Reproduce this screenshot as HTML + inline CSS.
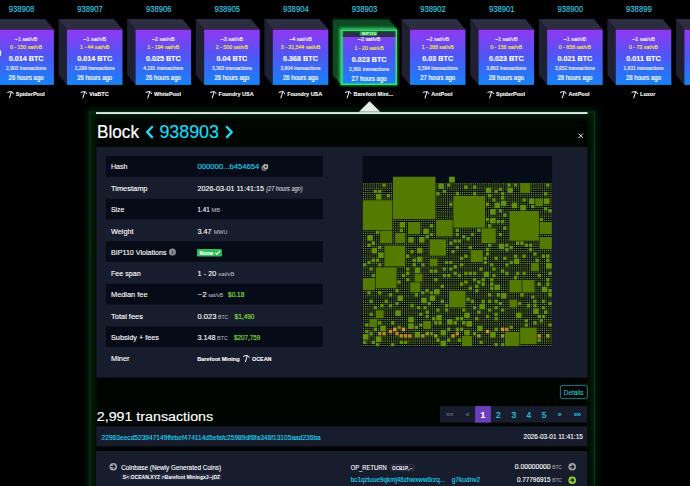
<!DOCTYPE html>
<html><head><meta charset="utf-8"><style>
html,body{margin:0;padding:0;background:#000;width:690px;height:486px;overflow:hidden}
svg{display:block}
text{font-family:"Liberation Sans",sans-serif}
</style></head><body>
<svg width="690" height="486" viewBox="0 0 690 486">
<defs>
<linearGradient id="face" x1="0" y1="0" x2="0" y2="1"><stop offset="0" stop-color="#9238f2"/><stop offset="0.45" stop-color="#5254f4"/><stop offset="1" stop-color="#1683f8"/></linearGradient>
<filter id="blur1" x="-50%" y="-50%" width="200%" height="200%"><feGaussianBlur stdDeviation="0.8"/></filter>
<filter id="blur2" x="-50%" y="-50%" width="200%" height="200%"><feGaussianBlur stdDeviation="1.5"/></filter>
<filter id="blur3" x="-50%" y="-50%" width="200%" height="200%"><feGaussianBlur stdDeviation="3"/></filter>
<filter id="blur4" x="-50%" y="-50%" width="200%" height="200%"><feGaussianBlur stdDeviation="4"/></filter>
</defs>
<rect width="690" height="486" fill="#000"/>
<rect x="89.5" y="112.0" width="505.50" height="394.0" fill="none" stroke="#0a3515" stroke-width="5" filter="url(#blur3)" opacity="0.7"/>
<rect x="89.5" y="112.0" width="505.50" height="394.0" fill="#010501"/>
<clipPath id="cclip"><rect x="89.5" y="112.0" width="505.50" height="394.0"/></clipPath>
<g clip-path="url(#cclip)"><rect x="89.5" y="112.0" width="505.50" height="394.0" fill="none" stroke="#042a0c" stroke-width="10" filter="url(#blur3)" opacity="0.75"/></g>
<rect x="89.9" y="112.0" width="504.70" height="394.0" fill="none" stroke="#12401f" stroke-width="0.8"/>
<polygon points="-10.00,19.4 45.60,19.4 53.90,29.6 -1.70,29.6" fill="#2b2e41"/>
<polygon points="-10.00,19.4 -1.70,29.6 -1.70,84.9 -10.00,74.90" fill="#1f2132"/>
<rect x="-1.70" y="29.6" width="55.6" height="55.30" fill="url(#face)"/>
<rect x="-10.00" y="19.4" width="55.6" height="0.9" fill="#31334a"/>
<text x="21.50" y="11.80" font-size="8.13" fill="#34cce4" stroke="#34cce4" stroke-width="0.130" text-anchor="middle" font-weight="normal" font-style="normal"  textLength="25.60" lengthAdjust="spacingAndGlyphs">938908</text>
<text x="26.10" y="40.60" font-size="6.21" fill="#f6f0ff" stroke="#f6f0ff" stroke-width="0.200" text-anchor="middle" font-weight="normal" font-style="normal"  textLength="22.66" lengthAdjust="spacingAndGlyphs">~1 sat/vB</text>
<text x="26.10" y="48.90" font-size="5.98" fill="#f2e23c" stroke="#f2e23c" stroke-width="0.200" text-anchor="middle" font-weight="normal" font-style="normal"  textLength="32.08" lengthAdjust="spacingAndGlyphs">0 - 150 sat/vB</text>
<text x="26.10" y="61.00" font-size="7.70" fill="#fff" stroke="#fff" stroke-width="0.123" text-anchor="middle" font-weight="bold" font-style="normal"  textLength="34.82" lengthAdjust="spacingAndGlyphs">0.014 BTC</text>
<text x="26.10" y="70.30" font-size="5.49" fill="#f0f0ff" stroke="#f0f0ff" stroke-width="0.150" text-anchor="middle" font-weight="normal" font-style="normal"  textLength="40.04" lengthAdjust="spacingAndGlyphs">2,903 transactions</text>
<text x="26.10" y="80.10" font-size="6.42" fill="#fff" stroke="#fff" stroke-width="0.180" text-anchor="middle" font-weight="normal" font-style="normal"  textLength="35.03" lengthAdjust="spacingAndGlyphs">26 hours ago</text>
<g transform="translate(7.38,91.30) scale(1.000)"><path d="M0.3,1.0 Q2.6,0.1 4.4,0.5 Q5.5,0.9 5.9,2.3 M3.9,0.5 Q3.3,3.6 2.1,6.5" stroke="#fff" stroke-width="1.0" fill="none" stroke-linecap="round" stroke-linejoin="round"/></g>
<text x="15.78" y="96.40" font-size="5.89" fill="#fff" stroke="#fff" stroke-width="0.094" text-anchor="start" font-weight="bold" font-style="normal"  textLength="29.03" lengthAdjust="spacingAndGlyphs">SpiderPool</text>
<polygon points="58.60,19.4 114.20,19.4 122.50,29.6 66.90,29.6" fill="#2b2e41"/>
<polygon points="58.60,19.4 66.90,29.6 66.90,84.9 58.60,74.90" fill="#1f2132"/>
<rect x="66.90" y="29.6" width="55.6" height="55.30" fill="url(#face)"/>
<rect x="58.60" y="19.4" width="55.6" height="0.9" fill="#31334a"/>
<text x="90.10" y="11.80" font-size="8.13" fill="#34cce4" stroke="#34cce4" stroke-width="0.130" text-anchor="middle" font-weight="normal" font-style="normal"  textLength="25.60" lengthAdjust="spacingAndGlyphs">938907</text>
<text x="94.70" y="40.60" font-size="6.21" fill="#f6f0ff" stroke="#f6f0ff" stroke-width="0.200" text-anchor="middle" font-weight="normal" font-style="normal"  textLength="22.66" lengthAdjust="spacingAndGlyphs">~1 sat/vB</text>
<text x="94.70" y="48.90" font-size="5.98" fill="#f2e23c" stroke="#f2e23c" stroke-width="0.200" text-anchor="middle" font-weight="normal" font-style="normal"  textLength="29.19" lengthAdjust="spacingAndGlyphs">1 - 44 sat/vB</text>
<text x="94.70" y="61.00" font-size="7.70" fill="#fff" stroke="#fff" stroke-width="0.123" text-anchor="middle" font-weight="bold" font-style="normal"  textLength="34.82" lengthAdjust="spacingAndGlyphs">0.014 BTC</text>
<text x="94.70" y="70.30" font-size="5.49" fill="#f0f0ff" stroke="#f0f0ff" stroke-width="0.150" text-anchor="middle" font-weight="normal" font-style="normal"  textLength="40.04" lengthAdjust="spacingAndGlyphs">2,299 transactions</text>
<text x="94.70" y="80.10" font-size="6.42" fill="#fff" stroke="#fff" stroke-width="0.180" text-anchor="middle" font-weight="normal" font-style="normal"  textLength="35.03" lengthAdjust="spacingAndGlyphs">26 hours ago</text>
<g transform="translate(80.77,91.30) scale(1.000)"><path d="M0.3,1.0 Q2.6,0.1 4.4,0.5 Q5.5,0.9 5.9,2.3 M3.9,0.5 Q3.3,3.6 2.1,6.5" stroke="#fff" stroke-width="1.0" fill="none" stroke-linecap="round" stroke-linejoin="round"/></g>
<text x="89.17" y="96.40" font-size="5.89" fill="#fff" stroke="#fff" stroke-width="0.094" text-anchor="start" font-weight="bold" font-style="normal"  textLength="19.46" lengthAdjust="spacingAndGlyphs">ViaBTC</text>
<polygon points="127.20,19.4 182.80,19.4 191.10,29.6 135.50,29.6" fill="#2b2e41"/>
<polygon points="127.20,19.4 135.50,29.6 135.50,84.9 127.20,74.90" fill="#1f2132"/>
<rect x="135.50" y="29.6" width="55.6" height="55.30" fill="url(#face)"/>
<rect x="127.20" y="19.4" width="55.6" height="0.9" fill="#31334a"/>
<text x="158.70" y="11.80" font-size="8.13" fill="#34cce4" stroke="#34cce4" stroke-width="0.130" text-anchor="middle" font-weight="normal" font-style="normal"  textLength="25.60" lengthAdjust="spacingAndGlyphs">938906</text>
<text x="163.30" y="40.60" font-size="6.21" fill="#f6f0ff" stroke="#f6f0ff" stroke-width="0.200" text-anchor="middle" font-weight="normal" font-style="normal"  textLength="22.66" lengthAdjust="spacingAndGlyphs">~2 sat/vB</text>
<text x="163.30" y="48.90" font-size="5.98" fill="#f2e23c" stroke="#f2e23c" stroke-width="0.200" text-anchor="middle" font-weight="normal" font-style="normal"  textLength="32.08" lengthAdjust="spacingAndGlyphs">1 - 194 sat/vB</text>
<text x="163.30" y="61.00" font-size="7.70" fill="#fff" stroke="#fff" stroke-width="0.123" text-anchor="middle" font-weight="bold" font-style="normal"  textLength="34.82" lengthAdjust="spacingAndGlyphs">0.025 BTC</text>
<text x="163.30" y="70.30" font-size="5.49" fill="#f0f0ff" stroke="#f0f0ff" stroke-width="0.150" text-anchor="middle" font-weight="normal" font-style="normal"  textLength="40.04" lengthAdjust="spacingAndGlyphs">4,191 transactions</text>
<text x="163.30" y="80.10" font-size="6.42" fill="#fff" stroke="#fff" stroke-width="0.180" text-anchor="middle" font-weight="normal" font-style="normal"  textLength="35.03" lengthAdjust="spacingAndGlyphs">26 hours ago</text>
<g transform="translate(145.66,91.30) scale(1.000)"><path d="M0.3,1.0 Q2.6,0.1 4.4,0.5 Q5.5,0.9 5.9,2.3 M3.9,0.5 Q3.3,3.6 2.1,6.5" stroke="#fff" stroke-width="1.0" fill="none" stroke-linecap="round" stroke-linejoin="round"/></g>
<text x="154.06" y="96.40" font-size="5.89" fill="#fff" stroke="#fff" stroke-width="0.094" text-anchor="start" font-weight="bold" font-style="normal"  textLength="26.89" lengthAdjust="spacingAndGlyphs">WhitePool</text>
<polygon points="195.80,19.4 251.40,19.4 259.70,29.6 204.10,29.6" fill="#2b2e41"/>
<polygon points="195.80,19.4 204.10,29.6 204.10,84.9 195.80,74.90" fill="#1f2132"/>
<rect x="204.10" y="29.6" width="55.6" height="55.30" fill="url(#face)"/>
<rect x="195.80" y="19.4" width="55.6" height="0.9" fill="#31334a"/>
<text x="227.30" y="11.80" font-size="8.13" fill="#34cce4" stroke="#34cce4" stroke-width="0.130" text-anchor="middle" font-weight="normal" font-style="normal"  textLength="25.60" lengthAdjust="spacingAndGlyphs">938905</text>
<text x="231.90" y="40.60" font-size="6.21" fill="#f6f0ff" stroke="#f6f0ff" stroke-width="0.200" text-anchor="middle" font-weight="normal" font-style="normal"  textLength="22.66" lengthAdjust="spacingAndGlyphs">~3 sat/vB</text>
<text x="231.90" y="48.90" font-size="5.98" fill="#f2e23c" stroke="#f2e23c" stroke-width="0.200" text-anchor="middle" font-weight="normal" font-style="normal"  textLength="32.08" lengthAdjust="spacingAndGlyphs">2 - 500 sat/vB</text>
<text x="231.90" y="61.00" font-size="7.70" fill="#fff" stroke="#fff" stroke-width="0.123" text-anchor="middle" font-weight="bold" font-style="normal"  textLength="30.81" lengthAdjust="spacingAndGlyphs">0.04 BTC</text>
<text x="231.90" y="70.30" font-size="5.49" fill="#f0f0ff" stroke="#f0f0ff" stroke-width="0.150" text-anchor="middle" font-weight="normal" font-style="normal"  textLength="40.04" lengthAdjust="spacingAndGlyphs">3,383 transactions</text>
<text x="231.90" y="80.10" font-size="6.42" fill="#fff" stroke="#fff" stroke-width="0.180" text-anchor="middle" font-weight="normal" font-style="normal"  textLength="35.03" lengthAdjust="spacingAndGlyphs">26 hours ago</text>
<g transform="translate(210.13,91.30) scale(1.000)"><path d="M0.3,1.0 Q2.6,0.1 4.4,0.5 Q5.5,0.9 5.9,2.3 M3.9,0.5 Q3.3,3.6 2.1,6.5" stroke="#fff" stroke-width="1.0" fill="none" stroke-linecap="round" stroke-linejoin="round"/></g>
<text x="218.53" y="96.40" font-size="5.89" fill="#fff" stroke="#fff" stroke-width="0.094" text-anchor="start" font-weight="bold" font-style="normal"  textLength="35.14" lengthAdjust="spacingAndGlyphs">Foundry USA</text>
<polygon points="264.40,19.4 320.00,19.4 328.30,29.6 272.70,29.6" fill="#2b2e41"/>
<polygon points="264.40,19.4 272.70,29.6 272.70,84.9 264.40,74.90" fill="#1f2132"/>
<rect x="272.70" y="29.6" width="55.6" height="55.30" fill="url(#face)"/>
<rect x="264.40" y="19.4" width="55.6" height="0.9" fill="#31334a"/>
<text x="295.90" y="11.80" font-size="8.13" fill="#34cce4" stroke="#34cce4" stroke-width="0.130" text-anchor="middle" font-weight="normal" font-style="normal"  textLength="25.60" lengthAdjust="spacingAndGlyphs">938904</text>
<text x="300.50" y="40.60" font-size="6.21" fill="#f6f0ff" stroke="#f6f0ff" stroke-width="0.200" text-anchor="middle" font-weight="normal" font-style="normal"  textLength="22.66" lengthAdjust="spacingAndGlyphs">~4 sat/vB</text>
<text x="300.50" y="48.90" font-size="5.98" fill="#f2e23c" stroke="#f2e23c" stroke-width="0.200" text-anchor="middle" font-weight="normal" font-style="normal"  textLength="39.31" lengthAdjust="spacingAndGlyphs">3 - 31,544 sat/vB</text>
<text x="300.50" y="61.00" font-size="7.70" fill="#fff" stroke="#fff" stroke-width="0.123" text-anchor="middle" font-weight="bold" font-style="normal"  textLength="34.82" lengthAdjust="spacingAndGlyphs">0.368 BTC</text>
<text x="300.50" y="70.30" font-size="5.49" fill="#f0f0ff" stroke="#f0f0ff" stroke-width="0.150" text-anchor="middle" font-weight="normal" font-style="normal"  textLength="40.04" lengthAdjust="spacingAndGlyphs">3,604 transactions</text>
<text x="300.50" y="80.10" font-size="6.42" fill="#fff" stroke="#fff" stroke-width="0.180" text-anchor="middle" font-weight="normal" font-style="normal"  textLength="35.03" lengthAdjust="spacingAndGlyphs">26 hours ago</text>
<g transform="translate(278.73,91.30) scale(1.000)"><path d="M0.3,1.0 Q2.6,0.1 4.4,0.5 Q5.5,0.9 5.9,2.3 M3.9,0.5 Q3.3,3.6 2.1,6.5" stroke="#fff" stroke-width="1.0" fill="none" stroke-linecap="round" stroke-linejoin="round"/></g>
<text x="287.13" y="96.40" font-size="5.89" fill="#fff" stroke="#fff" stroke-width="0.094" text-anchor="start" font-weight="bold" font-style="normal"  textLength="35.14" lengthAdjust="spacingAndGlyphs">Foundry USA</text>
<polygon points="333.00,19.4 388.60,19.4 396.90,29.6 396.90,84.9 341.30,84.9 333.00,74.90" fill="none" stroke="#1aff60" stroke-width="1.5" opacity="0.2" filter="url(#blur2)"/>
<polygon points="333.00,19.4 388.60,19.4 396.90,29.6 341.30,29.6" fill="#0e4a22"/>
<polygon points="333.00,19.4 341.30,29.6 341.30,84.9 333.00,74.90" fill="#0e4a22"/>
<clipPath id="selclip"><polygon points="333.00,19.4 388.60,19.4 396.90,29.6 341.30,29.6 341.30,84.9 333.00,74.90"/></clipPath>
<g clip-path="url(#selclip)"><rect x="341.30" y="29.6" width="55.6" height="55.30" fill="none" stroke="#2cff70" stroke-width="4" opacity="0.55" filter="url(#blur2)"/></g>
<rect x="341.30" y="29.6" width="55.6" height="55.30" fill="url(#face)"/>
<rect x="341.30" y="29.6" width="55.6" height="7.4" fill="#2a3146"/>
<rect x="359.90" y="31.4" width="17.4" height="4.4" rx="0.8" fill="#2fa84a"/>
<text x="369.10" y="35.00" font-size="3.64" fill="#d8ffe0"  text-anchor="middle" font-weight="bold" font-style="normal"  textLength="14.00" lengthAdjust="spacingAndGlyphs">BIP110</text>
<rect x="341.30" y="29.60" width="55.6" height="55.30" fill="none" stroke="#2cff70" stroke-width="2" opacity="0.5" filter="url(#blur1)"/>
<rect x="341.90" y="30.20" width="54.40" height="54.10" fill="none" stroke="#34f068" stroke-width="1.3"/>
<text x="364.50" y="11.80" font-size="8.13" fill="#34cce4" stroke="#34cce4" stroke-width="0.130" text-anchor="middle" font-weight="normal" font-style="normal"  textLength="25.60" lengthAdjust="spacingAndGlyphs">938903</text>
<text x="369.10" y="41.40" font-size="6.21" fill="#f6f0ff" stroke="#f6f0ff" stroke-width="0.200" text-anchor="middle" font-weight="normal" font-style="normal"  textLength="22.66" lengthAdjust="spacingAndGlyphs">~2 sat/vB</text>
<text x="369.10" y="49.50" font-size="5.98" fill="#f2e23c" stroke="#f2e23c" stroke-width="0.200" text-anchor="middle" font-weight="normal" font-style="normal"  textLength="29.19" lengthAdjust="spacingAndGlyphs">1 - 20 sat/vB</text>
<text x="369.10" y="61.50" font-size="7.70" fill="#fff" stroke="#fff" stroke-width="0.123" text-anchor="middle" font-weight="bold" font-style="normal"  textLength="34.82" lengthAdjust="spacingAndGlyphs">0.023 BTC</text>
<text x="369.10" y="70.80" font-size="5.49" fill="#f0f0ff" stroke="#f0f0ff" stroke-width="0.150" text-anchor="middle" font-weight="normal" font-style="normal"  textLength="40.04" lengthAdjust="spacingAndGlyphs">2,991 transactions</text>
<text x="369.10" y="80.60" font-size="6.42" fill="#fff" stroke="#fff" stroke-width="0.180" text-anchor="middle" font-weight="normal" font-style="normal"  textLength="35.03" lengthAdjust="spacingAndGlyphs">27 hours ago</text>
<g transform="translate(345.04,91.30) scale(1.000)"><path d="M0.3,1.0 Q2.6,0.1 4.4,0.5 Q5.5,0.9 5.9,2.3 M3.9,0.5 Q3.3,3.6 2.1,6.5" stroke="#fff" stroke-width="1.0" fill="none" stroke-linecap="round" stroke-linejoin="round"/></g>
<text x="353.44" y="96.40" font-size="5.89" fill="#fff" stroke="#fff" stroke-width="0.094" text-anchor="start" font-weight="bold" font-style="normal"  textLength="39.72" lengthAdjust="spacingAndGlyphs">Barefoot Mini...</text>
<polygon points="401.60,19.4 457.20,19.4 465.50,29.6 409.90,29.6" fill="#2b2e41"/>
<polygon points="401.60,19.4 409.90,29.6 409.90,84.9 401.60,74.90" fill="#1f2132"/>
<rect x="409.90" y="29.6" width="55.6" height="55.30" fill="url(#face)"/>
<rect x="401.60" y="19.4" width="55.6" height="0.9" fill="#31334a"/>
<text x="433.10" y="11.80" font-size="8.13" fill="#34cce4" stroke="#34cce4" stroke-width="0.130" text-anchor="middle" font-weight="normal" font-style="normal"  textLength="25.60" lengthAdjust="spacingAndGlyphs">938902</text>
<text x="437.70" y="40.60" font-size="6.21" fill="#f6f0ff" stroke="#f6f0ff" stroke-width="0.200" text-anchor="middle" font-weight="normal" font-style="normal"  textLength="22.66" lengthAdjust="spacingAndGlyphs">~2 sat/vB</text>
<text x="437.70" y="48.90" font-size="5.98" fill="#f2e23c" stroke="#f2e23c" stroke-width="0.200" text-anchor="middle" font-weight="normal" font-style="normal"  textLength="32.08" lengthAdjust="spacingAndGlyphs">1 - 268 sat/vB</text>
<text x="437.70" y="61.00" font-size="7.70" fill="#fff" stroke="#fff" stroke-width="0.123" text-anchor="middle" font-weight="bold" font-style="normal"  textLength="30.81" lengthAdjust="spacingAndGlyphs">0.03 BTC</text>
<text x="437.70" y="70.30" font-size="5.49" fill="#f0f0ff" stroke="#f0f0ff" stroke-width="0.150" text-anchor="middle" font-weight="normal" font-style="normal"  textLength="40.04" lengthAdjust="spacingAndGlyphs">3,594 transactions</text>
<text x="437.70" y="80.10" font-size="6.42" fill="#fff" stroke="#fff" stroke-width="0.180" text-anchor="middle" font-weight="normal" font-style="normal"  textLength="35.03" lengthAdjust="spacingAndGlyphs">27 hours ago</text>
<g transform="translate(422.96,91.30) scale(1.000)"><path d="M0.3,1.0 Q2.6,0.1 4.4,0.5 Q5.5,0.9 5.9,2.3 M3.9,0.5 Q3.3,3.6 2.1,6.5" stroke="#fff" stroke-width="1.0" fill="none" stroke-linecap="round" stroke-linejoin="round"/></g>
<text x="431.36" y="96.40" font-size="5.89" fill="#fff" stroke="#fff" stroke-width="0.094" text-anchor="start" font-weight="bold" font-style="normal"  textLength="21.08" lengthAdjust="spacingAndGlyphs">AntPool</text>
<polygon points="470.20,19.4 525.80,19.4 534.10,29.6 478.50,29.6" fill="#2b2e41"/>
<polygon points="470.20,19.4 478.50,29.6 478.50,84.9 470.20,74.90" fill="#1f2132"/>
<rect x="478.50" y="29.6" width="55.6" height="55.30" fill="url(#face)"/>
<rect x="470.20" y="19.4" width="55.6" height="0.9" fill="#31334a"/>
<text x="501.70" y="11.80" font-size="8.13" fill="#34cce4" stroke="#34cce4" stroke-width="0.130" text-anchor="middle" font-weight="normal" font-style="normal"  textLength="25.60" lengthAdjust="spacingAndGlyphs">938901</text>
<text x="506.30" y="40.60" font-size="6.21" fill="#f6f0ff" stroke="#f6f0ff" stroke-width="0.200" text-anchor="middle" font-weight="normal" font-style="normal"  textLength="22.66" lengthAdjust="spacingAndGlyphs">~1 sat/vB</text>
<text x="506.30" y="48.90" font-size="5.98" fill="#f2e23c" stroke="#f2e23c" stroke-width="0.200" text-anchor="middle" font-weight="normal" font-style="normal"  textLength="32.08" lengthAdjust="spacingAndGlyphs">0 - 156 sat/vB</text>
<text x="506.30" y="61.00" font-size="7.70" fill="#fff" stroke="#fff" stroke-width="0.123" text-anchor="middle" font-weight="bold" font-style="normal"  textLength="34.82" lengthAdjust="spacingAndGlyphs">0.023 BTC</text>
<text x="506.30" y="70.30" font-size="5.49" fill="#f0f0ff" stroke="#f0f0ff" stroke-width="0.150" text-anchor="middle" font-weight="normal" font-style="normal"  textLength="40.04" lengthAdjust="spacingAndGlyphs">3,863 transactions</text>
<text x="506.30" y="80.10" font-size="6.42" fill="#fff" stroke="#fff" stroke-width="0.180" text-anchor="middle" font-weight="normal" font-style="normal"  textLength="35.03" lengthAdjust="spacingAndGlyphs">28 hours ago</text>
<g transform="translate(487.58,91.30) scale(1.000)"><path d="M0.3,1.0 Q2.6,0.1 4.4,0.5 Q5.5,0.9 5.9,2.3 M3.9,0.5 Q3.3,3.6 2.1,6.5" stroke="#fff" stroke-width="1.0" fill="none" stroke-linecap="round" stroke-linejoin="round"/></g>
<text x="495.98" y="96.40" font-size="5.89" fill="#fff" stroke="#fff" stroke-width="0.094" text-anchor="start" font-weight="bold" font-style="normal"  textLength="29.03" lengthAdjust="spacingAndGlyphs">SpiderPool</text>
<polygon points="538.80,19.4 594.40,19.4 602.70,29.6 547.10,29.6" fill="#2b2e41"/>
<polygon points="538.80,19.4 547.10,29.6 547.10,84.9 538.80,74.90" fill="#1f2132"/>
<rect x="547.10" y="29.6" width="55.6" height="55.30" fill="url(#face)"/>
<rect x="538.80" y="19.4" width="55.6" height="0.9" fill="#31334a"/>
<text x="570.30" y="11.80" font-size="8.13" fill="#34cce4" stroke="#34cce4" stroke-width="0.130" text-anchor="middle" font-weight="normal" font-style="normal"  textLength="25.60" lengthAdjust="spacingAndGlyphs">938900</text>
<text x="574.90" y="40.60" font-size="6.21" fill="#f6f0ff" stroke="#f6f0ff" stroke-width="0.200" text-anchor="middle" font-weight="normal" font-style="normal"  textLength="22.66" lengthAdjust="spacingAndGlyphs">~1 sat/vB</text>
<text x="574.90" y="48.90" font-size="5.98" fill="#f2e23c" stroke="#f2e23c" stroke-width="0.200" text-anchor="middle" font-weight="normal" font-style="normal"  textLength="32.08" lengthAdjust="spacingAndGlyphs">0 - 656 sat/vB</text>
<text x="574.90" y="61.00" font-size="7.70" fill="#fff" stroke="#fff" stroke-width="0.123" text-anchor="middle" font-weight="bold" font-style="normal"  textLength="34.82" lengthAdjust="spacingAndGlyphs">0.021 BTC</text>
<text x="574.90" y="70.30" font-size="5.49" fill="#f0f0ff" stroke="#f0f0ff" stroke-width="0.150" text-anchor="middle" font-weight="normal" font-style="normal"  textLength="40.04" lengthAdjust="spacingAndGlyphs">3,652 transactions</text>
<text x="574.90" y="80.10" font-size="6.42" fill="#fff" stroke="#fff" stroke-width="0.180" text-anchor="middle" font-weight="normal" font-style="normal"  textLength="35.03" lengthAdjust="spacingAndGlyphs">28 hours ago</text>
<g transform="translate(560.16,91.30) scale(1.000)"><path d="M0.3,1.0 Q2.6,0.1 4.4,0.5 Q5.5,0.9 5.9,2.3 M3.9,0.5 Q3.3,3.6 2.1,6.5" stroke="#fff" stroke-width="1.0" fill="none" stroke-linecap="round" stroke-linejoin="round"/></g>
<text x="568.56" y="96.40" font-size="5.89" fill="#fff" stroke="#fff" stroke-width="0.094" text-anchor="start" font-weight="bold" font-style="normal"  textLength="21.08" lengthAdjust="spacingAndGlyphs">AntPool</text>
<polygon points="607.40,19.4 663.00,19.4 671.30,29.6 615.70,29.6" fill="#2b2e41"/>
<polygon points="607.40,19.4 615.70,29.6 615.70,84.9 607.40,74.90" fill="#1f2132"/>
<rect x="615.70" y="29.6" width="55.6" height="55.30" fill="url(#face)"/>
<rect x="607.40" y="19.4" width="55.6" height="0.9" fill="#31334a"/>
<text x="638.90" y="11.80" font-size="8.13" fill="#34cce4" stroke="#34cce4" stroke-width="0.130" text-anchor="middle" font-weight="normal" font-style="normal"  textLength="25.60" lengthAdjust="spacingAndGlyphs">938899</text>
<text x="643.50" y="40.60" font-size="6.21" fill="#f6f0ff" stroke="#f6f0ff" stroke-width="0.200" text-anchor="middle" font-weight="normal" font-style="normal"  textLength="22.66" lengthAdjust="spacingAndGlyphs">~1 sat/vB</text>
<text x="643.50" y="48.90" font-size="5.98" fill="#f2e23c" stroke="#f2e23c" stroke-width="0.200" text-anchor="middle" font-weight="normal" font-style="normal"  textLength="29.19" lengthAdjust="spacingAndGlyphs">0 - 73 sat/vB</text>
<text x="643.50" y="61.00" font-size="7.70" fill="#fff" stroke="#fff" stroke-width="0.123" text-anchor="middle" font-weight="bold" font-style="normal"  textLength="34.42" lengthAdjust="spacingAndGlyphs">0.011 BTC</text>
<text x="643.50" y="70.30" font-size="5.49" fill="#f0f0ff" stroke="#f0f0ff" stroke-width="0.150" text-anchor="middle" font-weight="normal" font-style="normal"  textLength="40.04" lengthAdjust="spacingAndGlyphs">1,631 transactions</text>
<text x="643.50" y="80.10" font-size="6.42" fill="#fff" stroke="#fff" stroke-width="0.180" text-anchor="middle" font-weight="normal" font-style="normal"  textLength="35.03" lengthAdjust="spacingAndGlyphs">28 hours ago</text>
<g transform="translate(631.66,91.30) scale(1.000)"><path d="M0.3,1.0 Q2.6,0.1 4.4,0.5 Q5.5,0.9 5.9,2.3 M3.9,0.5 Q3.3,3.6 2.1,6.5" stroke="#fff" stroke-width="1.0" fill="none" stroke-linecap="round" stroke-linejoin="round"/></g>
<text x="640.06" y="96.40" font-size="5.89" fill="#fff" stroke="#fff" stroke-width="0.094" text-anchor="start" font-weight="bold" font-style="normal"  textLength="15.28" lengthAdjust="spacingAndGlyphs">Luxor</text>
<polygon points="676.00,19.4 731.60,19.4 739.90,29.6 684.30,29.6" fill="#2b2e41"/>
<polygon points="676.00,19.4 684.30,29.6 684.30,84.9 676.00,74.90" fill="#1f2132"/>
<rect x="684.30" y="29.6" width="55.6" height="55.30" fill="url(#face)"/>
<rect x="676.00" y="19.4" width="55.6" height="0.9" fill="#31334a"/>
<text x="707.50" y="11.80" font-size="8.13" fill="#34cce4" stroke="#34cce4" stroke-width="0.130" text-anchor="middle" font-weight="normal" font-style="normal"  textLength="25.60" lengthAdjust="spacingAndGlyphs">938898</text>
<text x="712.10" y="40.60" font-size="6.21" fill="#f6f0ff" stroke="#f6f0ff" stroke-width="0.200" text-anchor="middle" font-weight="normal" font-style="normal"  textLength="22.66" lengthAdjust="spacingAndGlyphs">~1 sat/vB</text>
<text x="712.10" y="48.90" font-size="5.98" fill="#f2e23c" stroke="#f2e23c" stroke-width="0.200" text-anchor="middle" font-weight="normal" font-style="normal"  textLength="29.19" lengthAdjust="spacingAndGlyphs">0 - 73 sat/vB</text>
<text x="712.10" y="61.00" font-size="7.70" fill="#fff" stroke="#fff" stroke-width="0.123" text-anchor="middle" font-weight="bold" font-style="normal"  textLength="34.42" lengthAdjust="spacingAndGlyphs">0.011 BTC</text>
<text x="712.10" y="70.30" font-size="5.49" fill="#f0f0ff" stroke="#f0f0ff" stroke-width="0.150" text-anchor="middle" font-weight="normal" font-style="normal"  textLength="40.04" lengthAdjust="spacingAndGlyphs">1,631 transactions</text>
<text x="712.10" y="80.10" font-size="6.42" fill="#fff" stroke="#fff" stroke-width="0.180" text-anchor="middle" font-weight="normal" font-style="normal"  textLength="35.03" lengthAdjust="spacingAndGlyphs">28 hours ago</text>
<g transform="translate(700.26,91.30) scale(1.000)"><path d="M0.3,1.0 Q2.6,0.1 4.4,0.5 Q5.5,0.9 5.9,2.3 M3.9,0.5 Q3.3,3.6 2.1,6.5" stroke="#fff" stroke-width="1.0" fill="none" stroke-linecap="round" stroke-linejoin="round"/></g>
<text x="708.66" y="96.40" font-size="5.89" fill="#fff" stroke="#fff" stroke-width="0.094" text-anchor="start" font-weight="bold" font-style="normal"  textLength="15.28" lengthAdjust="spacingAndGlyphs">Luxor</text>
<rect x="-2" y="50.2" width="3.2" height="5.8" rx="1.2" fill="#e8e8f0"/>
<polygon points="369.6,101.2 380.2,111.8 359.0,111.8" fill="#e2efe6"/>
<rect x="96" y="112.1" width="491.5" height="1.9" fill="#e3ece5"/>
<text x="97.00" y="138.30" font-size="17.80" fill="#fff" stroke="#fff" stroke-width="0.200" text-anchor="start" font-weight="normal" font-style="normal"  textLength="42.00" lengthAdjust="spacingAndGlyphs">Block</text>
<path d="M152.0,127.0 L147.2,132.1 L152.0,137.2" stroke="#1bd8f4" stroke-width="2.5" fill="none" stroke-linecap="round" stroke-linejoin="round"/>
<text x="159.40" y="138.30" font-size="17.80" fill="#1bd8f4" stroke="#1bd8f4" stroke-width="0.200" text-anchor="start" font-weight="normal" font-style="normal"  textLength="59.60" lengthAdjust="spacingAndGlyphs">938903</text>
<path d="M226.9,127.0 L231.7,132.1 L226.9,137.2" stroke="#1bd8f4" stroke-width="2.5" fill="none" stroke-linecap="round" stroke-linejoin="round"/>
<path d="M578.9,133.9 L582.7,137.7 M582.7,133.9 L578.9,137.7" stroke="#fff" stroke-width="0.9" stroke-linecap="round"/>
<rect x="96.3" y="146.8" width="491.20" height="230.80" fill="#181d2d"/>
<rect x="105.8" y="156.20" width="217.00" height="20.5" fill="#050b17"/>
<text x="111.00" y="169.45" font-size="8.03" fill="#fff" stroke="#fff" stroke-width="0.125" text-anchor="start" font-weight="normal" font-style="normal"  textLength="16.50" lengthAdjust="spacingAndGlyphs">Hash</text>
<text x="111.00" y="191.15" font-size="8.03" fill="#fff" stroke="#fff" stroke-width="0.125" text-anchor="start" font-weight="normal" font-style="normal"  textLength="36.50" lengthAdjust="spacingAndGlyphs">Timestamp</text>
<rect x="105.8" y="198.75" width="217.00" height="20.5" fill="#050b17"/>
<text x="111.00" y="212.00" font-size="8.03" fill="#fff" stroke="#fff" stroke-width="0.125" text-anchor="start" font-weight="normal" font-style="normal"  textLength="13.40" lengthAdjust="spacingAndGlyphs">Size</text>
<text x="111.00" y="233.70" font-size="8.03" fill="#fff" stroke="#fff" stroke-width="0.125" text-anchor="start" font-weight="normal" font-style="normal"  textLength="22.60" lengthAdjust="spacingAndGlyphs">Weight</text>
<rect x="105.8" y="241.30" width="217.00" height="20.5" fill="#050b17"/>
<text x="111.00" y="254.55" font-size="8.03" fill="#fff" stroke="#fff" stroke-width="0.125" text-anchor="start" font-weight="normal" font-style="normal"  textLength="55.50" lengthAdjust="spacingAndGlyphs">BIP110 Violations</text>
<text x="111.00" y="276.25" font-size="8.03" fill="#fff" stroke="#fff" stroke-width="0.125" text-anchor="start" font-weight="normal" font-style="normal"  textLength="29.80" lengthAdjust="spacingAndGlyphs">Fee span</text>
<rect x="105.8" y="283.85" width="217.00" height="20.5" fill="#050b17"/>
<text x="111.00" y="297.10" font-size="8.03" fill="#fff" stroke="#fff" stroke-width="0.125" text-anchor="start" font-weight="normal" font-style="normal"  textLength="36.50" lengthAdjust="spacingAndGlyphs">Median fee</text>
<text x="111.00" y="318.80" font-size="8.03" fill="#fff" stroke="#fff" stroke-width="0.125" text-anchor="start" font-weight="normal" font-style="normal"  textLength="32.00" lengthAdjust="spacingAndGlyphs">Total fees</text>
<rect x="105.8" y="326.40" width="217.00" height="20.5" fill="#050b17"/>
<text x="111.00" y="339.65" font-size="8.03" fill="#fff" stroke="#fff" stroke-width="0.125" text-anchor="start" font-weight="normal" font-style="normal"  textLength="48.00" lengthAdjust="spacingAndGlyphs">Subsidy + fees</text>
<text x="111.00" y="361.35" font-size="8.03" fill="#fff" stroke="#fff" stroke-width="0.125" text-anchor="start" font-weight="normal" font-style="normal"  textLength="18.60" lengthAdjust="spacingAndGlyphs">Miner</text>
<text x="197.60" y="169.45" font-size="8.03" fill="#1bd8f4" stroke="#1bd8f4" stroke-width="0.125" text-anchor="start" font-weight="normal" font-style="normal"  textLength="61.60" lengthAdjust="spacingAndGlyphs">000000...b454654</text>
<g transform="translate(261.8,164.2)"><rect x="0.4" y="1.9" width="4.0" height="4.0" rx="0.6" fill="none" stroke="#d8d8d8" stroke-width="0.8"/><rect x="1.9" y="0.4" width="4.0" height="4.0" rx="0.6" fill="#d8d8d8" stroke="#d8d8d8" stroke-width="0.5"/><rect x="2.9" y="1.4" width="2.0" height="2.0" fill="#050b17"/></g>
<text x="197.60" y="191.15" font-size="8.03" fill="#fff" stroke="#fff" stroke-width="0.125" text-anchor="start" font-weight="normal" font-style="normal"  textLength="66.30" lengthAdjust="spacingAndGlyphs">2026-03-01 11:41:15</text>
<text x="266.20" y="191.15" font-size="6.42" fill="#d6d8de" stroke="#d6d8de" stroke-width="0.103" text-anchor="start" font-weight="normal" font-style="italic"  textLength="36.40" lengthAdjust="spacingAndGlyphs">(27 hours ago)</text>
<text x="197.60" y="212.00" font-size="8.03" fill="#fff" stroke="#fff" stroke-width="0.125" text-anchor="start" font-weight="normal" font-style="normal"  textLength="12.20" lengthAdjust="spacingAndGlyphs">1.41</text>
<text x="211.60" y="212.00" font-size="5.83" fill="#b0b4c0" stroke="#b0b4c0" stroke-width="0.091" text-anchor="start" font-weight="normal" font-style="normal"  textLength="8.50" lengthAdjust="spacingAndGlyphs">MB</text>
<text x="197.60" y="233.70" font-size="8.03" fill="#fff" stroke="#fff" stroke-width="0.125" text-anchor="start" font-weight="normal" font-style="normal"  textLength="13.90" lengthAdjust="spacingAndGlyphs">3.47</text>
<text x="213.80" y="233.70" font-size="5.83" fill="#b0b4c0" stroke="#b0b4c0" stroke-width="0.091" text-anchor="start" font-weight="normal" font-style="normal"  textLength="13.70" lengthAdjust="spacingAndGlyphs">MWU</text>
<circle cx="172.4" cy="252.1" r="3.5" fill="#8a8d96"/>
<text x="172.40" y="254.00" font-size="5.35" fill="#181d2d"  text-anchor="middle" font-weight="bold" font-style="normal" >i</text>
<rect x="197.0" y="249.1" width="24.9" height="7.5" rx="1.3" fill="#2dbf5a"/>
<text x="199.60" y="255.00" font-size="5.56" fill="#fff" stroke="#fff" stroke-width="0.120" text-anchor="start" font-weight="bold" font-style="normal"  textLength="13.80" lengthAdjust="spacingAndGlyphs">None</text>
<path d="M215.6,253.0 l1.3,1.4 l2.6,-3.0" stroke="#fff" stroke-width="1.1" fill="none" stroke-linecap="round" stroke-linejoin="round"/>
<text x="197.60" y="276.25" font-size="8.03" fill="#fff" stroke="#fff" stroke-width="0.125" text-anchor="start" font-weight="normal" font-style="normal"  textLength="18.70" lengthAdjust="spacingAndGlyphs">1 - 20</text>
<text x="218.30" y="276.25" font-size="5.83" fill="#b0b4c0" stroke="#b0b4c0" stroke-width="0.091" text-anchor="start" font-weight="normal" font-style="normal"  textLength="16.00" lengthAdjust="spacingAndGlyphs">sat/vB</text>
<text x="197.60" y="297.10" font-size="8.03" fill="#fff" stroke="#fff" stroke-width="0.125" text-anchor="start" font-weight="normal" font-style="normal"  textLength="9.00" lengthAdjust="spacingAndGlyphs">~2</text>
<text x="208.20" y="297.10" font-size="5.83" fill="#b0b4c0" stroke="#b0b4c0" stroke-width="0.091" text-anchor="start" font-weight="normal" font-style="normal"  textLength="14.90" lengthAdjust="spacingAndGlyphs">sat/vB</text>
<text x="228.00" y="297.10" font-size="7.39" fill="#7ad93a" stroke="#7ad93a" stroke-width="0.220" text-anchor="start" font-weight="normal" font-style="normal"  textLength="16.40" lengthAdjust="spacingAndGlyphs">$0.18</text>
<text x="197.60" y="318.80" font-size="8.03" fill="#fff" stroke="#fff" stroke-width="0.125" text-anchor="start" font-weight="normal" font-style="normal"  textLength="18.80" lengthAdjust="spacingAndGlyphs">0.023</text>
<text x="218.10" y="318.80" font-size="5.83" fill="#b0b4c0" stroke="#b0b4c0" stroke-width="0.091" text-anchor="start" font-weight="normal" font-style="normal"  textLength="10.10" lengthAdjust="spacingAndGlyphs">BTC</text>
<text x="234.60" y="318.80" font-size="7.39" fill="#7ad93a" stroke="#7ad93a" stroke-width="0.220" text-anchor="start" font-weight="normal" font-style="normal"  textLength="19.90" lengthAdjust="spacingAndGlyphs">$1,490</text>
<text x="197.60" y="339.65" font-size="8.03" fill="#fff" stroke="#fff" stroke-width="0.125" text-anchor="start" font-weight="normal" font-style="normal"  textLength="18.00" lengthAdjust="spacingAndGlyphs">3.148</text>
<text x="217.10" y="339.65" font-size="5.83" fill="#b0b4c0" stroke="#b0b4c0" stroke-width="0.091" text-anchor="start" font-weight="normal" font-style="normal"  textLength="10.80" lengthAdjust="spacingAndGlyphs">BTC</text>
<text x="234.10" y="339.65" font-size="7.39" fill="#7ad93a" stroke="#7ad93a" stroke-width="0.220" text-anchor="start" font-weight="normal" font-style="normal"  textLength="26.10" lengthAdjust="spacingAndGlyphs">$207,759</text>
<text x="197.20" y="361.35" font-size="5.99" fill="#fff" stroke="#fff" stroke-width="0.096" text-anchor="start" font-weight="bold" font-style="normal"  textLength="42.50" lengthAdjust="spacingAndGlyphs">Barefoot Mining</text>
<g transform="translate(243.30,355.20) scale(1.000)"><path d="M0.3,1.0 Q2.6,0.1 4.4,0.5 Q5.5,0.9 5.9,2.3 M3.9,0.5 Q3.3,3.6 2.1,6.5" stroke="#fff" stroke-width="1.0" fill="none" stroke-linecap="round" stroke-linejoin="round"/></g>
<text x="252.00" y="361.35" font-size="5.99" fill="#fff" stroke="#fff" stroke-width="0.096" text-anchor="start" font-weight="bold" font-style="normal"  textLength="19.40" lengthAdjust="spacingAndGlyphs">OCEAN</text>
<rect x="362.5" y="156.0" width="189.6" height="191.0" fill="#060b18"/>
<path d="M362.95,344.90h1.12v1.12h-1.12zM365.10,344.90h1.12v1.12h-1.12zM367.26,344.90h1.12v1.12h-1.12zM369.41,344.90h1.12v1.12h-1.12zM371.57,344.90h1.12v1.12h-1.12zM373.72,344.90h1.12v1.12h-1.12zM380.19,344.90h1.12v1.12h-1.12zM382.34,344.90h1.12v1.12h-1.12zM384.50,344.90h1.12v1.12h-1.12zM386.65,344.90h1.12v1.12h-1.12zM388.81,344.90h1.12v1.12h-1.12zM395.27,344.90h1.12v1.12h-1.12zM397.43,344.90h1.12v1.12h-1.12zM399.58,344.90h1.12v1.12h-1.12zM401.74,344.90h1.12v1.12h-1.12zM403.89,344.90h1.12v1.12h-1.12zM406.05,344.90h1.12v1.12h-1.12zM408.20,344.90h1.12v1.12h-1.12zM410.36,344.90h1.12v1.12h-1.12zM412.51,344.90h1.12v1.12h-1.12zM414.67,344.90h1.12v1.12h-1.12zM416.82,344.90h1.12v1.12h-1.12zM418.98,344.90h1.12v1.12h-1.12zM421.13,344.90h1.12v1.12h-1.12zM423.29,344.90h1.12v1.12h-1.12zM425.44,344.90h1.12v1.12h-1.12zM427.60,344.90h1.12v1.12h-1.12zM429.75,344.90h1.12v1.12h-1.12zM431.91,344.90h1.12v1.12h-1.12zM434.06,344.90h1.12v1.12h-1.12zM436.22,344.90h1.12v1.12h-1.12zM438.38,344.90h1.12v1.12h-1.12zM446.99,344.90h1.12v1.12h-1.12zM449.15,344.90h1.12v1.12h-1.12zM451.31,344.90h1.12v1.12h-1.12zM453.46,344.90h1.12v1.12h-1.12zM455.61,344.90h1.12v1.12h-1.12zM457.77,344.90h1.12v1.12h-1.12zM459.93,344.90h1.12v1.12h-1.12zM472.85,344.90h1.12v1.12h-1.12zM475.01,344.90h1.12v1.12h-1.12zM477.16,344.90h1.12v1.12h-1.12zM479.32,344.90h1.12v1.12h-1.12zM481.47,344.90h1.12v1.12h-1.12zM483.63,344.90h1.12v1.12h-1.12zM485.78,344.90h1.12v1.12h-1.12zM487.94,344.90h1.12v1.12h-1.12zM490.09,344.90h1.12v1.12h-1.12zM492.25,344.90h1.12v1.12h-1.12zM498.71,344.90h1.12v1.12h-1.12zM520.27,344.90h1.12v1.12h-1.12zM522.42,344.90h1.12v1.12h-1.12zM524.58,344.90h1.12v1.12h-1.12zM526.73,344.90h1.12v1.12h-1.12zM528.88,344.90h1.12v1.12h-1.12zM531.04,344.90h1.12v1.12h-1.12zM533.20,344.90h1.12v1.12h-1.12zM535.35,344.90h1.12v1.12h-1.12zM537.50,344.90h1.12v1.12h-1.12zM539.66,344.90h1.12v1.12h-1.12zM541.82,344.90h1.12v1.12h-1.12zM543.97,344.90h1.12v1.12h-1.12zM546.12,344.90h1.12v1.12h-1.12zM548.28,344.90h1.12v1.12h-1.12zM550.44,344.90h1.12v1.12h-1.12zM367.26,342.74h1.12v1.12h-1.12zM369.41,342.74h1.12v1.12h-1.12zM380.19,342.74h1.12v1.12h-1.12zM382.34,342.74h1.12v1.12h-1.12zM384.50,342.74h1.12v1.12h-1.12zM386.65,342.74h1.12v1.12h-1.12zM388.81,342.74h1.12v1.12h-1.12zM395.27,342.74h1.12v1.12h-1.12zM397.43,342.74h1.12v1.12h-1.12zM408.20,342.74h1.12v1.12h-1.12zM410.36,342.74h1.12v1.12h-1.12zM412.51,342.74h1.12v1.12h-1.12zM414.67,342.74h1.12v1.12h-1.12zM416.82,342.74h1.12v1.12h-1.12zM418.98,342.74h1.12v1.12h-1.12zM421.13,342.74h1.12v1.12h-1.12zM423.29,342.74h1.12v1.12h-1.12zM425.44,342.74h1.12v1.12h-1.12zM427.60,342.74h1.12v1.12h-1.12zM429.75,342.74h1.12v1.12h-1.12zM431.91,342.74h1.12v1.12h-1.12zM434.06,342.74h1.12v1.12h-1.12zM436.22,342.74h1.12v1.12h-1.12zM438.38,342.74h1.12v1.12h-1.12zM446.99,342.74h1.12v1.12h-1.12zM449.15,342.74h1.12v1.12h-1.12zM451.31,342.74h1.12v1.12h-1.12zM453.46,342.74h1.12v1.12h-1.12zM455.61,342.74h1.12v1.12h-1.12zM457.77,342.74h1.12v1.12h-1.12zM459.93,342.74h1.12v1.12h-1.12zM472.85,342.74h1.12v1.12h-1.12zM475.01,342.74h1.12v1.12h-1.12zM477.16,342.74h1.12v1.12h-1.12zM483.63,342.74h1.12v1.12h-1.12zM485.78,342.74h1.12v1.12h-1.12zM487.94,342.74h1.12v1.12h-1.12zM490.09,342.74h1.12v1.12h-1.12zM492.25,342.74h1.12v1.12h-1.12zM498.71,342.74h1.12v1.12h-1.12zM537.50,342.74h1.12v1.12h-1.12zM539.66,342.74h1.12v1.12h-1.12zM541.82,342.74h1.12v1.12h-1.12zM543.97,342.74h1.12v1.12h-1.12zM546.12,342.74h1.12v1.12h-1.12zM548.28,342.74h1.12v1.12h-1.12zM550.44,342.74h1.12v1.12h-1.12zM367.26,340.59h1.12v1.12h-1.12zM369.41,340.59h1.12v1.12h-1.12zM382.34,340.59h1.12v1.12h-1.12zM384.50,340.59h1.12v1.12h-1.12zM386.65,340.59h1.12v1.12h-1.12zM388.81,340.59h1.12v1.12h-1.12zM390.96,340.59h1.12v1.12h-1.12zM393.12,340.59h1.12v1.12h-1.12zM395.27,340.59h1.12v1.12h-1.12zM397.43,340.59h1.12v1.12h-1.12zM408.20,340.59h1.12v1.12h-1.12zM410.36,340.59h1.12v1.12h-1.12zM412.51,340.59h1.12v1.12h-1.12zM414.67,340.59h1.12v1.12h-1.12zM416.82,340.59h1.12v1.12h-1.12zM418.98,340.59h1.12v1.12h-1.12zM421.13,340.59h1.12v1.12h-1.12zM423.29,340.59h1.12v1.12h-1.12zM425.44,340.59h1.12v1.12h-1.12zM427.60,340.59h1.12v1.12h-1.12zM429.75,340.59h1.12v1.12h-1.12zM431.91,340.59h1.12v1.12h-1.12zM434.06,340.59h1.12v1.12h-1.12zM451.31,340.59h1.12v1.12h-1.12zM453.46,340.59h1.12v1.12h-1.12zM455.61,340.59h1.12v1.12h-1.12zM472.85,340.59h1.12v1.12h-1.12zM475.01,340.59h1.12v1.12h-1.12zM477.16,340.59h1.12v1.12h-1.12zM483.63,340.59h1.12v1.12h-1.12zM485.78,340.59h1.12v1.12h-1.12zM487.94,340.59h1.12v1.12h-1.12zM490.09,340.59h1.12v1.12h-1.12zM492.25,340.59h1.12v1.12h-1.12zM494.40,340.59h1.12v1.12h-1.12zM496.56,340.59h1.12v1.12h-1.12zM498.71,340.59h1.12v1.12h-1.12zM500.87,340.59h1.12v1.12h-1.12zM503.02,340.59h1.12v1.12h-1.12zM541.82,340.59h1.12v1.12h-1.12zM543.97,340.59h1.12v1.12h-1.12zM546.12,340.59h1.12v1.12h-1.12zM548.28,340.59h1.12v1.12h-1.12zM550.44,340.59h1.12v1.12h-1.12zM369.41,338.43h1.12v1.12h-1.12zM371.57,338.43h1.12v1.12h-1.12zM373.72,338.43h1.12v1.12h-1.12zM382.34,338.43h1.12v1.12h-1.12zM384.50,338.43h1.12v1.12h-1.12zM386.65,338.43h1.12v1.12h-1.12zM388.81,338.43h1.12v1.12h-1.12zM390.96,338.43h1.12v1.12h-1.12zM393.12,338.43h1.12v1.12h-1.12zM395.27,338.43h1.12v1.12h-1.12zM397.43,338.43h1.12v1.12h-1.12zM399.58,338.43h1.12v1.12h-1.12zM401.74,338.43h1.12v1.12h-1.12zM403.89,338.43h1.12v1.12h-1.12zM406.05,338.43h1.12v1.12h-1.12zM408.20,338.43h1.12v1.12h-1.12zM410.36,338.43h1.12v1.12h-1.12zM412.51,338.43h1.12v1.12h-1.12zM414.67,338.43h1.12v1.12h-1.12zM416.82,338.43h1.12v1.12h-1.12zM418.98,338.43h1.12v1.12h-1.12zM421.13,338.43h1.12v1.12h-1.12zM423.29,338.43h1.12v1.12h-1.12zM425.44,338.43h1.12v1.12h-1.12zM427.60,338.43h1.12v1.12h-1.12zM429.75,338.43h1.12v1.12h-1.12zM431.91,338.43h1.12v1.12h-1.12zM434.06,338.43h1.12v1.12h-1.12zM440.53,338.43h1.12v1.12h-1.12zM442.69,338.43h1.12v1.12h-1.12zM444.84,338.43h1.12v1.12h-1.12zM451.31,338.43h1.12v1.12h-1.12zM453.46,338.43h1.12v1.12h-1.12zM455.61,338.43h1.12v1.12h-1.12zM472.85,338.43h1.12v1.12h-1.12zM475.01,338.43h1.12v1.12h-1.12zM477.16,338.43h1.12v1.12h-1.12zM479.32,338.43h1.12v1.12h-1.12zM481.47,338.43h1.12v1.12h-1.12zM483.63,338.43h1.12v1.12h-1.12zM485.78,338.43h1.12v1.12h-1.12zM487.94,338.43h1.12v1.12h-1.12zM490.09,338.43h1.12v1.12h-1.12zM492.25,338.43h1.12v1.12h-1.12zM494.40,338.43h1.12v1.12h-1.12zM496.56,338.43h1.12v1.12h-1.12zM498.71,338.43h1.12v1.12h-1.12zM500.87,338.43h1.12v1.12h-1.12zM503.02,338.43h1.12v1.12h-1.12zM541.82,338.43h1.12v1.12h-1.12zM543.97,338.43h1.12v1.12h-1.12zM546.12,338.43h1.12v1.12h-1.12zM548.28,338.43h1.12v1.12h-1.12zM550.44,338.43h1.12v1.12h-1.12zM369.41,336.28h1.12v1.12h-1.12zM371.57,336.28h1.12v1.12h-1.12zM373.72,336.28h1.12v1.12h-1.12zM382.34,336.28h1.12v1.12h-1.12zM384.50,336.28h1.12v1.12h-1.12zM386.65,336.28h1.12v1.12h-1.12zM388.81,336.28h1.12v1.12h-1.12zM390.96,336.28h1.12v1.12h-1.12zM393.12,336.28h1.12v1.12h-1.12zM395.27,336.28h1.12v1.12h-1.12zM397.43,336.28h1.12v1.12h-1.12zM412.51,336.28h1.12v1.12h-1.12zM425.44,336.28h1.12v1.12h-1.12zM427.60,336.28h1.12v1.12h-1.12zM429.75,336.28h1.12v1.12h-1.12zM431.91,336.28h1.12v1.12h-1.12zM438.38,336.28h1.12v1.12h-1.12zM440.53,336.28h1.12v1.12h-1.12zM442.69,336.28h1.12v1.12h-1.12zM444.84,336.28h1.12v1.12h-1.12zM446.99,336.28h1.12v1.12h-1.12zM449.15,336.28h1.12v1.12h-1.12zM455.61,336.28h1.12v1.12h-1.12zM457.77,336.28h1.12v1.12h-1.12zM459.93,336.28h1.12v1.12h-1.12zM472.85,336.28h1.12v1.12h-1.12zM475.01,336.28h1.12v1.12h-1.12zM481.47,336.28h1.12v1.12h-1.12zM483.63,336.28h1.12v1.12h-1.12zM485.78,336.28h1.12v1.12h-1.12zM487.94,336.28h1.12v1.12h-1.12zM496.56,336.28h1.12v1.12h-1.12zM498.71,336.28h1.12v1.12h-1.12zM541.82,336.28h1.12v1.12h-1.12zM543.97,336.28h1.12v1.12h-1.12zM550.44,336.28h1.12v1.12h-1.12zM373.72,334.12h1.12v1.12h-1.12zM375.88,334.12h1.12v1.12h-1.12zM386.65,334.12h1.12v1.12h-1.12zM388.81,334.12h1.12v1.12h-1.12zM390.96,334.12h1.12v1.12h-1.12zM393.12,334.12h1.12v1.12h-1.12zM412.51,334.12h1.12v1.12h-1.12zM438.38,334.12h1.12v1.12h-1.12zM446.99,334.12h1.12v1.12h-1.12zM449.15,334.12h1.12v1.12h-1.12zM459.93,334.12h1.12v1.12h-1.12zM462.08,334.12h1.12v1.12h-1.12zM470.70,334.12h1.12v1.12h-1.12zM481.47,334.12h1.12v1.12h-1.12zM483.63,334.12h1.12v1.12h-1.12zM485.78,334.12h1.12v1.12h-1.12zM487.94,334.12h1.12v1.12h-1.12zM496.56,334.12h1.12v1.12h-1.12zM498.71,334.12h1.12v1.12h-1.12zM541.82,334.12h1.12v1.12h-1.12zM543.97,334.12h1.12v1.12h-1.12zM550.44,334.12h1.12v1.12h-1.12zM362.95,331.97h1.12v1.12h-1.12zM373.72,331.97h1.12v1.12h-1.12zM375.88,331.97h1.12v1.12h-1.12zM386.65,331.97h1.12v1.12h-1.12zM393.12,331.97h1.12v1.12h-1.12zM399.58,331.97h1.12v1.12h-1.12zM401.74,331.97h1.12v1.12h-1.12zM403.89,331.97h1.12v1.12h-1.12zM406.05,331.97h1.12v1.12h-1.12zM408.20,331.97h1.12v1.12h-1.12zM410.36,331.97h1.12v1.12h-1.12zM412.51,331.97h1.12v1.12h-1.12zM421.13,331.97h1.12v1.12h-1.12zM423.29,331.97h1.12v1.12h-1.12zM434.06,331.97h1.12v1.12h-1.12zM436.22,331.97h1.12v1.12h-1.12zM438.38,331.97h1.12v1.12h-1.12zM446.99,331.97h1.12v1.12h-1.12zM449.15,331.97h1.12v1.12h-1.12zM451.31,331.97h1.12v1.12h-1.12zM453.46,331.97h1.12v1.12h-1.12zM459.93,331.97h1.12v1.12h-1.12zM462.08,331.97h1.12v1.12h-1.12zM470.70,331.97h1.12v1.12h-1.12zM477.16,331.97h1.12v1.12h-1.12zM479.32,331.97h1.12v1.12h-1.12zM481.47,331.97h1.12v1.12h-1.12zM483.63,331.97h1.12v1.12h-1.12zM496.56,331.97h1.12v1.12h-1.12zM498.71,331.97h1.12v1.12h-1.12zM500.87,331.97h1.12v1.12h-1.12zM503.02,331.97h1.12v1.12h-1.12zM537.50,331.97h1.12v1.12h-1.12zM539.66,331.97h1.12v1.12h-1.12zM541.82,331.97h1.12v1.12h-1.12zM543.97,331.97h1.12v1.12h-1.12zM546.12,331.97h1.12v1.12h-1.12zM548.28,331.97h1.12v1.12h-1.12zM550.44,331.97h1.12v1.12h-1.12zM362.95,329.81h1.12v1.12h-1.12zM369.41,329.81h1.12v1.12h-1.12zM371.57,329.81h1.12v1.12h-1.12zM378.03,329.81h1.12v1.12h-1.12zM386.65,329.81h1.12v1.12h-1.12zM397.43,329.81h1.12v1.12h-1.12zM399.58,329.81h1.12v1.12h-1.12zM406.05,329.81h1.12v1.12h-1.12zM408.20,329.81h1.12v1.12h-1.12zM410.36,329.81h1.12v1.12h-1.12zM412.51,329.81h1.12v1.12h-1.12zM414.67,329.81h1.12v1.12h-1.12zM416.82,329.81h1.12v1.12h-1.12zM418.98,329.81h1.12v1.12h-1.12zM421.13,329.81h1.12v1.12h-1.12zM423.29,329.81h1.12v1.12h-1.12zM425.44,329.81h1.12v1.12h-1.12zM427.60,329.81h1.12v1.12h-1.12zM429.75,329.81h1.12v1.12h-1.12zM431.91,329.81h1.12v1.12h-1.12zM434.06,329.81h1.12v1.12h-1.12zM436.22,329.81h1.12v1.12h-1.12zM438.38,329.81h1.12v1.12h-1.12zM451.31,329.81h1.12v1.12h-1.12zM453.46,329.81h1.12v1.12h-1.12zM470.70,329.81h1.12v1.12h-1.12zM472.85,329.81h1.12v1.12h-1.12zM475.01,329.81h1.12v1.12h-1.12zM483.63,329.81h1.12v1.12h-1.12zM490.09,329.81h1.12v1.12h-1.12zM492.25,329.81h1.12v1.12h-1.12zM498.71,329.81h1.12v1.12h-1.12zM509.49,329.81h1.12v1.12h-1.12zM511.64,329.81h1.12v1.12h-1.12zM513.80,329.81h1.12v1.12h-1.12zM515.96,329.81h1.12v1.12h-1.12zM518.11,329.81h1.12v1.12h-1.12zM537.50,329.81h1.12v1.12h-1.12zM539.66,329.81h1.12v1.12h-1.12zM541.82,329.81h1.12v1.12h-1.12zM543.97,329.81h1.12v1.12h-1.12zM546.12,329.81h1.12v1.12h-1.12zM548.28,329.81h1.12v1.12h-1.12zM550.44,329.81h1.12v1.12h-1.12zM362.95,327.66h1.12v1.12h-1.12zM365.10,327.66h1.12v1.12h-1.12zM367.26,327.66h1.12v1.12h-1.12zM369.41,327.66h1.12v1.12h-1.12zM371.57,327.66h1.12v1.12h-1.12zM378.03,327.66h1.12v1.12h-1.12zM386.65,327.66h1.12v1.12h-1.12zM388.81,327.66h1.12v1.12h-1.12zM390.96,327.66h1.12v1.12h-1.12zM406.05,327.66h1.12v1.12h-1.12zM418.98,327.66h1.12v1.12h-1.12zM421.13,327.66h1.12v1.12h-1.12zM431.91,327.66h1.12v1.12h-1.12zM434.06,327.66h1.12v1.12h-1.12zM436.22,327.66h1.12v1.12h-1.12zM438.38,327.66h1.12v1.12h-1.12zM440.53,327.66h1.12v1.12h-1.12zM442.69,327.66h1.12v1.12h-1.12zM444.84,327.66h1.12v1.12h-1.12zM451.31,327.66h1.12v1.12h-1.12zM453.46,327.66h1.12v1.12h-1.12zM464.23,327.66h1.12v1.12h-1.12zM466.39,327.66h1.12v1.12h-1.12zM468.54,327.66h1.12v1.12h-1.12zM470.70,327.66h1.12v1.12h-1.12zM472.85,327.66h1.12v1.12h-1.12zM475.01,327.66h1.12v1.12h-1.12zM483.63,327.66h1.12v1.12h-1.12zM485.78,327.66h1.12v1.12h-1.12zM487.94,327.66h1.12v1.12h-1.12zM490.09,327.66h1.12v1.12h-1.12zM492.25,327.66h1.12v1.12h-1.12zM498.71,327.66h1.12v1.12h-1.12zM513.80,327.66h1.12v1.12h-1.12zM515.96,327.66h1.12v1.12h-1.12zM518.11,327.66h1.12v1.12h-1.12zM537.50,327.66h1.12v1.12h-1.12zM539.66,327.66h1.12v1.12h-1.12zM541.82,327.66h1.12v1.12h-1.12zM543.97,327.66h1.12v1.12h-1.12zM546.12,327.66h1.12v1.12h-1.12zM548.28,327.66h1.12v1.12h-1.12zM550.44,327.66h1.12v1.12h-1.12zM362.95,325.50h1.12v1.12h-1.12zM378.03,325.50h1.12v1.12h-1.12zM386.65,325.50h1.12v1.12h-1.12zM388.81,325.50h1.12v1.12h-1.12zM390.96,325.50h1.12v1.12h-1.12zM393.12,325.50h1.12v1.12h-1.12zM395.27,325.50h1.12v1.12h-1.12zM401.74,325.50h1.12v1.12h-1.12zM403.89,325.50h1.12v1.12h-1.12zM406.05,325.50h1.12v1.12h-1.12zM431.91,325.50h1.12v1.12h-1.12zM434.06,325.50h1.12v1.12h-1.12zM436.22,325.50h1.12v1.12h-1.12zM438.38,325.50h1.12v1.12h-1.12zM440.53,325.50h1.12v1.12h-1.12zM442.69,325.50h1.12v1.12h-1.12zM444.84,325.50h1.12v1.12h-1.12zM446.99,325.50h1.12v1.12h-1.12zM449.15,325.50h1.12v1.12h-1.12zM451.31,325.50h1.12v1.12h-1.12zM453.46,325.50h1.12v1.12h-1.12zM455.61,325.50h1.12v1.12h-1.12zM457.77,325.50h1.12v1.12h-1.12zM459.93,325.50h1.12v1.12h-1.12zM462.08,325.50h1.12v1.12h-1.12zM464.23,325.50h1.12v1.12h-1.12zM472.85,325.50h1.12v1.12h-1.12zM475.01,325.50h1.12v1.12h-1.12zM483.63,325.50h1.12v1.12h-1.12zM485.78,325.50h1.12v1.12h-1.12zM487.94,325.50h1.12v1.12h-1.12zM490.09,325.50h1.12v1.12h-1.12zM492.25,325.50h1.12v1.12h-1.12zM494.40,325.50h1.12v1.12h-1.12zM496.56,325.50h1.12v1.12h-1.12zM498.71,325.50h1.12v1.12h-1.12zM500.87,325.50h1.12v1.12h-1.12zM503.02,325.50h1.12v1.12h-1.12zM505.18,325.50h1.12v1.12h-1.12zM507.33,325.50h1.12v1.12h-1.12zM513.80,325.50h1.12v1.12h-1.12zM515.96,325.50h1.12v1.12h-1.12zM518.11,325.50h1.12v1.12h-1.12zM520.27,325.50h1.12v1.12h-1.12zM522.42,325.50h1.12v1.12h-1.12zM528.88,325.50h1.12v1.12h-1.12zM531.04,325.50h1.12v1.12h-1.12zM533.20,325.50h1.12v1.12h-1.12zM535.35,325.50h1.12v1.12h-1.12zM537.50,325.50h1.12v1.12h-1.12zM539.66,325.50h1.12v1.12h-1.12zM541.82,325.50h1.12v1.12h-1.12zM543.97,325.50h1.12v1.12h-1.12zM546.12,325.50h1.12v1.12h-1.12zM362.95,323.35h1.12v1.12h-1.12zM382.34,323.35h1.12v1.12h-1.12zM384.50,323.35h1.12v1.12h-1.12zM386.65,323.35h1.12v1.12h-1.12zM388.81,323.35h1.12v1.12h-1.12zM395.27,323.35h1.12v1.12h-1.12zM397.43,323.35h1.12v1.12h-1.12zM399.58,323.35h1.12v1.12h-1.12zM401.74,323.35h1.12v1.12h-1.12zM403.89,323.35h1.12v1.12h-1.12zM406.05,323.35h1.12v1.12h-1.12zM414.67,323.35h1.12v1.12h-1.12zM416.82,323.35h1.12v1.12h-1.12zM431.91,323.35h1.12v1.12h-1.12zM442.69,323.35h1.12v1.12h-1.12zM444.84,323.35h1.12v1.12h-1.12zM457.77,323.35h1.12v1.12h-1.12zM459.93,323.35h1.12v1.12h-1.12zM472.85,323.35h1.12v1.12h-1.12zM475.01,323.35h1.12v1.12h-1.12zM477.16,323.35h1.12v1.12h-1.12zM479.32,323.35h1.12v1.12h-1.12zM481.47,323.35h1.12v1.12h-1.12zM483.63,323.35h1.12v1.12h-1.12zM485.78,323.35h1.12v1.12h-1.12zM487.94,323.35h1.12v1.12h-1.12zM490.09,323.35h1.12v1.12h-1.12zM492.25,323.35h1.12v1.12h-1.12zM494.40,323.35h1.12v1.12h-1.12zM496.56,323.35h1.12v1.12h-1.12zM498.71,323.35h1.12v1.12h-1.12zM500.87,323.35h1.12v1.12h-1.12zM503.02,323.35h1.12v1.12h-1.12zM505.18,323.35h1.12v1.12h-1.12zM507.33,323.35h1.12v1.12h-1.12zM509.49,323.35h1.12v1.12h-1.12zM511.64,323.35h1.12v1.12h-1.12zM513.80,323.35h1.12v1.12h-1.12zM515.96,323.35h1.12v1.12h-1.12zM518.11,323.35h1.12v1.12h-1.12zM520.27,323.35h1.12v1.12h-1.12zM522.42,323.35h1.12v1.12h-1.12zM528.88,323.35h1.12v1.12h-1.12zM531.04,323.35h1.12v1.12h-1.12zM537.50,323.35h1.12v1.12h-1.12zM539.66,323.35h1.12v1.12h-1.12zM541.82,323.35h1.12v1.12h-1.12zM543.97,323.35h1.12v1.12h-1.12zM546.12,323.35h1.12v1.12h-1.12zM362.95,321.19h1.12v1.12h-1.12zM365.10,321.19h1.12v1.12h-1.12zM367.26,321.19h1.12v1.12h-1.12zM382.34,321.19h1.12v1.12h-1.12zM384.50,321.19h1.12v1.12h-1.12zM386.65,321.19h1.12v1.12h-1.12zM388.81,321.19h1.12v1.12h-1.12zM395.27,321.19h1.12v1.12h-1.12zM397.43,321.19h1.12v1.12h-1.12zM399.58,321.19h1.12v1.12h-1.12zM401.74,321.19h1.12v1.12h-1.12zM403.89,321.19h1.12v1.12h-1.12zM406.05,321.19h1.12v1.12h-1.12zM414.67,321.19h1.12v1.12h-1.12zM416.82,321.19h1.12v1.12h-1.12zM418.98,321.19h1.12v1.12h-1.12zM421.13,321.19h1.12v1.12h-1.12zM431.91,321.19h1.12v1.12h-1.12zM442.69,321.19h1.12v1.12h-1.12zM444.84,321.19h1.12v1.12h-1.12zM457.77,321.19h1.12v1.12h-1.12zM459.93,321.19h1.12v1.12h-1.12zM472.85,321.19h1.12v1.12h-1.12zM475.01,321.19h1.12v1.12h-1.12zM477.16,321.19h1.12v1.12h-1.12zM479.32,321.19h1.12v1.12h-1.12zM481.47,321.19h1.12v1.12h-1.12zM483.63,321.19h1.12v1.12h-1.12zM485.78,321.19h1.12v1.12h-1.12zM487.94,321.19h1.12v1.12h-1.12zM490.09,321.19h1.12v1.12h-1.12zM492.25,321.19h1.12v1.12h-1.12zM494.40,321.19h1.12v1.12h-1.12zM496.56,321.19h1.12v1.12h-1.12zM498.71,321.19h1.12v1.12h-1.12zM500.87,321.19h1.12v1.12h-1.12zM503.02,321.19h1.12v1.12h-1.12zM505.18,321.19h1.12v1.12h-1.12zM507.33,321.19h1.12v1.12h-1.12zM509.49,321.19h1.12v1.12h-1.12zM511.64,321.19h1.12v1.12h-1.12zM513.80,321.19h1.12v1.12h-1.12zM515.96,321.19h1.12v1.12h-1.12zM518.11,321.19h1.12v1.12h-1.12zM520.27,321.19h1.12v1.12h-1.12zM522.42,321.19h1.12v1.12h-1.12zM528.88,321.19h1.12v1.12h-1.12zM531.04,321.19h1.12v1.12h-1.12zM537.50,321.19h1.12v1.12h-1.12zM543.97,321.19h1.12v1.12h-1.12zM546.12,321.19h1.12v1.12h-1.12zM548.28,321.19h1.12v1.12h-1.12zM550.44,321.19h1.12v1.12h-1.12zM362.95,319.04h1.12v1.12h-1.12zM365.10,319.04h1.12v1.12h-1.12zM367.26,319.04h1.12v1.12h-1.12zM378.03,319.04h1.12v1.12h-1.12zM380.19,319.04h1.12v1.12h-1.12zM382.34,319.04h1.12v1.12h-1.12zM384.50,319.04h1.12v1.12h-1.12zM386.65,319.04h1.12v1.12h-1.12zM388.81,319.04h1.12v1.12h-1.12zM390.96,319.04h1.12v1.12h-1.12zM393.12,319.04h1.12v1.12h-1.12zM395.27,319.04h1.12v1.12h-1.12zM397.43,319.04h1.12v1.12h-1.12zM399.58,319.04h1.12v1.12h-1.12zM401.74,319.04h1.12v1.12h-1.12zM403.89,319.04h1.12v1.12h-1.12zM406.05,319.04h1.12v1.12h-1.12zM414.67,319.04h1.12v1.12h-1.12zM416.82,319.04h1.12v1.12h-1.12zM418.98,319.04h1.12v1.12h-1.12zM421.13,319.04h1.12v1.12h-1.12zM423.29,319.04h1.12v1.12h-1.12zM425.44,319.04h1.12v1.12h-1.12zM427.60,319.04h1.12v1.12h-1.12zM429.75,319.04h1.12v1.12h-1.12zM442.69,319.04h1.12v1.12h-1.12zM444.84,319.04h1.12v1.12h-1.12zM453.46,319.04h1.12v1.12h-1.12zM464.23,319.04h1.12v1.12h-1.12zM466.39,319.04h1.12v1.12h-1.12zM468.54,319.04h1.12v1.12h-1.12zM470.70,319.04h1.12v1.12h-1.12zM472.85,319.04h1.12v1.12h-1.12zM479.32,319.04h1.12v1.12h-1.12zM481.47,319.04h1.12v1.12h-1.12zM483.63,319.04h1.12v1.12h-1.12zM485.78,319.04h1.12v1.12h-1.12zM487.94,319.04h1.12v1.12h-1.12zM490.09,319.04h1.12v1.12h-1.12zM492.25,319.04h1.12v1.12h-1.12zM498.71,319.04h1.12v1.12h-1.12zM500.87,319.04h1.12v1.12h-1.12zM503.02,319.04h1.12v1.12h-1.12zM505.18,319.04h1.12v1.12h-1.12zM507.33,319.04h1.12v1.12h-1.12zM509.49,319.04h1.12v1.12h-1.12zM511.64,319.04h1.12v1.12h-1.12zM513.80,319.04h1.12v1.12h-1.12zM515.96,319.04h1.12v1.12h-1.12zM518.11,319.04h1.12v1.12h-1.12zM520.27,319.04h1.12v1.12h-1.12zM522.42,319.04h1.12v1.12h-1.12zM528.88,319.04h1.12v1.12h-1.12zM531.04,319.04h1.12v1.12h-1.12zM533.20,319.04h1.12v1.12h-1.12zM535.35,319.04h1.12v1.12h-1.12zM537.50,319.04h1.12v1.12h-1.12zM543.97,319.04h1.12v1.12h-1.12zM546.12,319.04h1.12v1.12h-1.12zM548.28,319.04h1.12v1.12h-1.12zM550.44,319.04h1.12v1.12h-1.12zM362.95,316.88h1.12v1.12h-1.12zM365.10,316.88h1.12v1.12h-1.12zM367.26,316.88h1.12v1.12h-1.12zM369.41,316.88h1.12v1.12h-1.12zM371.57,316.88h1.12v1.12h-1.12zM373.72,316.88h1.12v1.12h-1.12zM384.50,316.88h1.12v1.12h-1.12zM386.65,316.88h1.12v1.12h-1.12zM388.81,316.88h1.12v1.12h-1.12zM390.96,316.88h1.12v1.12h-1.12zM393.12,316.88h1.12v1.12h-1.12zM395.27,316.88h1.12v1.12h-1.12zM397.43,316.88h1.12v1.12h-1.12zM399.58,316.88h1.12v1.12h-1.12zM401.74,316.88h1.12v1.12h-1.12zM403.89,316.88h1.12v1.12h-1.12zM406.05,316.88h1.12v1.12h-1.12zM414.67,316.88h1.12v1.12h-1.12zM416.82,316.88h1.12v1.12h-1.12zM418.98,316.88h1.12v1.12h-1.12zM421.13,316.88h1.12v1.12h-1.12zM423.29,316.88h1.12v1.12h-1.12zM429.75,316.88h1.12v1.12h-1.12zM442.69,316.88h1.12v1.12h-1.12zM444.84,316.88h1.12v1.12h-1.12zM446.99,316.88h1.12v1.12h-1.12zM449.15,316.88h1.12v1.12h-1.12zM451.31,316.88h1.12v1.12h-1.12zM453.46,316.88h1.12v1.12h-1.12zM470.70,316.88h1.12v1.12h-1.12zM472.85,316.88h1.12v1.12h-1.12zM479.32,316.88h1.12v1.12h-1.12zM481.47,316.88h1.12v1.12h-1.12zM483.63,316.88h1.12v1.12h-1.12zM490.09,316.88h1.12v1.12h-1.12zM492.25,316.88h1.12v1.12h-1.12zM498.71,316.88h1.12v1.12h-1.12zM500.87,316.88h1.12v1.12h-1.12zM503.02,316.88h1.12v1.12h-1.12zM505.18,316.88h1.12v1.12h-1.12zM507.33,316.88h1.12v1.12h-1.12zM509.49,316.88h1.12v1.12h-1.12zM511.64,316.88h1.12v1.12h-1.12zM513.80,316.88h1.12v1.12h-1.12zM522.42,316.88h1.12v1.12h-1.12zM524.58,316.88h1.12v1.12h-1.12zM526.73,316.88h1.12v1.12h-1.12zM528.88,316.88h1.12v1.12h-1.12zM531.04,316.88h1.12v1.12h-1.12zM533.20,316.88h1.12v1.12h-1.12zM535.35,316.88h1.12v1.12h-1.12zM546.12,316.88h1.12v1.12h-1.12zM548.28,316.88h1.12v1.12h-1.12zM550.44,316.88h1.12v1.12h-1.12zM362.95,314.73h1.12v1.12h-1.12zM365.10,314.73h1.12v1.12h-1.12zM367.26,314.73h1.12v1.12h-1.12zM373.72,314.73h1.12v1.12h-1.12zM384.50,314.73h1.12v1.12h-1.12zM386.65,314.73h1.12v1.12h-1.12zM388.81,314.73h1.12v1.12h-1.12zM390.96,314.73h1.12v1.12h-1.12zM393.12,314.73h1.12v1.12h-1.12zM401.74,314.73h1.12v1.12h-1.12zM403.89,314.73h1.12v1.12h-1.12zM406.05,314.73h1.12v1.12h-1.12zM408.20,314.73h1.12v1.12h-1.12zM410.36,314.73h1.12v1.12h-1.12zM412.51,314.73h1.12v1.12h-1.12zM414.67,314.73h1.12v1.12h-1.12zM416.82,314.73h1.12v1.12h-1.12zM423.29,314.73h1.12v1.12h-1.12zM429.75,314.73h1.12v1.12h-1.12zM431.91,314.73h1.12v1.12h-1.12zM434.06,314.73h1.12v1.12h-1.12zM442.69,314.73h1.12v1.12h-1.12zM444.84,314.73h1.12v1.12h-1.12zM446.99,314.73h1.12v1.12h-1.12zM449.15,314.73h1.12v1.12h-1.12zM451.31,314.73h1.12v1.12h-1.12zM453.46,314.73h1.12v1.12h-1.12zM455.61,314.73h1.12v1.12h-1.12zM457.77,314.73h1.12v1.12h-1.12zM459.93,314.73h1.12v1.12h-1.12zM462.08,314.73h1.12v1.12h-1.12zM470.70,314.73h1.12v1.12h-1.12zM472.85,314.73h1.12v1.12h-1.12zM475.01,314.73h1.12v1.12h-1.12zM477.16,314.73h1.12v1.12h-1.12zM479.32,314.73h1.12v1.12h-1.12zM481.47,314.73h1.12v1.12h-1.12zM483.63,314.73h1.12v1.12h-1.12zM490.09,314.73h1.12v1.12h-1.12zM492.25,314.73h1.12v1.12h-1.12zM498.71,314.73h1.12v1.12h-1.12zM500.87,314.73h1.12v1.12h-1.12zM503.02,314.73h1.12v1.12h-1.12zM505.18,314.73h1.12v1.12h-1.12zM507.33,314.73h1.12v1.12h-1.12zM509.49,314.73h1.12v1.12h-1.12zM511.64,314.73h1.12v1.12h-1.12zM513.80,314.73h1.12v1.12h-1.12zM522.42,314.73h1.12v1.12h-1.12zM524.58,314.73h1.12v1.12h-1.12zM526.73,314.73h1.12v1.12h-1.12zM528.88,314.73h1.12v1.12h-1.12zM531.04,314.73h1.12v1.12h-1.12zM533.20,314.73h1.12v1.12h-1.12zM535.35,314.73h1.12v1.12h-1.12zM546.12,314.73h1.12v1.12h-1.12zM548.28,314.73h1.12v1.12h-1.12zM550.44,314.73h1.12v1.12h-1.12zM362.95,312.57h1.12v1.12h-1.12zM365.10,312.57h1.12v1.12h-1.12zM367.26,312.57h1.12v1.12h-1.12zM373.72,312.57h1.12v1.12h-1.12zM384.50,312.57h1.12v1.12h-1.12zM386.65,312.57h1.12v1.12h-1.12zM388.81,312.57h1.12v1.12h-1.12zM390.96,312.57h1.12v1.12h-1.12zM393.12,312.57h1.12v1.12h-1.12zM401.74,312.57h1.12v1.12h-1.12zM403.89,312.57h1.12v1.12h-1.12zM406.05,312.57h1.12v1.12h-1.12zM408.20,312.57h1.12v1.12h-1.12zM410.36,312.57h1.12v1.12h-1.12zM412.51,312.57h1.12v1.12h-1.12zM414.67,312.57h1.12v1.12h-1.12zM416.82,312.57h1.12v1.12h-1.12zM423.29,312.57h1.12v1.12h-1.12zM429.75,312.57h1.12v1.12h-1.12zM431.91,312.57h1.12v1.12h-1.12zM434.06,312.57h1.12v1.12h-1.12zM436.22,312.57h1.12v1.12h-1.12zM438.38,312.57h1.12v1.12h-1.12zM440.53,312.57h1.12v1.12h-1.12zM442.69,312.57h1.12v1.12h-1.12zM444.84,312.57h1.12v1.12h-1.12zM446.99,312.57h1.12v1.12h-1.12zM449.15,312.57h1.12v1.12h-1.12zM451.31,312.57h1.12v1.12h-1.12zM453.46,312.57h1.12v1.12h-1.12zM455.61,312.57h1.12v1.12h-1.12zM457.77,312.57h1.12v1.12h-1.12zM459.93,312.57h1.12v1.12h-1.12zM462.08,312.57h1.12v1.12h-1.12zM470.70,312.57h1.12v1.12h-1.12zM472.85,312.57h1.12v1.12h-1.12zM475.01,312.57h1.12v1.12h-1.12zM481.47,312.57h1.12v1.12h-1.12zM483.63,312.57h1.12v1.12h-1.12zM485.78,312.57h1.12v1.12h-1.12zM487.94,312.57h1.12v1.12h-1.12zM490.09,312.57h1.12v1.12h-1.12zM492.25,312.57h1.12v1.12h-1.12zM498.71,312.57h1.12v1.12h-1.12zM500.87,312.57h1.12v1.12h-1.12zM503.02,312.57h1.12v1.12h-1.12zM505.18,312.57h1.12v1.12h-1.12zM507.33,312.57h1.12v1.12h-1.12zM509.49,312.57h1.12v1.12h-1.12zM511.64,312.57h1.12v1.12h-1.12zM513.80,312.57h1.12v1.12h-1.12zM522.42,312.57h1.12v1.12h-1.12zM524.58,312.57h1.12v1.12h-1.12zM526.73,312.57h1.12v1.12h-1.12zM528.88,312.57h1.12v1.12h-1.12zM531.04,312.57h1.12v1.12h-1.12zM539.66,312.57h1.12v1.12h-1.12zM541.82,312.57h1.12v1.12h-1.12zM548.28,312.57h1.12v1.12h-1.12zM550.44,312.57h1.12v1.12h-1.12zM362.95,310.42h1.12v1.12h-1.12zM365.10,310.42h1.12v1.12h-1.12zM367.26,310.42h1.12v1.12h-1.12zM369.41,310.42h1.12v1.12h-1.12zM371.57,310.42h1.12v1.12h-1.12zM373.72,310.42h1.12v1.12h-1.12zM384.50,310.42h1.12v1.12h-1.12zM386.65,310.42h1.12v1.12h-1.12zM388.81,310.42h1.12v1.12h-1.12zM390.96,310.42h1.12v1.12h-1.12zM393.12,310.42h1.12v1.12h-1.12zM401.74,310.42h1.12v1.12h-1.12zM403.89,310.42h1.12v1.12h-1.12zM406.05,310.42h1.12v1.12h-1.12zM408.20,310.42h1.12v1.12h-1.12zM410.36,310.42h1.12v1.12h-1.12zM412.51,310.42h1.12v1.12h-1.12zM414.67,310.42h1.12v1.12h-1.12zM416.82,310.42h1.12v1.12h-1.12zM418.98,310.42h1.12v1.12h-1.12zM421.13,310.42h1.12v1.12h-1.12zM423.29,310.42h1.12v1.12h-1.12zM429.75,310.42h1.12v1.12h-1.12zM431.91,310.42h1.12v1.12h-1.12zM434.06,310.42h1.12v1.12h-1.12zM440.53,310.42h1.12v1.12h-1.12zM442.69,310.42h1.12v1.12h-1.12zM449.15,310.42h1.12v1.12h-1.12zM451.31,310.42h1.12v1.12h-1.12zM453.46,310.42h1.12v1.12h-1.12zM455.61,310.42h1.12v1.12h-1.12zM457.77,310.42h1.12v1.12h-1.12zM459.93,310.42h1.12v1.12h-1.12zM466.39,310.42h1.12v1.12h-1.12zM468.54,310.42h1.12v1.12h-1.12zM470.70,310.42h1.12v1.12h-1.12zM472.85,310.42h1.12v1.12h-1.12zM475.01,310.42h1.12v1.12h-1.12zM481.47,310.42h1.12v1.12h-1.12zM483.63,310.42h1.12v1.12h-1.12zM485.78,310.42h1.12v1.12h-1.12zM492.25,310.42h1.12v1.12h-1.12zM494.40,310.42h1.12v1.12h-1.12zM496.56,310.42h1.12v1.12h-1.12zM498.71,310.42h1.12v1.12h-1.12zM505.18,310.42h1.12v1.12h-1.12zM507.33,310.42h1.12v1.12h-1.12zM509.49,310.42h1.12v1.12h-1.12zM511.64,310.42h1.12v1.12h-1.12zM513.80,310.42h1.12v1.12h-1.12zM515.96,310.42h1.12v1.12h-1.12zM518.11,310.42h1.12v1.12h-1.12zM520.27,310.42h1.12v1.12h-1.12zM522.42,310.42h1.12v1.12h-1.12zM524.58,310.42h1.12v1.12h-1.12zM526.73,310.42h1.12v1.12h-1.12zM528.88,310.42h1.12v1.12h-1.12zM531.04,310.42h1.12v1.12h-1.12zM539.66,310.42h1.12v1.12h-1.12zM541.82,310.42h1.12v1.12h-1.12zM548.28,310.42h1.12v1.12h-1.12zM550.44,310.42h1.12v1.12h-1.12zM362.95,308.26h1.12v1.12h-1.12zM365.10,308.26h1.12v1.12h-1.12zM367.26,308.26h1.12v1.12h-1.12zM369.41,308.26h1.12v1.12h-1.12zM371.57,308.26h1.12v1.12h-1.12zM378.03,308.26h1.12v1.12h-1.12zM380.19,308.26h1.12v1.12h-1.12zM382.34,308.26h1.12v1.12h-1.12zM384.50,308.26h1.12v1.12h-1.12zM386.65,308.26h1.12v1.12h-1.12zM388.81,308.26h1.12v1.12h-1.12zM390.96,308.26h1.12v1.12h-1.12zM393.12,308.26h1.12v1.12h-1.12zM395.27,308.26h1.12v1.12h-1.12zM397.43,308.26h1.12v1.12h-1.12zM399.58,308.26h1.12v1.12h-1.12zM401.74,308.26h1.12v1.12h-1.12zM403.89,308.26h1.12v1.12h-1.12zM406.05,308.26h1.12v1.12h-1.12zM408.20,308.26h1.12v1.12h-1.12zM410.36,308.26h1.12v1.12h-1.12zM412.51,308.26h1.12v1.12h-1.12zM414.67,308.26h1.12v1.12h-1.12zM421.13,308.26h1.12v1.12h-1.12zM427.60,308.26h1.12v1.12h-1.12zM429.75,308.26h1.12v1.12h-1.12zM431.91,308.26h1.12v1.12h-1.12zM434.06,308.26h1.12v1.12h-1.12zM440.53,308.26h1.12v1.12h-1.12zM442.69,308.26h1.12v1.12h-1.12zM449.15,308.26h1.12v1.12h-1.12zM451.31,308.26h1.12v1.12h-1.12zM453.46,308.26h1.12v1.12h-1.12zM455.61,308.26h1.12v1.12h-1.12zM457.77,308.26h1.12v1.12h-1.12zM459.93,308.26h1.12v1.12h-1.12zM466.39,308.26h1.12v1.12h-1.12zM468.54,308.26h1.12v1.12h-1.12zM470.70,308.26h1.12v1.12h-1.12zM477.16,308.26h1.12v1.12h-1.12zM485.78,308.26h1.12v1.12h-1.12zM492.25,308.26h1.12v1.12h-1.12zM498.71,308.26h1.12v1.12h-1.12zM505.18,308.26h1.12v1.12h-1.12zM507.33,308.26h1.12v1.12h-1.12zM509.49,308.26h1.12v1.12h-1.12zM511.64,308.26h1.12v1.12h-1.12zM513.80,308.26h1.12v1.12h-1.12zM515.96,308.26h1.12v1.12h-1.12zM518.11,308.26h1.12v1.12h-1.12zM520.27,308.26h1.12v1.12h-1.12zM522.42,308.26h1.12v1.12h-1.12zM524.58,308.26h1.12v1.12h-1.12zM526.73,308.26h1.12v1.12h-1.12zM528.88,308.26h1.12v1.12h-1.12zM531.04,308.26h1.12v1.12h-1.12zM539.66,308.26h1.12v1.12h-1.12zM546.12,308.26h1.12v1.12h-1.12zM548.28,308.26h1.12v1.12h-1.12zM550.44,308.26h1.12v1.12h-1.12zM362.95,306.11h1.12v1.12h-1.12zM365.10,306.11h1.12v1.12h-1.12zM367.26,306.11h1.12v1.12h-1.12zM369.41,306.11h1.12v1.12h-1.12zM371.57,306.11h1.12v1.12h-1.12zM378.03,306.11h1.12v1.12h-1.12zM384.50,306.11h1.12v1.12h-1.12zM386.65,306.11h1.12v1.12h-1.12zM393.12,306.11h1.12v1.12h-1.12zM395.27,306.11h1.12v1.12h-1.12zM397.43,306.11h1.12v1.12h-1.12zM399.58,306.11h1.12v1.12h-1.12zM401.74,306.11h1.12v1.12h-1.12zM403.89,306.11h1.12v1.12h-1.12zM406.05,306.11h1.12v1.12h-1.12zM408.20,306.11h1.12v1.12h-1.12zM414.67,306.11h1.12v1.12h-1.12zM421.13,306.11h1.12v1.12h-1.12zM427.60,306.11h1.12v1.12h-1.12zM429.75,306.11h1.12v1.12h-1.12zM431.91,306.11h1.12v1.12h-1.12zM434.06,306.11h1.12v1.12h-1.12zM436.22,306.11h1.12v1.12h-1.12zM438.38,306.11h1.12v1.12h-1.12zM440.53,306.11h1.12v1.12h-1.12zM442.69,306.11h1.12v1.12h-1.12zM466.39,306.11h1.12v1.12h-1.12zM468.54,306.11h1.12v1.12h-1.12zM470.70,306.11h1.12v1.12h-1.12zM477.16,306.11h1.12v1.12h-1.12zM485.78,306.11h1.12v1.12h-1.12zM487.94,306.11h1.12v1.12h-1.12zM490.09,306.11h1.12v1.12h-1.12zM492.25,306.11h1.12v1.12h-1.12zM498.71,306.11h1.12v1.12h-1.12zM500.87,306.11h1.12v1.12h-1.12zM503.02,306.11h1.12v1.12h-1.12zM505.18,306.11h1.12v1.12h-1.12zM507.33,306.11h1.12v1.12h-1.12zM518.11,306.11h1.12v1.12h-1.12zM520.27,306.11h1.12v1.12h-1.12zM522.42,306.11h1.12v1.12h-1.12zM524.58,306.11h1.12v1.12h-1.12zM531.04,306.11h1.12v1.12h-1.12zM537.50,306.11h1.12v1.12h-1.12zM539.66,306.11h1.12v1.12h-1.12zM546.12,306.11h1.12v1.12h-1.12zM548.28,306.11h1.12v1.12h-1.12zM550.44,306.11h1.12v1.12h-1.12zM362.95,303.95h1.12v1.12h-1.12zM365.10,303.95h1.12v1.12h-1.12zM367.26,303.95h1.12v1.12h-1.12zM369.41,303.95h1.12v1.12h-1.12zM371.57,303.95h1.12v1.12h-1.12zM373.72,303.95h1.12v1.12h-1.12zM375.88,303.95h1.12v1.12h-1.12zM378.03,303.95h1.12v1.12h-1.12zM384.50,303.95h1.12v1.12h-1.12zM386.65,303.95h1.12v1.12h-1.12zM393.12,303.95h1.12v1.12h-1.12zM399.58,303.95h1.12v1.12h-1.12zM401.74,303.95h1.12v1.12h-1.12zM403.89,303.95h1.12v1.12h-1.12zM406.05,303.95h1.12v1.12h-1.12zM408.20,303.95h1.12v1.12h-1.12zM414.67,303.95h1.12v1.12h-1.12zM416.82,303.95h1.12v1.12h-1.12zM418.98,303.95h1.12v1.12h-1.12zM421.13,303.95h1.12v1.12h-1.12zM423.29,303.95h1.12v1.12h-1.12zM425.44,303.95h1.12v1.12h-1.12zM431.91,303.95h1.12v1.12h-1.12zM434.06,303.95h1.12v1.12h-1.12zM436.22,303.95h1.12v1.12h-1.12zM438.38,303.95h1.12v1.12h-1.12zM440.53,303.95h1.12v1.12h-1.12zM442.69,303.95h1.12v1.12h-1.12zM466.39,303.95h1.12v1.12h-1.12zM468.54,303.95h1.12v1.12h-1.12zM470.70,303.95h1.12v1.12h-1.12zM472.85,303.95h1.12v1.12h-1.12zM475.01,303.95h1.12v1.12h-1.12zM477.16,303.95h1.12v1.12h-1.12zM485.78,303.95h1.12v1.12h-1.12zM487.94,303.95h1.12v1.12h-1.12zM490.09,303.95h1.12v1.12h-1.12zM492.25,303.95h1.12v1.12h-1.12zM494.40,303.95h1.12v1.12h-1.12zM496.56,303.95h1.12v1.12h-1.12zM503.02,303.95h1.12v1.12h-1.12zM505.18,303.95h1.12v1.12h-1.12zM507.33,303.95h1.12v1.12h-1.12zM522.42,303.95h1.12v1.12h-1.12zM524.58,303.95h1.12v1.12h-1.12zM531.04,303.95h1.12v1.12h-1.12zM537.50,303.95h1.12v1.12h-1.12zM539.66,303.95h1.12v1.12h-1.12zM541.82,303.95h1.12v1.12h-1.12zM543.97,303.95h1.12v1.12h-1.12zM546.12,303.95h1.12v1.12h-1.12zM362.95,301.80h1.12v1.12h-1.12zM365.10,301.80h1.12v1.12h-1.12zM367.26,301.80h1.12v1.12h-1.12zM373.72,301.80h1.12v1.12h-1.12zM375.88,301.80h1.12v1.12h-1.12zM378.03,301.80h1.12v1.12h-1.12zM380.19,301.80h1.12v1.12h-1.12zM382.34,301.80h1.12v1.12h-1.12zM388.81,301.80h1.12v1.12h-1.12zM390.96,301.80h1.12v1.12h-1.12zM393.12,301.80h1.12v1.12h-1.12zM399.58,301.80h1.12v1.12h-1.12zM401.74,301.80h1.12v1.12h-1.12zM403.89,301.80h1.12v1.12h-1.12zM406.05,301.80h1.12v1.12h-1.12zM408.20,301.80h1.12v1.12h-1.12zM410.36,301.80h1.12v1.12h-1.12zM412.51,301.80h1.12v1.12h-1.12zM414.67,301.80h1.12v1.12h-1.12zM416.82,301.80h1.12v1.12h-1.12zM418.98,301.80h1.12v1.12h-1.12zM431.91,301.80h1.12v1.12h-1.12zM434.06,301.80h1.12v1.12h-1.12zM436.22,301.80h1.12v1.12h-1.12zM438.38,301.80h1.12v1.12h-1.12zM444.84,301.80h1.12v1.12h-1.12zM446.99,301.80h1.12v1.12h-1.12zM466.39,301.80h1.12v1.12h-1.12zM468.54,301.80h1.12v1.12h-1.12zM475.01,301.80h1.12v1.12h-1.12zM477.16,301.80h1.12v1.12h-1.12zM479.32,301.80h1.12v1.12h-1.12zM485.78,301.80h1.12v1.12h-1.12zM492.25,301.80h1.12v1.12h-1.12zM503.02,301.80h1.12v1.12h-1.12zM505.18,301.80h1.12v1.12h-1.12zM507.33,301.80h1.12v1.12h-1.12zM522.42,301.80h1.12v1.12h-1.12zM524.58,301.80h1.12v1.12h-1.12zM526.73,301.80h1.12v1.12h-1.12zM528.88,301.80h1.12v1.12h-1.12zM531.04,301.80h1.12v1.12h-1.12zM537.50,301.80h1.12v1.12h-1.12zM539.66,301.80h1.12v1.12h-1.12zM546.12,301.80h1.12v1.12h-1.12zM362.95,299.64h1.12v1.12h-1.12zM365.10,299.64h1.12v1.12h-1.12zM367.26,299.64h1.12v1.12h-1.12zM373.72,299.64h1.12v1.12h-1.12zM375.88,299.64h1.12v1.12h-1.12zM378.03,299.64h1.12v1.12h-1.12zM380.19,299.64h1.12v1.12h-1.12zM382.34,299.64h1.12v1.12h-1.12zM388.81,299.64h1.12v1.12h-1.12zM390.96,299.64h1.12v1.12h-1.12zM393.12,299.64h1.12v1.12h-1.12zM395.27,299.64h1.12v1.12h-1.12zM403.89,299.64h1.12v1.12h-1.12zM406.05,299.64h1.12v1.12h-1.12zM408.20,299.64h1.12v1.12h-1.12zM410.36,299.64h1.12v1.12h-1.12zM412.51,299.64h1.12v1.12h-1.12zM414.67,299.64h1.12v1.12h-1.12zM416.82,299.64h1.12v1.12h-1.12zM418.98,299.64h1.12v1.12h-1.12zM427.60,299.64h1.12v1.12h-1.12zM436.22,299.64h1.12v1.12h-1.12zM438.38,299.64h1.12v1.12h-1.12zM444.84,299.64h1.12v1.12h-1.12zM446.99,299.64h1.12v1.12h-1.12zM475.01,299.64h1.12v1.12h-1.12zM477.16,299.64h1.12v1.12h-1.12zM479.32,299.64h1.12v1.12h-1.12zM485.78,299.64h1.12v1.12h-1.12zM492.25,299.64h1.12v1.12h-1.12zM498.71,299.64h1.12v1.12h-1.12zM500.87,299.64h1.12v1.12h-1.12zM503.02,299.64h1.12v1.12h-1.12zM505.18,299.64h1.12v1.12h-1.12zM507.33,299.64h1.12v1.12h-1.12zM518.11,299.64h1.12v1.12h-1.12zM520.27,299.64h1.12v1.12h-1.12zM522.42,299.64h1.12v1.12h-1.12zM524.58,299.64h1.12v1.12h-1.12zM526.73,299.64h1.12v1.12h-1.12zM528.88,299.64h1.12v1.12h-1.12zM531.04,299.64h1.12v1.12h-1.12zM537.50,299.64h1.12v1.12h-1.12zM539.66,299.64h1.12v1.12h-1.12zM546.12,299.64h1.12v1.12h-1.12zM548.28,299.64h1.12v1.12h-1.12zM550.44,299.64h1.12v1.12h-1.12zM362.95,297.49h1.12v1.12h-1.12zM365.10,297.49h1.12v1.12h-1.12zM367.26,297.49h1.12v1.12h-1.12zM369.41,297.49h1.12v1.12h-1.12zM371.57,297.49h1.12v1.12h-1.12zM373.72,297.49h1.12v1.12h-1.12zM375.88,297.49h1.12v1.12h-1.12zM378.03,297.49h1.12v1.12h-1.12zM380.19,297.49h1.12v1.12h-1.12zM382.34,297.49h1.12v1.12h-1.12zM384.50,297.49h1.12v1.12h-1.12zM386.65,297.49h1.12v1.12h-1.12zM388.81,297.49h1.12v1.12h-1.12zM390.96,297.49h1.12v1.12h-1.12zM393.12,297.49h1.12v1.12h-1.12zM395.27,297.49h1.12v1.12h-1.12zM403.89,297.49h1.12v1.12h-1.12zM406.05,297.49h1.12v1.12h-1.12zM408.20,297.49h1.12v1.12h-1.12zM410.36,297.49h1.12v1.12h-1.12zM412.51,297.49h1.12v1.12h-1.12zM414.67,297.49h1.12v1.12h-1.12zM416.82,297.49h1.12v1.12h-1.12zM418.98,297.49h1.12v1.12h-1.12zM427.60,297.49h1.12v1.12h-1.12zM436.22,297.49h1.12v1.12h-1.12zM438.38,297.49h1.12v1.12h-1.12zM440.53,297.49h1.12v1.12h-1.12zM442.69,297.49h1.12v1.12h-1.12zM444.84,297.49h1.12v1.12h-1.12zM446.99,297.49h1.12v1.12h-1.12zM470.70,297.49h1.12v1.12h-1.12zM472.85,297.49h1.12v1.12h-1.12zM475.01,297.49h1.12v1.12h-1.12zM477.16,297.49h1.12v1.12h-1.12zM479.32,297.49h1.12v1.12h-1.12zM481.47,297.49h1.12v1.12h-1.12zM483.63,297.49h1.12v1.12h-1.12zM485.78,297.49h1.12v1.12h-1.12zM487.94,297.49h1.12v1.12h-1.12zM490.09,297.49h1.12v1.12h-1.12zM492.25,297.49h1.12v1.12h-1.12zM494.40,297.49h1.12v1.12h-1.12zM496.56,297.49h1.12v1.12h-1.12zM498.71,297.49h1.12v1.12h-1.12zM507.33,297.49h1.12v1.12h-1.12zM509.49,297.49h1.12v1.12h-1.12zM511.64,297.49h1.12v1.12h-1.12zM513.80,297.49h1.12v1.12h-1.12zM515.96,297.49h1.12v1.12h-1.12zM518.11,297.49h1.12v1.12h-1.12zM520.27,297.49h1.12v1.12h-1.12zM522.42,297.49h1.12v1.12h-1.12zM524.58,297.49h1.12v1.12h-1.12zM526.73,297.49h1.12v1.12h-1.12zM528.88,297.49h1.12v1.12h-1.12zM535.35,297.49h1.12v1.12h-1.12zM537.50,297.49h1.12v1.12h-1.12zM539.66,297.49h1.12v1.12h-1.12zM541.82,297.49h1.12v1.12h-1.12zM543.97,297.49h1.12v1.12h-1.12zM546.12,297.49h1.12v1.12h-1.12zM548.28,297.49h1.12v1.12h-1.12zM550.44,297.49h1.12v1.12h-1.12zM362.95,295.33h1.12v1.12h-1.12zM365.10,295.33h1.12v1.12h-1.12zM367.26,295.33h1.12v1.12h-1.12zM369.41,295.33h1.12v1.12h-1.12zM371.57,295.33h1.12v1.12h-1.12zM373.72,295.33h1.12v1.12h-1.12zM375.88,295.33h1.12v1.12h-1.12zM378.03,295.33h1.12v1.12h-1.12zM380.19,295.33h1.12v1.12h-1.12zM382.34,295.33h1.12v1.12h-1.12zM384.50,295.33h1.12v1.12h-1.12zM386.65,295.33h1.12v1.12h-1.12zM393.12,295.33h1.12v1.12h-1.12zM395.27,295.33h1.12v1.12h-1.12zM403.89,295.33h1.12v1.12h-1.12zM406.05,295.33h1.12v1.12h-1.12zM408.20,295.33h1.12v1.12h-1.12zM410.36,295.33h1.12v1.12h-1.12zM412.51,295.33h1.12v1.12h-1.12zM418.98,295.33h1.12v1.12h-1.12zM421.13,295.33h1.12v1.12h-1.12zM423.29,295.33h1.12v1.12h-1.12zM425.44,295.33h1.12v1.12h-1.12zM427.60,295.33h1.12v1.12h-1.12zM436.22,295.33h1.12v1.12h-1.12zM438.38,295.33h1.12v1.12h-1.12zM440.53,295.33h1.12v1.12h-1.12zM442.69,295.33h1.12v1.12h-1.12zM444.84,295.33h1.12v1.12h-1.12zM446.99,295.33h1.12v1.12h-1.12zM466.39,295.33h1.12v1.12h-1.12zM468.54,295.33h1.12v1.12h-1.12zM470.70,295.33h1.12v1.12h-1.12zM472.85,295.33h1.12v1.12h-1.12zM475.01,295.33h1.12v1.12h-1.12zM477.16,295.33h1.12v1.12h-1.12zM479.32,295.33h1.12v1.12h-1.12zM481.47,295.33h1.12v1.12h-1.12zM483.63,295.33h1.12v1.12h-1.12zM485.78,295.33h1.12v1.12h-1.12zM492.25,295.33h1.12v1.12h-1.12zM494.40,295.33h1.12v1.12h-1.12zM507.33,295.33h1.12v1.12h-1.12zM509.49,295.33h1.12v1.12h-1.12zM511.64,295.33h1.12v1.12h-1.12zM513.80,295.33h1.12v1.12h-1.12zM515.96,295.33h1.12v1.12h-1.12zM518.11,295.33h1.12v1.12h-1.12zM524.58,295.33h1.12v1.12h-1.12zM526.73,295.33h1.12v1.12h-1.12zM528.88,295.33h1.12v1.12h-1.12zM535.35,295.33h1.12v1.12h-1.12zM537.50,295.33h1.12v1.12h-1.12zM539.66,295.33h1.12v1.12h-1.12zM541.82,295.33h1.12v1.12h-1.12zM543.97,295.33h1.12v1.12h-1.12zM546.12,295.33h1.12v1.12h-1.12zM362.95,293.18h1.12v1.12h-1.12zM365.10,293.18h1.12v1.12h-1.12zM371.57,293.18h1.12v1.12h-1.12zM373.72,293.18h1.12v1.12h-1.12zM375.88,293.18h1.12v1.12h-1.12zM382.34,293.18h1.12v1.12h-1.12zM384.50,293.18h1.12v1.12h-1.12zM386.65,293.18h1.12v1.12h-1.12zM393.12,293.18h1.12v1.12h-1.12zM395.27,293.18h1.12v1.12h-1.12zM397.43,293.18h1.12v1.12h-1.12zM399.58,293.18h1.12v1.12h-1.12zM401.74,293.18h1.12v1.12h-1.12zM403.89,293.18h1.12v1.12h-1.12zM406.05,293.18h1.12v1.12h-1.12zM408.20,293.18h1.12v1.12h-1.12zM410.36,293.18h1.12v1.12h-1.12zM412.51,293.18h1.12v1.12h-1.12zM418.98,293.18h1.12v1.12h-1.12zM425.44,293.18h1.12v1.12h-1.12zM427.60,293.18h1.12v1.12h-1.12zM440.53,293.18h1.12v1.12h-1.12zM442.69,293.18h1.12v1.12h-1.12zM444.84,293.18h1.12v1.12h-1.12zM446.99,293.18h1.12v1.12h-1.12zM466.39,293.18h1.12v1.12h-1.12zM468.54,293.18h1.12v1.12h-1.12zM470.70,293.18h1.12v1.12h-1.12zM472.85,293.18h1.12v1.12h-1.12zM475.01,293.18h1.12v1.12h-1.12zM477.16,293.18h1.12v1.12h-1.12zM479.32,293.18h1.12v1.12h-1.12zM481.47,293.18h1.12v1.12h-1.12zM483.63,293.18h1.12v1.12h-1.12zM485.78,293.18h1.12v1.12h-1.12zM492.25,293.18h1.12v1.12h-1.12zM494.40,293.18h1.12v1.12h-1.12zM507.33,293.18h1.12v1.12h-1.12zM509.49,293.18h1.12v1.12h-1.12zM511.64,293.18h1.12v1.12h-1.12zM513.80,293.18h1.12v1.12h-1.12zM515.96,293.18h1.12v1.12h-1.12zM518.11,293.18h1.12v1.12h-1.12zM524.58,293.18h1.12v1.12h-1.12zM526.73,293.18h1.12v1.12h-1.12zM528.88,293.18h1.12v1.12h-1.12zM531.04,293.18h1.12v1.12h-1.12zM533.20,293.18h1.12v1.12h-1.12zM535.35,293.18h1.12v1.12h-1.12zM537.50,293.18h1.12v1.12h-1.12zM539.66,293.18h1.12v1.12h-1.12zM541.82,293.18h1.12v1.12h-1.12zM543.97,293.18h1.12v1.12h-1.12zM546.12,293.18h1.12v1.12h-1.12zM362.95,291.02h1.12v1.12h-1.12zM365.10,291.02h1.12v1.12h-1.12zM371.57,291.02h1.12v1.12h-1.12zM373.72,291.02h1.12v1.12h-1.12zM375.88,291.02h1.12v1.12h-1.12zM382.34,291.02h1.12v1.12h-1.12zM384.50,291.02h1.12v1.12h-1.12zM386.65,291.02h1.12v1.12h-1.12zM388.81,291.02h1.12v1.12h-1.12zM390.96,291.02h1.12v1.12h-1.12zM393.12,291.02h1.12v1.12h-1.12zM399.58,291.02h1.12v1.12h-1.12zM401.74,291.02h1.12v1.12h-1.12zM403.89,291.02h1.12v1.12h-1.12zM406.05,291.02h1.12v1.12h-1.12zM408.20,291.02h1.12v1.12h-1.12zM440.53,291.02h1.12v1.12h-1.12zM442.69,291.02h1.12v1.12h-1.12zM444.84,291.02h1.12v1.12h-1.12zM446.99,291.02h1.12v1.12h-1.12zM466.39,291.02h1.12v1.12h-1.12zM468.54,291.02h1.12v1.12h-1.12zM470.70,291.02h1.12v1.12h-1.12zM472.85,291.02h1.12v1.12h-1.12zM479.32,291.02h1.12v1.12h-1.12zM481.47,291.02h1.12v1.12h-1.12zM483.63,291.02h1.12v1.12h-1.12zM485.78,291.02h1.12v1.12h-1.12zM487.94,291.02h1.12v1.12h-1.12zM490.09,291.02h1.12v1.12h-1.12zM492.25,291.02h1.12v1.12h-1.12zM494.40,291.02h1.12v1.12h-1.12zM496.56,291.02h1.12v1.12h-1.12zM498.71,291.02h1.12v1.12h-1.12zM500.87,291.02h1.12v1.12h-1.12zM503.02,291.02h1.12v1.12h-1.12zM505.18,291.02h1.12v1.12h-1.12zM507.33,291.02h1.12v1.12h-1.12zM535.35,291.02h1.12v1.12h-1.12zM537.50,291.02h1.12v1.12h-1.12zM539.66,291.02h1.12v1.12h-1.12zM375.88,288.87h1.12v1.12h-1.12zM378.03,288.87h1.12v1.12h-1.12zM380.19,288.87h1.12v1.12h-1.12zM382.34,288.87h1.12v1.12h-1.12zM384.50,288.87h1.12v1.12h-1.12zM386.65,288.87h1.12v1.12h-1.12zM388.81,288.87h1.12v1.12h-1.12zM390.96,288.87h1.12v1.12h-1.12zM393.12,288.87h1.12v1.12h-1.12zM399.58,288.87h1.12v1.12h-1.12zM401.74,288.87h1.12v1.12h-1.12zM403.89,288.87h1.12v1.12h-1.12zM406.05,288.87h1.12v1.12h-1.12zM408.20,288.87h1.12v1.12h-1.12zM421.13,288.87h1.12v1.12h-1.12zM423.29,288.87h1.12v1.12h-1.12zM429.75,288.87h1.12v1.12h-1.12zM431.91,288.87h1.12v1.12h-1.12zM440.53,288.87h1.12v1.12h-1.12zM442.69,288.87h1.12v1.12h-1.12zM444.84,288.87h1.12v1.12h-1.12zM446.99,288.87h1.12v1.12h-1.12zM449.15,288.87h1.12v1.12h-1.12zM451.31,288.87h1.12v1.12h-1.12zM453.46,288.87h1.12v1.12h-1.12zM455.61,288.87h1.12v1.12h-1.12zM457.77,288.87h1.12v1.12h-1.12zM459.93,288.87h1.12v1.12h-1.12zM462.08,288.87h1.12v1.12h-1.12zM464.23,288.87h1.12v1.12h-1.12zM466.39,288.87h1.12v1.12h-1.12zM472.85,288.87h1.12v1.12h-1.12zM479.32,288.87h1.12v1.12h-1.12zM481.47,288.87h1.12v1.12h-1.12zM483.63,288.87h1.12v1.12h-1.12zM485.78,288.87h1.12v1.12h-1.12zM487.94,288.87h1.12v1.12h-1.12zM500.87,288.87h1.12v1.12h-1.12zM503.02,288.87h1.12v1.12h-1.12zM505.18,288.87h1.12v1.12h-1.12zM507.33,288.87h1.12v1.12h-1.12zM535.35,288.87h1.12v1.12h-1.12zM537.50,288.87h1.12v1.12h-1.12zM539.66,288.87h1.12v1.12h-1.12zM397.43,286.71h1.12v1.12h-1.12zM399.58,286.71h1.12v1.12h-1.12zM401.74,286.71h1.12v1.12h-1.12zM403.89,286.71h1.12v1.12h-1.12zM406.05,286.71h1.12v1.12h-1.12zM408.20,286.71h1.12v1.12h-1.12zM421.13,286.71h1.12v1.12h-1.12zM423.29,286.71h1.12v1.12h-1.12zM425.44,286.71h1.12v1.12h-1.12zM427.60,286.71h1.12v1.12h-1.12zM429.75,286.71h1.12v1.12h-1.12zM431.91,286.71h1.12v1.12h-1.12zM434.06,286.71h1.12v1.12h-1.12zM436.22,286.71h1.12v1.12h-1.12zM438.38,286.71h1.12v1.12h-1.12zM444.84,286.71h1.12v1.12h-1.12zM446.99,286.71h1.12v1.12h-1.12zM449.15,286.71h1.12v1.12h-1.12zM451.31,286.71h1.12v1.12h-1.12zM453.46,286.71h1.12v1.12h-1.12zM455.61,286.71h1.12v1.12h-1.12zM457.77,286.71h1.12v1.12h-1.12zM459.93,286.71h1.12v1.12h-1.12zM462.08,286.71h1.12v1.12h-1.12zM464.23,286.71h1.12v1.12h-1.12zM466.39,286.71h1.12v1.12h-1.12zM472.85,286.71h1.12v1.12h-1.12zM479.32,286.71h1.12v1.12h-1.12zM481.47,286.71h1.12v1.12h-1.12zM483.63,286.71h1.12v1.12h-1.12zM485.78,286.71h1.12v1.12h-1.12zM487.94,286.71h1.12v1.12h-1.12zM500.87,286.71h1.12v1.12h-1.12zM503.02,286.71h1.12v1.12h-1.12zM505.18,286.71h1.12v1.12h-1.12zM507.33,286.71h1.12v1.12h-1.12zM535.35,286.71h1.12v1.12h-1.12zM537.50,286.71h1.12v1.12h-1.12zM539.66,286.71h1.12v1.12h-1.12zM548.28,286.71h1.12v1.12h-1.12zM550.44,286.71h1.12v1.12h-1.12zM397.43,284.56h1.12v1.12h-1.12zM399.58,284.56h1.12v1.12h-1.12zM401.74,284.56h1.12v1.12h-1.12zM403.89,284.56h1.12v1.12h-1.12zM406.05,284.56h1.12v1.12h-1.12zM408.20,284.56h1.12v1.12h-1.12zM421.13,284.56h1.12v1.12h-1.12zM423.29,284.56h1.12v1.12h-1.12zM425.44,284.56h1.12v1.12h-1.12zM427.60,284.56h1.12v1.12h-1.12zM429.75,284.56h1.12v1.12h-1.12zM431.91,284.56h1.12v1.12h-1.12zM434.06,284.56h1.12v1.12h-1.12zM436.22,284.56h1.12v1.12h-1.12zM438.38,284.56h1.12v1.12h-1.12zM444.84,284.56h1.12v1.12h-1.12zM446.99,284.56h1.12v1.12h-1.12zM449.15,284.56h1.12v1.12h-1.12zM451.31,284.56h1.12v1.12h-1.12zM453.46,284.56h1.12v1.12h-1.12zM455.61,284.56h1.12v1.12h-1.12zM457.77,284.56h1.12v1.12h-1.12zM464.23,284.56h1.12v1.12h-1.12zM466.39,284.56h1.12v1.12h-1.12zM468.54,284.56h1.12v1.12h-1.12zM470.70,284.56h1.12v1.12h-1.12zM472.85,284.56h1.12v1.12h-1.12zM479.32,284.56h1.12v1.12h-1.12zM485.78,284.56h1.12v1.12h-1.12zM487.94,284.56h1.12v1.12h-1.12zM500.87,284.56h1.12v1.12h-1.12zM503.02,284.56h1.12v1.12h-1.12zM505.18,284.56h1.12v1.12h-1.12zM507.33,284.56h1.12v1.12h-1.12zM535.35,284.56h1.12v1.12h-1.12zM541.82,284.56h1.12v1.12h-1.12zM543.97,284.56h1.12v1.12h-1.12zM550.44,284.56h1.12v1.12h-1.12zM401.74,282.40h1.12v1.12h-1.12zM403.89,282.40h1.12v1.12h-1.12zM406.05,282.40h1.12v1.12h-1.12zM408.20,282.40h1.12v1.12h-1.12zM421.13,282.40h1.12v1.12h-1.12zM423.29,282.40h1.12v1.12h-1.12zM425.44,282.40h1.12v1.12h-1.12zM427.60,282.40h1.12v1.12h-1.12zM429.75,282.40h1.12v1.12h-1.12zM431.91,282.40h1.12v1.12h-1.12zM434.06,282.40h1.12v1.12h-1.12zM436.22,282.40h1.12v1.12h-1.12zM438.38,282.40h1.12v1.12h-1.12zM440.53,282.40h1.12v1.12h-1.12zM442.69,282.40h1.12v1.12h-1.12zM444.84,282.40h1.12v1.12h-1.12zM446.99,282.40h1.12v1.12h-1.12zM449.15,282.40h1.12v1.12h-1.12zM451.31,282.40h1.12v1.12h-1.12zM453.46,282.40h1.12v1.12h-1.12zM455.61,282.40h1.12v1.12h-1.12zM457.77,282.40h1.12v1.12h-1.12zM468.54,282.40h1.12v1.12h-1.12zM470.70,282.40h1.12v1.12h-1.12zM472.85,282.40h1.12v1.12h-1.12zM475.01,282.40h1.12v1.12h-1.12zM485.78,282.40h1.12v1.12h-1.12zM487.94,282.40h1.12v1.12h-1.12zM494.40,282.40h1.12v1.12h-1.12zM496.56,282.40h1.12v1.12h-1.12zM498.71,282.40h1.12v1.12h-1.12zM500.87,282.40h1.12v1.12h-1.12zM503.02,282.40h1.12v1.12h-1.12zM505.18,282.40h1.12v1.12h-1.12zM507.33,282.40h1.12v1.12h-1.12zM535.35,282.40h1.12v1.12h-1.12zM541.82,282.40h1.12v1.12h-1.12zM543.97,282.40h1.12v1.12h-1.12zM550.44,282.40h1.12v1.12h-1.12zM401.74,280.25h1.12v1.12h-1.12zM403.89,280.25h1.12v1.12h-1.12zM410.36,280.25h1.12v1.12h-1.12zM412.51,280.25h1.12v1.12h-1.12zM423.29,280.25h1.12v1.12h-1.12zM425.44,280.25h1.12v1.12h-1.12zM427.60,280.25h1.12v1.12h-1.12zM429.75,280.25h1.12v1.12h-1.12zM431.91,280.25h1.12v1.12h-1.12zM438.38,280.25h1.12v1.12h-1.12zM440.53,280.25h1.12v1.12h-1.12zM442.69,280.25h1.12v1.12h-1.12zM444.84,280.25h1.12v1.12h-1.12zM446.99,280.25h1.12v1.12h-1.12zM449.15,280.25h1.12v1.12h-1.12zM451.31,280.25h1.12v1.12h-1.12zM453.46,280.25h1.12v1.12h-1.12zM455.61,280.25h1.12v1.12h-1.12zM457.77,280.25h1.12v1.12h-1.12zM459.93,280.25h1.12v1.12h-1.12zM462.08,280.25h1.12v1.12h-1.12zM468.54,280.25h1.12v1.12h-1.12zM470.70,280.25h1.12v1.12h-1.12zM485.78,280.25h1.12v1.12h-1.12zM487.94,280.25h1.12v1.12h-1.12zM494.40,280.25h1.12v1.12h-1.12zM496.56,280.25h1.12v1.12h-1.12zM498.71,280.25h1.12v1.12h-1.12zM500.87,280.25h1.12v1.12h-1.12zM503.02,280.25h1.12v1.12h-1.12zM505.18,280.25h1.12v1.12h-1.12zM507.33,280.25h1.12v1.12h-1.12zM535.35,280.25h1.12v1.12h-1.12zM537.50,280.25h1.12v1.12h-1.12zM539.66,280.25h1.12v1.12h-1.12zM541.82,280.25h1.12v1.12h-1.12zM543.97,280.25h1.12v1.12h-1.12zM550.44,280.25h1.12v1.12h-1.12zM397.43,278.09h1.12v1.12h-1.12zM399.58,278.09h1.12v1.12h-1.12zM401.74,278.09h1.12v1.12h-1.12zM403.89,278.09h1.12v1.12h-1.12zM410.36,278.09h1.12v1.12h-1.12zM412.51,278.09h1.12v1.12h-1.12zM423.29,278.09h1.12v1.12h-1.12zM425.44,278.09h1.12v1.12h-1.12zM427.60,278.09h1.12v1.12h-1.12zM429.75,278.09h1.12v1.12h-1.12zM431.91,278.09h1.12v1.12h-1.12zM438.38,278.09h1.12v1.12h-1.12zM440.53,278.09h1.12v1.12h-1.12zM442.69,278.09h1.12v1.12h-1.12zM444.84,278.09h1.12v1.12h-1.12zM446.99,278.09h1.12v1.12h-1.12zM449.15,278.09h1.12v1.12h-1.12zM451.31,278.09h1.12v1.12h-1.12zM453.46,278.09h1.12v1.12h-1.12zM455.61,278.09h1.12v1.12h-1.12zM457.77,278.09h1.12v1.12h-1.12zM459.93,278.09h1.12v1.12h-1.12zM462.08,278.09h1.12v1.12h-1.12zM464.23,278.09h1.12v1.12h-1.12zM466.39,278.09h1.12v1.12h-1.12zM468.54,278.09h1.12v1.12h-1.12zM470.70,278.09h1.12v1.12h-1.12zM477.16,278.09h1.12v1.12h-1.12zM479.32,278.09h1.12v1.12h-1.12zM485.78,278.09h1.12v1.12h-1.12zM487.94,278.09h1.12v1.12h-1.12zM494.40,278.09h1.12v1.12h-1.12zM496.56,278.09h1.12v1.12h-1.12zM498.71,278.09h1.12v1.12h-1.12zM500.87,278.09h1.12v1.12h-1.12zM503.02,278.09h1.12v1.12h-1.12zM505.18,278.09h1.12v1.12h-1.12zM507.33,278.09h1.12v1.12h-1.12zM509.49,278.09h1.12v1.12h-1.12zM511.64,278.09h1.12v1.12h-1.12zM518.11,278.09h1.12v1.12h-1.12zM520.27,278.09h1.12v1.12h-1.12zM522.42,278.09h1.12v1.12h-1.12zM524.58,278.09h1.12v1.12h-1.12zM526.73,278.09h1.12v1.12h-1.12zM528.88,278.09h1.12v1.12h-1.12zM531.04,278.09h1.12v1.12h-1.12zM533.20,278.09h1.12v1.12h-1.12zM535.35,278.09h1.12v1.12h-1.12zM537.50,278.09h1.12v1.12h-1.12zM539.66,278.09h1.12v1.12h-1.12zM541.82,278.09h1.12v1.12h-1.12zM543.97,278.09h1.12v1.12h-1.12zM550.44,278.09h1.12v1.12h-1.12zM362.95,275.94h1.12v1.12h-1.12zM365.10,275.94h1.12v1.12h-1.12zM367.26,275.94h1.12v1.12h-1.12zM369.41,275.94h1.12v1.12h-1.12zM397.43,275.94h1.12v1.12h-1.12zM399.58,275.94h1.12v1.12h-1.12zM406.05,275.94h1.12v1.12h-1.12zM408.20,275.94h1.12v1.12h-1.12zM410.36,275.94h1.12v1.12h-1.12zM412.51,275.94h1.12v1.12h-1.12zM423.29,275.94h1.12v1.12h-1.12zM425.44,275.94h1.12v1.12h-1.12zM427.60,275.94h1.12v1.12h-1.12zM429.75,275.94h1.12v1.12h-1.12zM431.91,275.94h1.12v1.12h-1.12zM434.06,275.94h1.12v1.12h-1.12zM436.22,275.94h1.12v1.12h-1.12zM438.38,275.94h1.12v1.12h-1.12zM440.53,275.94h1.12v1.12h-1.12zM451.31,275.94h1.12v1.12h-1.12zM453.46,275.94h1.12v1.12h-1.12zM455.61,275.94h1.12v1.12h-1.12zM462.08,275.94h1.12v1.12h-1.12zM464.23,275.94h1.12v1.12h-1.12zM466.39,275.94h1.12v1.12h-1.12zM468.54,275.94h1.12v1.12h-1.12zM470.70,275.94h1.12v1.12h-1.12zM472.85,275.94h1.12v1.12h-1.12zM475.01,275.94h1.12v1.12h-1.12zM477.16,275.94h1.12v1.12h-1.12zM479.32,275.94h1.12v1.12h-1.12zM481.47,275.94h1.12v1.12h-1.12zM490.09,275.94h1.12v1.12h-1.12zM496.56,275.94h1.12v1.12h-1.12zM498.71,275.94h1.12v1.12h-1.12zM500.87,275.94h1.12v1.12h-1.12zM503.02,275.94h1.12v1.12h-1.12zM505.18,275.94h1.12v1.12h-1.12zM507.33,275.94h1.12v1.12h-1.12zM509.49,275.94h1.12v1.12h-1.12zM511.64,275.94h1.12v1.12h-1.12zM518.11,275.94h1.12v1.12h-1.12zM520.27,275.94h1.12v1.12h-1.12zM522.42,275.94h1.12v1.12h-1.12zM524.58,275.94h1.12v1.12h-1.12zM526.73,275.94h1.12v1.12h-1.12zM528.88,275.94h1.12v1.12h-1.12zM531.04,275.94h1.12v1.12h-1.12zM533.20,275.94h1.12v1.12h-1.12zM535.35,275.94h1.12v1.12h-1.12zM541.82,275.94h1.12v1.12h-1.12zM543.97,275.94h1.12v1.12h-1.12zM546.12,275.94h1.12v1.12h-1.12zM548.28,275.94h1.12v1.12h-1.12zM550.44,275.94h1.12v1.12h-1.12zM362.95,273.78h1.12v1.12h-1.12zM365.10,273.78h1.12v1.12h-1.12zM367.26,273.78h1.12v1.12h-1.12zM369.41,273.78h1.12v1.12h-1.12zM397.43,273.78h1.12v1.12h-1.12zM399.58,273.78h1.12v1.12h-1.12zM410.36,273.78h1.12v1.12h-1.12zM412.51,273.78h1.12v1.12h-1.12zM423.29,273.78h1.12v1.12h-1.12zM425.44,273.78h1.12v1.12h-1.12zM427.60,273.78h1.12v1.12h-1.12zM429.75,273.78h1.12v1.12h-1.12zM431.91,273.78h1.12v1.12h-1.12zM434.06,273.78h1.12v1.12h-1.12zM436.22,273.78h1.12v1.12h-1.12zM438.38,273.78h1.12v1.12h-1.12zM440.53,273.78h1.12v1.12h-1.12zM451.31,273.78h1.12v1.12h-1.12zM462.08,273.78h1.12v1.12h-1.12zM477.16,273.78h1.12v1.12h-1.12zM479.32,273.78h1.12v1.12h-1.12zM481.47,273.78h1.12v1.12h-1.12zM490.09,273.78h1.12v1.12h-1.12zM496.56,273.78h1.12v1.12h-1.12zM498.71,273.78h1.12v1.12h-1.12zM500.87,273.78h1.12v1.12h-1.12zM503.02,273.78h1.12v1.12h-1.12zM509.49,273.78h1.12v1.12h-1.12zM511.64,273.78h1.12v1.12h-1.12zM513.80,273.78h1.12v1.12h-1.12zM520.27,273.78h1.12v1.12h-1.12zM526.73,273.78h1.12v1.12h-1.12zM528.88,273.78h1.12v1.12h-1.12zM531.04,273.78h1.12v1.12h-1.12zM533.20,273.78h1.12v1.12h-1.12zM535.35,273.78h1.12v1.12h-1.12zM541.82,273.78h1.12v1.12h-1.12zM543.97,273.78h1.12v1.12h-1.12zM546.12,273.78h1.12v1.12h-1.12zM362.95,271.62h1.12v1.12h-1.12zM365.10,271.62h1.12v1.12h-1.12zM367.26,271.62h1.12v1.12h-1.12zM369.41,271.62h1.12v1.12h-1.12zM371.57,271.62h1.12v1.12h-1.12zM373.72,271.62h1.12v1.12h-1.12zM397.43,271.62h1.12v1.12h-1.12zM399.58,271.62h1.12v1.12h-1.12zM401.74,271.62h1.12v1.12h-1.12zM403.89,271.62h1.12v1.12h-1.12zM410.36,271.62h1.12v1.12h-1.12zM412.51,271.62h1.12v1.12h-1.12zM421.13,271.62h1.12v1.12h-1.12zM423.29,271.62h1.12v1.12h-1.12zM425.44,271.62h1.12v1.12h-1.12zM427.60,271.62h1.12v1.12h-1.12zM438.38,271.62h1.12v1.12h-1.12zM440.53,271.62h1.12v1.12h-1.12zM442.69,271.62h1.12v1.12h-1.12zM444.84,271.62h1.12v1.12h-1.12zM446.99,271.62h1.12v1.12h-1.12zM449.15,271.62h1.12v1.12h-1.12zM451.31,271.62h1.12v1.12h-1.12zM457.77,271.62h1.12v1.12h-1.12zM459.93,271.62h1.12v1.12h-1.12zM462.08,271.62h1.12v1.12h-1.12zM477.16,271.62h1.12v1.12h-1.12zM479.32,271.62h1.12v1.12h-1.12zM481.47,271.62h1.12v1.12h-1.12zM490.09,271.62h1.12v1.12h-1.12zM492.25,271.62h1.12v1.12h-1.12zM494.40,271.62h1.12v1.12h-1.12zM496.56,271.62h1.12v1.12h-1.12zM498.71,271.62h1.12v1.12h-1.12zM509.49,271.62h1.12v1.12h-1.12zM511.64,271.62h1.12v1.12h-1.12zM513.80,271.62h1.12v1.12h-1.12zM520.27,271.62h1.12v1.12h-1.12zM526.73,271.62h1.12v1.12h-1.12zM528.88,271.62h1.12v1.12h-1.12zM531.04,271.62h1.12v1.12h-1.12zM533.20,271.62h1.12v1.12h-1.12zM535.35,271.62h1.12v1.12h-1.12zM537.50,271.62h1.12v1.12h-1.12zM539.66,271.62h1.12v1.12h-1.12zM541.82,271.62h1.12v1.12h-1.12zM543.97,271.62h1.12v1.12h-1.12zM546.12,271.62h1.12v1.12h-1.12zM362.95,269.47h1.12v1.12h-1.12zM365.10,269.47h1.12v1.12h-1.12zM367.26,269.47h1.12v1.12h-1.12zM373.72,269.47h1.12v1.12h-1.12zM397.43,269.47h1.12v1.12h-1.12zM399.58,269.47h1.12v1.12h-1.12zM401.74,269.47h1.12v1.12h-1.12zM403.89,269.47h1.12v1.12h-1.12zM410.36,269.47h1.12v1.12h-1.12zM412.51,269.47h1.12v1.12h-1.12zM421.13,269.47h1.12v1.12h-1.12zM423.29,269.47h1.12v1.12h-1.12zM425.44,269.47h1.12v1.12h-1.12zM427.60,269.47h1.12v1.12h-1.12zM438.38,269.47h1.12v1.12h-1.12zM440.53,269.47h1.12v1.12h-1.12zM446.99,269.47h1.12v1.12h-1.12zM453.46,269.47h1.12v1.12h-1.12zM455.61,269.47h1.12v1.12h-1.12zM457.77,269.47h1.12v1.12h-1.12zM459.93,269.47h1.12v1.12h-1.12zM462.08,269.47h1.12v1.12h-1.12zM464.23,269.47h1.12v1.12h-1.12zM466.39,269.47h1.12v1.12h-1.12zM468.54,269.47h1.12v1.12h-1.12zM470.70,269.47h1.12v1.12h-1.12zM472.85,269.47h1.12v1.12h-1.12zM475.01,269.47h1.12v1.12h-1.12zM477.16,269.47h1.12v1.12h-1.12zM483.63,269.47h1.12v1.12h-1.12zM485.78,269.47h1.12v1.12h-1.12zM487.94,269.47h1.12v1.12h-1.12zM490.09,269.47h1.12v1.12h-1.12zM496.56,269.47h1.12v1.12h-1.12zM498.71,269.47h1.12v1.12h-1.12zM505.18,269.47h1.12v1.12h-1.12zM507.33,269.47h1.12v1.12h-1.12zM509.49,269.47h1.12v1.12h-1.12zM511.64,269.47h1.12v1.12h-1.12zM513.80,269.47h1.12v1.12h-1.12zM515.96,269.47h1.12v1.12h-1.12zM518.11,269.47h1.12v1.12h-1.12zM520.27,269.47h1.12v1.12h-1.12zM522.42,269.47h1.12v1.12h-1.12zM524.58,269.47h1.12v1.12h-1.12zM526.73,269.47h1.12v1.12h-1.12zM528.88,269.47h1.12v1.12h-1.12zM539.66,269.47h1.12v1.12h-1.12zM541.82,269.47h1.12v1.12h-1.12zM543.97,269.47h1.12v1.12h-1.12zM546.12,269.47h1.12v1.12h-1.12zM548.28,269.47h1.12v1.12h-1.12zM550.44,269.47h1.12v1.12h-1.12zM362.95,267.31h1.12v1.12h-1.12zM365.10,267.31h1.12v1.12h-1.12zM367.26,267.31h1.12v1.12h-1.12zM373.72,267.31h1.12v1.12h-1.12zM397.43,267.31h1.12v1.12h-1.12zM399.58,267.31h1.12v1.12h-1.12zM401.74,267.31h1.12v1.12h-1.12zM403.89,267.31h1.12v1.12h-1.12zM410.36,267.31h1.12v1.12h-1.12zM412.51,267.31h1.12v1.12h-1.12zM421.13,267.31h1.12v1.12h-1.12zM423.29,267.31h1.12v1.12h-1.12zM425.44,267.31h1.12v1.12h-1.12zM427.60,267.31h1.12v1.12h-1.12zM429.75,267.31h1.12v1.12h-1.12zM431.91,267.31h1.12v1.12h-1.12zM434.06,267.31h1.12v1.12h-1.12zM436.22,267.31h1.12v1.12h-1.12zM438.38,267.31h1.12v1.12h-1.12zM440.53,267.31h1.12v1.12h-1.12zM446.99,267.31h1.12v1.12h-1.12zM457.77,267.31h1.12v1.12h-1.12zM459.93,267.31h1.12v1.12h-1.12zM462.08,267.31h1.12v1.12h-1.12zM464.23,267.31h1.12v1.12h-1.12zM466.39,267.31h1.12v1.12h-1.12zM468.54,267.31h1.12v1.12h-1.12zM470.70,267.31h1.12v1.12h-1.12zM472.85,267.31h1.12v1.12h-1.12zM475.01,267.31h1.12v1.12h-1.12zM477.16,267.31h1.12v1.12h-1.12zM483.63,267.31h1.12v1.12h-1.12zM485.78,267.31h1.12v1.12h-1.12zM487.94,267.31h1.12v1.12h-1.12zM490.09,267.31h1.12v1.12h-1.12zM496.56,267.31h1.12v1.12h-1.12zM498.71,267.31h1.12v1.12h-1.12zM500.87,267.31h1.12v1.12h-1.12zM503.02,267.31h1.12v1.12h-1.12zM505.18,267.31h1.12v1.12h-1.12zM507.33,267.31h1.12v1.12h-1.12zM509.49,267.31h1.12v1.12h-1.12zM511.64,267.31h1.12v1.12h-1.12zM513.80,267.31h1.12v1.12h-1.12zM515.96,267.31h1.12v1.12h-1.12zM518.11,267.31h1.12v1.12h-1.12zM520.27,267.31h1.12v1.12h-1.12zM522.42,267.31h1.12v1.12h-1.12zM524.58,267.31h1.12v1.12h-1.12zM526.73,267.31h1.12v1.12h-1.12zM528.88,267.31h1.12v1.12h-1.12zM539.66,267.31h1.12v1.12h-1.12zM541.82,267.31h1.12v1.12h-1.12zM543.97,267.31h1.12v1.12h-1.12zM367.26,265.16h1.12v1.12h-1.12zM369.41,265.16h1.12v1.12h-1.12zM371.57,265.16h1.12v1.12h-1.12zM373.72,265.16h1.12v1.12h-1.12zM375.88,265.16h1.12v1.12h-1.12zM382.34,265.16h1.12v1.12h-1.12zM406.05,265.16h1.12v1.12h-1.12zM408.20,265.16h1.12v1.12h-1.12zM410.36,265.16h1.12v1.12h-1.12zM416.82,265.16h1.12v1.12h-1.12zM418.98,265.16h1.12v1.12h-1.12zM425.44,265.16h1.12v1.12h-1.12zM427.60,265.16h1.12v1.12h-1.12zM438.38,265.16h1.12v1.12h-1.12zM440.53,265.16h1.12v1.12h-1.12zM442.69,265.16h1.12v1.12h-1.12zM444.84,265.16h1.12v1.12h-1.12zM446.99,265.16h1.12v1.12h-1.12zM449.15,265.16h1.12v1.12h-1.12zM451.31,265.16h1.12v1.12h-1.12zM457.77,265.16h1.12v1.12h-1.12zM464.23,265.16h1.12v1.12h-1.12zM466.39,265.16h1.12v1.12h-1.12zM468.54,265.16h1.12v1.12h-1.12zM470.70,265.16h1.12v1.12h-1.12zM472.85,265.16h1.12v1.12h-1.12zM475.01,265.16h1.12v1.12h-1.12zM477.16,265.16h1.12v1.12h-1.12zM479.32,265.16h1.12v1.12h-1.12zM481.47,265.16h1.12v1.12h-1.12zM483.63,265.16h1.12v1.12h-1.12zM485.78,265.16h1.12v1.12h-1.12zM487.94,265.16h1.12v1.12h-1.12zM494.40,265.16h1.12v1.12h-1.12zM496.56,265.16h1.12v1.12h-1.12zM498.71,265.16h1.12v1.12h-1.12zM500.87,265.16h1.12v1.12h-1.12zM503.02,265.16h1.12v1.12h-1.12zM509.49,265.16h1.12v1.12h-1.12zM511.64,265.16h1.12v1.12h-1.12zM513.80,265.16h1.12v1.12h-1.12zM515.96,265.16h1.12v1.12h-1.12zM518.11,265.16h1.12v1.12h-1.12zM520.27,265.16h1.12v1.12h-1.12zM522.42,265.16h1.12v1.12h-1.12zM524.58,265.16h1.12v1.12h-1.12zM526.73,265.16h1.12v1.12h-1.12zM528.88,265.16h1.12v1.12h-1.12zM539.66,265.16h1.12v1.12h-1.12zM541.82,265.16h1.12v1.12h-1.12zM543.97,265.16h1.12v1.12h-1.12zM371.57,263.01h1.12v1.12h-1.12zM373.72,263.01h1.12v1.12h-1.12zM375.88,263.01h1.12v1.12h-1.12zM382.34,263.01h1.12v1.12h-1.12zM406.05,263.01h1.12v1.12h-1.12zM408.20,263.01h1.12v1.12h-1.12zM410.36,263.01h1.12v1.12h-1.12zM416.82,263.01h1.12v1.12h-1.12zM418.98,263.01h1.12v1.12h-1.12zM425.44,263.01h1.12v1.12h-1.12zM427.60,263.01h1.12v1.12h-1.12zM438.38,263.01h1.12v1.12h-1.12zM440.53,263.01h1.12v1.12h-1.12zM442.69,263.01h1.12v1.12h-1.12zM453.46,263.01h1.12v1.12h-1.12zM455.61,263.01h1.12v1.12h-1.12zM457.77,263.01h1.12v1.12h-1.12zM464.23,263.01h1.12v1.12h-1.12zM466.39,263.01h1.12v1.12h-1.12zM468.54,263.01h1.12v1.12h-1.12zM470.70,263.01h1.12v1.12h-1.12zM472.85,263.01h1.12v1.12h-1.12zM475.01,263.01h1.12v1.12h-1.12zM477.16,263.01h1.12v1.12h-1.12zM479.32,263.01h1.12v1.12h-1.12zM481.47,263.01h1.12v1.12h-1.12zM487.94,263.01h1.12v1.12h-1.12zM494.40,263.01h1.12v1.12h-1.12zM496.56,263.01h1.12v1.12h-1.12zM498.71,263.01h1.12v1.12h-1.12zM500.87,263.01h1.12v1.12h-1.12zM503.02,263.01h1.12v1.12h-1.12zM520.27,263.01h1.12v1.12h-1.12zM522.42,263.01h1.12v1.12h-1.12zM524.58,263.01h1.12v1.12h-1.12zM526.73,263.01h1.12v1.12h-1.12zM528.88,263.01h1.12v1.12h-1.12zM539.66,263.01h1.12v1.12h-1.12zM541.82,263.01h1.12v1.12h-1.12zM543.97,263.01h1.12v1.12h-1.12zM362.95,260.85h1.12v1.12h-1.12zM365.10,260.85h1.12v1.12h-1.12zM380.19,260.85h1.12v1.12h-1.12zM382.34,260.85h1.12v1.12h-1.12zM406.05,260.85h1.12v1.12h-1.12zM408.20,260.85h1.12v1.12h-1.12zM410.36,260.85h1.12v1.12h-1.12zM423.29,260.85h1.12v1.12h-1.12zM425.44,260.85h1.12v1.12h-1.12zM427.60,260.85h1.12v1.12h-1.12zM438.38,260.85h1.12v1.12h-1.12zM440.53,260.85h1.12v1.12h-1.12zM442.69,260.85h1.12v1.12h-1.12zM453.46,260.85h1.12v1.12h-1.12zM455.61,260.85h1.12v1.12h-1.12zM457.77,260.85h1.12v1.12h-1.12zM459.93,260.85h1.12v1.12h-1.12zM462.08,260.85h1.12v1.12h-1.12zM464.23,260.85h1.12v1.12h-1.12zM466.39,260.85h1.12v1.12h-1.12zM468.54,260.85h1.12v1.12h-1.12zM487.94,260.85h1.12v1.12h-1.12zM490.09,260.85h1.12v1.12h-1.12zM492.25,260.85h1.12v1.12h-1.12zM494.40,260.85h1.12v1.12h-1.12zM496.56,260.85h1.12v1.12h-1.12zM498.71,260.85h1.12v1.12h-1.12zM500.87,260.85h1.12v1.12h-1.12zM503.02,260.85h1.12v1.12h-1.12zM505.18,260.85h1.12v1.12h-1.12zM507.33,260.85h1.12v1.12h-1.12zM520.27,260.85h1.12v1.12h-1.12zM522.42,260.85h1.12v1.12h-1.12zM524.58,260.85h1.12v1.12h-1.12zM526.73,260.85h1.12v1.12h-1.12zM528.88,260.85h1.12v1.12h-1.12zM531.04,260.85h1.12v1.12h-1.12zM533.20,260.85h1.12v1.12h-1.12zM539.66,260.85h1.12v1.12h-1.12zM541.82,260.85h1.12v1.12h-1.12zM543.97,260.85h1.12v1.12h-1.12zM550.44,260.85h1.12v1.12h-1.12zM362.95,258.69h1.12v1.12h-1.12zM365.10,258.69h1.12v1.12h-1.12zM367.26,258.69h1.12v1.12h-1.12zM369.41,258.69h1.12v1.12h-1.12zM380.19,258.69h1.12v1.12h-1.12zM382.34,258.69h1.12v1.12h-1.12zM406.05,258.69h1.12v1.12h-1.12zM408.20,258.69h1.12v1.12h-1.12zM410.36,258.69h1.12v1.12h-1.12zM423.29,258.69h1.12v1.12h-1.12zM425.44,258.69h1.12v1.12h-1.12zM427.60,258.69h1.12v1.12h-1.12zM438.38,258.69h1.12v1.12h-1.12zM440.53,258.69h1.12v1.12h-1.12zM442.69,258.69h1.12v1.12h-1.12zM444.84,258.69h1.12v1.12h-1.12zM446.99,258.69h1.12v1.12h-1.12zM449.15,258.69h1.12v1.12h-1.12zM451.31,258.69h1.12v1.12h-1.12zM453.46,258.69h1.12v1.12h-1.12zM455.61,258.69h1.12v1.12h-1.12zM457.77,258.69h1.12v1.12h-1.12zM464.23,258.69h1.12v1.12h-1.12zM466.39,258.69h1.12v1.12h-1.12zM468.54,258.69h1.12v1.12h-1.12zM487.94,258.69h1.12v1.12h-1.12zM490.09,258.69h1.12v1.12h-1.12zM492.25,258.69h1.12v1.12h-1.12zM498.71,258.69h1.12v1.12h-1.12zM500.87,258.69h1.12v1.12h-1.12zM507.33,258.69h1.12v1.12h-1.12zM509.49,258.69h1.12v1.12h-1.12zM511.64,258.69h1.12v1.12h-1.12zM520.27,258.69h1.12v1.12h-1.12zM522.42,258.69h1.12v1.12h-1.12zM524.58,258.69h1.12v1.12h-1.12zM526.73,258.69h1.12v1.12h-1.12zM528.88,258.69h1.12v1.12h-1.12zM531.04,258.69h1.12v1.12h-1.12zM533.20,258.69h1.12v1.12h-1.12zM539.66,258.69h1.12v1.12h-1.12zM541.82,258.69h1.12v1.12h-1.12zM543.97,258.69h1.12v1.12h-1.12zM550.44,258.69h1.12v1.12h-1.12zM362.95,256.54h1.12v1.12h-1.12zM365.10,256.54h1.12v1.12h-1.12zM367.26,256.54h1.12v1.12h-1.12zM369.41,256.54h1.12v1.12h-1.12zM371.57,256.54h1.12v1.12h-1.12zM373.72,256.54h1.12v1.12h-1.12zM375.88,256.54h1.12v1.12h-1.12zM410.36,256.54h1.12v1.12h-1.12zM412.51,256.54h1.12v1.12h-1.12zM414.67,256.54h1.12v1.12h-1.12zM423.29,256.54h1.12v1.12h-1.12zM425.44,256.54h1.12v1.12h-1.12zM427.60,256.54h1.12v1.12h-1.12zM429.75,256.54h1.12v1.12h-1.12zM431.91,256.54h1.12v1.12h-1.12zM434.06,256.54h1.12v1.12h-1.12zM436.22,256.54h1.12v1.12h-1.12zM438.38,256.54h1.12v1.12h-1.12zM440.53,256.54h1.12v1.12h-1.12zM442.69,256.54h1.12v1.12h-1.12zM444.84,256.54h1.12v1.12h-1.12zM446.99,256.54h1.12v1.12h-1.12zM449.15,256.54h1.12v1.12h-1.12zM451.31,256.54h1.12v1.12h-1.12zM453.46,256.54h1.12v1.12h-1.12zM455.61,256.54h1.12v1.12h-1.12zM457.77,256.54h1.12v1.12h-1.12zM468.54,256.54h1.12v1.12h-1.12zM487.94,256.54h1.12v1.12h-1.12zM490.09,256.54h1.12v1.12h-1.12zM492.25,256.54h1.12v1.12h-1.12zM498.71,256.54h1.12v1.12h-1.12zM500.87,256.54h1.12v1.12h-1.12zM507.33,256.54h1.12v1.12h-1.12zM509.49,256.54h1.12v1.12h-1.12zM511.64,256.54h1.12v1.12h-1.12zM518.11,256.54h1.12v1.12h-1.12zM520.27,256.54h1.12v1.12h-1.12zM526.73,256.54h1.12v1.12h-1.12zM528.88,256.54h1.12v1.12h-1.12zM531.04,256.54h1.12v1.12h-1.12zM533.20,256.54h1.12v1.12h-1.12zM535.35,256.54h1.12v1.12h-1.12zM537.50,256.54h1.12v1.12h-1.12zM539.66,256.54h1.12v1.12h-1.12zM550.44,256.54h1.12v1.12h-1.12zM362.95,254.39h1.12v1.12h-1.12zM365.10,254.39h1.12v1.12h-1.12zM367.26,254.39h1.12v1.12h-1.12zM369.41,254.39h1.12v1.12h-1.12zM371.57,254.39h1.12v1.12h-1.12zM373.72,254.39h1.12v1.12h-1.12zM375.88,254.39h1.12v1.12h-1.12zM410.36,254.39h1.12v1.12h-1.12zM412.51,254.39h1.12v1.12h-1.12zM414.67,254.39h1.12v1.12h-1.12zM416.82,254.39h1.12v1.12h-1.12zM418.98,254.39h1.12v1.12h-1.12zM421.13,254.39h1.12v1.12h-1.12zM423.29,254.39h1.12v1.12h-1.12zM425.44,254.39h1.12v1.12h-1.12zM427.60,254.39h1.12v1.12h-1.12zM446.99,254.39h1.12v1.12h-1.12zM449.15,254.39h1.12v1.12h-1.12zM451.31,254.39h1.12v1.12h-1.12zM453.46,254.39h1.12v1.12h-1.12zM455.61,254.39h1.12v1.12h-1.12zM457.77,254.39h1.12v1.12h-1.12zM459.93,254.39h1.12v1.12h-1.12zM462.08,254.39h1.12v1.12h-1.12zM468.54,254.39h1.12v1.12h-1.12zM483.63,254.39h1.12v1.12h-1.12zM490.09,254.39h1.12v1.12h-1.12zM492.25,254.39h1.12v1.12h-1.12zM494.40,254.39h1.12v1.12h-1.12zM496.56,254.39h1.12v1.12h-1.12zM498.71,254.39h1.12v1.12h-1.12zM500.87,254.39h1.12v1.12h-1.12zM503.02,254.39h1.12v1.12h-1.12zM505.18,254.39h1.12v1.12h-1.12zM507.33,254.39h1.12v1.12h-1.12zM509.49,254.39h1.12v1.12h-1.12zM511.64,254.39h1.12v1.12h-1.12zM518.11,254.39h1.12v1.12h-1.12zM520.27,254.39h1.12v1.12h-1.12zM526.73,254.39h1.12v1.12h-1.12zM528.88,254.39h1.12v1.12h-1.12zM531.04,254.39h1.12v1.12h-1.12zM537.50,254.39h1.12v1.12h-1.12zM539.66,254.39h1.12v1.12h-1.12zM550.44,254.39h1.12v1.12h-1.12zM362.95,252.23h1.12v1.12h-1.12zM365.10,252.23h1.12v1.12h-1.12zM367.26,252.23h1.12v1.12h-1.12zM369.41,252.23h1.12v1.12h-1.12zM406.05,252.23h1.12v1.12h-1.12zM408.20,252.23h1.12v1.12h-1.12zM414.67,252.23h1.12v1.12h-1.12zM423.29,252.23h1.12v1.12h-1.12zM425.44,252.23h1.12v1.12h-1.12zM427.60,252.23h1.12v1.12h-1.12zM446.99,252.23h1.12v1.12h-1.12zM449.15,252.23h1.12v1.12h-1.12zM455.61,252.23h1.12v1.12h-1.12zM457.77,252.23h1.12v1.12h-1.12zM459.93,252.23h1.12v1.12h-1.12zM462.08,252.23h1.12v1.12h-1.12zM464.23,252.23h1.12v1.12h-1.12zM466.39,252.23h1.12v1.12h-1.12zM468.54,252.23h1.12v1.12h-1.12zM483.63,252.23h1.12v1.12h-1.12zM490.09,252.23h1.12v1.12h-1.12zM492.25,252.23h1.12v1.12h-1.12zM494.40,252.23h1.12v1.12h-1.12zM496.56,252.23h1.12v1.12h-1.12zM498.71,252.23h1.12v1.12h-1.12zM500.87,252.23h1.12v1.12h-1.12zM503.02,252.23h1.12v1.12h-1.12zM505.18,252.23h1.12v1.12h-1.12zM507.33,252.23h1.12v1.12h-1.12zM509.49,252.23h1.12v1.12h-1.12zM511.64,252.23h1.12v1.12h-1.12zM513.80,252.23h1.12v1.12h-1.12zM515.96,252.23h1.12v1.12h-1.12zM518.11,252.23h1.12v1.12h-1.12zM520.27,252.23h1.12v1.12h-1.12zM522.42,252.23h1.12v1.12h-1.12zM524.58,252.23h1.12v1.12h-1.12zM526.73,252.23h1.12v1.12h-1.12zM528.88,252.23h1.12v1.12h-1.12zM531.04,252.23h1.12v1.12h-1.12zM537.50,252.23h1.12v1.12h-1.12zM539.66,252.23h1.12v1.12h-1.12zM541.82,252.23h1.12v1.12h-1.12zM543.97,252.23h1.12v1.12h-1.12zM546.12,252.23h1.12v1.12h-1.12zM548.28,252.23h1.12v1.12h-1.12zM550.44,252.23h1.12v1.12h-1.12zM362.95,250.08h1.12v1.12h-1.12zM365.10,250.08h1.12v1.12h-1.12zM367.26,250.08h1.12v1.12h-1.12zM369.41,250.08h1.12v1.12h-1.12zM378.03,250.08h1.12v1.12h-1.12zM380.19,250.08h1.12v1.12h-1.12zM382.34,250.08h1.12v1.12h-1.12zM406.05,250.08h1.12v1.12h-1.12zM408.20,250.08h1.12v1.12h-1.12zM414.67,250.08h1.12v1.12h-1.12zM423.29,250.08h1.12v1.12h-1.12zM425.44,250.08h1.12v1.12h-1.12zM427.60,250.08h1.12v1.12h-1.12zM446.99,250.08h1.12v1.12h-1.12zM449.15,250.08h1.12v1.12h-1.12zM455.61,250.08h1.12v1.12h-1.12zM457.77,250.08h1.12v1.12h-1.12zM459.93,250.08h1.12v1.12h-1.12zM462.08,250.08h1.12v1.12h-1.12zM464.23,250.08h1.12v1.12h-1.12zM466.39,250.08h1.12v1.12h-1.12zM468.54,250.08h1.12v1.12h-1.12zM483.63,250.08h1.12v1.12h-1.12zM490.09,250.08h1.12v1.12h-1.12zM492.25,250.08h1.12v1.12h-1.12zM494.40,250.08h1.12v1.12h-1.12zM496.56,250.08h1.12v1.12h-1.12zM498.71,250.08h1.12v1.12h-1.12zM500.87,250.08h1.12v1.12h-1.12zM503.02,250.08h1.12v1.12h-1.12zM509.49,250.08h1.12v1.12h-1.12zM511.64,250.08h1.12v1.12h-1.12zM513.80,250.08h1.12v1.12h-1.12zM515.96,250.08h1.12v1.12h-1.12zM518.11,250.08h1.12v1.12h-1.12zM520.27,250.08h1.12v1.12h-1.12zM522.42,250.08h1.12v1.12h-1.12zM524.58,250.08h1.12v1.12h-1.12zM526.73,250.08h1.12v1.12h-1.12zM533.20,250.08h1.12v1.12h-1.12zM535.35,250.08h1.12v1.12h-1.12zM537.50,250.08h1.12v1.12h-1.12zM539.66,250.08h1.12v1.12h-1.12zM541.82,250.08h1.12v1.12h-1.12zM543.97,250.08h1.12v1.12h-1.12zM546.12,250.08h1.12v1.12h-1.12zM548.28,250.08h1.12v1.12h-1.12zM550.44,250.08h1.12v1.12h-1.12zM362.95,247.92h1.12v1.12h-1.12zM365.10,247.92h1.12v1.12h-1.12zM367.26,247.92h1.12v1.12h-1.12zM369.41,247.92h1.12v1.12h-1.12zM382.34,247.92h1.12v1.12h-1.12zM406.05,247.92h1.12v1.12h-1.12zM408.20,247.92h1.12v1.12h-1.12zM410.36,247.92h1.12v1.12h-1.12zM412.51,247.92h1.12v1.12h-1.12zM414.67,247.92h1.12v1.12h-1.12zM423.29,247.92h1.12v1.12h-1.12zM425.44,247.92h1.12v1.12h-1.12zM427.60,247.92h1.12v1.12h-1.12zM446.99,247.92h1.12v1.12h-1.12zM449.15,247.92h1.12v1.12h-1.12zM451.31,247.92h1.12v1.12h-1.12zM453.46,247.92h1.12v1.12h-1.12zM459.93,247.92h1.12v1.12h-1.12zM462.08,247.92h1.12v1.12h-1.12zM464.23,247.92h1.12v1.12h-1.12zM466.39,247.92h1.12v1.12h-1.12zM472.85,247.92h1.12v1.12h-1.12zM475.01,247.92h1.12v1.12h-1.12zM477.16,247.92h1.12v1.12h-1.12zM479.32,247.92h1.12v1.12h-1.12zM481.47,247.92h1.12v1.12h-1.12zM483.63,247.92h1.12v1.12h-1.12zM490.09,247.92h1.12v1.12h-1.12zM492.25,247.92h1.12v1.12h-1.12zM494.40,247.92h1.12v1.12h-1.12zM496.56,247.92h1.12v1.12h-1.12zM513.80,247.92h1.12v1.12h-1.12zM515.96,247.92h1.12v1.12h-1.12zM518.11,247.92h1.12v1.12h-1.12zM520.27,247.92h1.12v1.12h-1.12zM522.42,247.92h1.12v1.12h-1.12zM524.58,247.92h1.12v1.12h-1.12zM526.73,247.92h1.12v1.12h-1.12zM533.20,247.92h1.12v1.12h-1.12zM535.35,247.92h1.12v1.12h-1.12zM537.50,247.92h1.12v1.12h-1.12zM362.95,245.77h1.12v1.12h-1.12zM365.10,245.77h1.12v1.12h-1.12zM371.57,245.77h1.12v1.12h-1.12zM373.72,245.77h1.12v1.12h-1.12zM375.88,245.77h1.12v1.12h-1.12zM382.34,245.77h1.12v1.12h-1.12zM406.05,245.77h1.12v1.12h-1.12zM408.20,245.77h1.12v1.12h-1.12zM410.36,245.77h1.12v1.12h-1.12zM412.51,245.77h1.12v1.12h-1.12zM414.67,245.77h1.12v1.12h-1.12zM416.82,245.77h1.12v1.12h-1.12zM418.98,245.77h1.12v1.12h-1.12zM421.13,245.77h1.12v1.12h-1.12zM423.29,245.77h1.12v1.12h-1.12zM425.44,245.77h1.12v1.12h-1.12zM427.60,245.77h1.12v1.12h-1.12zM446.99,245.77h1.12v1.12h-1.12zM449.15,245.77h1.12v1.12h-1.12zM451.31,245.77h1.12v1.12h-1.12zM453.46,245.77h1.12v1.12h-1.12zM459.93,245.77h1.12v1.12h-1.12zM462.08,245.77h1.12v1.12h-1.12zM464.23,245.77h1.12v1.12h-1.12zM466.39,245.77h1.12v1.12h-1.12zM472.85,245.77h1.12v1.12h-1.12zM475.01,245.77h1.12v1.12h-1.12zM477.16,245.77h1.12v1.12h-1.12zM479.32,245.77h1.12v1.12h-1.12zM481.47,245.77h1.12v1.12h-1.12zM483.63,245.77h1.12v1.12h-1.12zM485.78,245.77h1.12v1.12h-1.12zM492.25,245.77h1.12v1.12h-1.12zM494.40,245.77h1.12v1.12h-1.12zM496.56,245.77h1.12v1.12h-1.12zM513.80,245.77h1.12v1.12h-1.12zM515.96,245.77h1.12v1.12h-1.12zM518.11,245.77h1.12v1.12h-1.12zM520.27,245.77h1.12v1.12h-1.12zM522.42,245.77h1.12v1.12h-1.12zM533.20,245.77h1.12v1.12h-1.12zM535.35,245.77h1.12v1.12h-1.12zM537.50,245.77h1.12v1.12h-1.12zM362.95,243.61h1.12v1.12h-1.12zM365.10,243.61h1.12v1.12h-1.12zM375.88,243.61h1.12v1.12h-1.12zM378.03,243.61h1.12v1.12h-1.12zM380.19,243.61h1.12v1.12h-1.12zM382.34,243.61h1.12v1.12h-1.12zM384.50,243.61h1.12v1.12h-1.12zM386.65,243.61h1.12v1.12h-1.12zM388.81,243.61h1.12v1.12h-1.12zM390.96,243.61h1.12v1.12h-1.12zM393.12,243.61h1.12v1.12h-1.12zM395.27,243.61h1.12v1.12h-1.12zM397.43,243.61h1.12v1.12h-1.12zM399.58,243.61h1.12v1.12h-1.12zM401.74,243.61h1.12v1.12h-1.12zM403.89,243.61h1.12v1.12h-1.12zM406.05,243.61h1.12v1.12h-1.12zM408.20,243.61h1.12v1.12h-1.12zM410.36,243.61h1.12v1.12h-1.12zM412.51,243.61h1.12v1.12h-1.12zM414.67,243.61h1.12v1.12h-1.12zM416.82,243.61h1.12v1.12h-1.12zM418.98,243.61h1.12v1.12h-1.12zM421.13,243.61h1.12v1.12h-1.12zM423.29,243.61h1.12v1.12h-1.12zM425.44,243.61h1.12v1.12h-1.12zM427.60,243.61h1.12v1.12h-1.12zM446.99,243.61h1.12v1.12h-1.12zM453.46,243.61h1.12v1.12h-1.12zM455.61,243.61h1.12v1.12h-1.12zM457.77,243.61h1.12v1.12h-1.12zM459.93,243.61h1.12v1.12h-1.12zM462.08,243.61h1.12v1.12h-1.12zM464.23,243.61h1.12v1.12h-1.12zM466.39,243.61h1.12v1.12h-1.12zM468.54,243.61h1.12v1.12h-1.12zM470.70,243.61h1.12v1.12h-1.12zM472.85,243.61h1.12v1.12h-1.12zM475.01,243.61h1.12v1.12h-1.12zM477.16,243.61h1.12v1.12h-1.12zM479.32,243.61h1.12v1.12h-1.12zM481.47,243.61h1.12v1.12h-1.12zM483.63,243.61h1.12v1.12h-1.12zM485.78,243.61h1.12v1.12h-1.12zM492.25,243.61h1.12v1.12h-1.12zM494.40,243.61h1.12v1.12h-1.12zM496.56,243.61h1.12v1.12h-1.12zM509.49,243.61h1.12v1.12h-1.12zM511.64,243.61h1.12v1.12h-1.12zM513.80,243.61h1.12v1.12h-1.12zM533.20,243.61h1.12v1.12h-1.12zM535.35,243.61h1.12v1.12h-1.12zM537.50,243.61h1.12v1.12h-1.12zM362.95,241.46h1.12v1.12h-1.12zM365.10,241.46h1.12v1.12h-1.12zM367.26,241.46h1.12v1.12h-1.12zM369.41,241.46h1.12v1.12h-1.12zM375.88,241.46h1.12v1.12h-1.12zM378.03,241.46h1.12v1.12h-1.12zM393.12,241.46h1.12v1.12h-1.12zM406.05,241.46h1.12v1.12h-1.12zM414.67,241.46h1.12v1.12h-1.12zM416.82,241.46h1.12v1.12h-1.12zM425.44,241.46h1.12v1.12h-1.12zM427.60,241.46h1.12v1.12h-1.12zM446.99,241.46h1.12v1.12h-1.12zM462.08,241.46h1.12v1.12h-1.12zM464.23,241.46h1.12v1.12h-1.12zM466.39,241.46h1.12v1.12h-1.12zM468.54,241.46h1.12v1.12h-1.12zM470.70,241.46h1.12v1.12h-1.12zM472.85,241.46h1.12v1.12h-1.12zM475.01,241.46h1.12v1.12h-1.12zM477.16,241.46h1.12v1.12h-1.12zM479.32,241.46h1.12v1.12h-1.12zM496.56,241.46h1.12v1.12h-1.12zM498.71,241.46h1.12v1.12h-1.12zM500.87,241.46h1.12v1.12h-1.12zM503.02,241.46h1.12v1.12h-1.12zM505.18,241.46h1.12v1.12h-1.12zM507.33,241.46h1.12v1.12h-1.12zM509.49,241.46h1.12v1.12h-1.12zM511.64,241.46h1.12v1.12h-1.12zM513.80,241.46h1.12v1.12h-1.12zM524.58,241.46h1.12v1.12h-1.12zM526.73,241.46h1.12v1.12h-1.12zM528.88,241.46h1.12v1.12h-1.12zM531.04,241.46h1.12v1.12h-1.12zM533.20,241.46h1.12v1.12h-1.12zM535.35,241.46h1.12v1.12h-1.12zM537.50,241.46h1.12v1.12h-1.12zM362.95,239.30h1.12v1.12h-1.12zM365.10,239.30h1.12v1.12h-1.12zM373.72,239.30h1.12v1.12h-1.12zM375.88,239.30h1.12v1.12h-1.12zM378.03,239.30h1.12v1.12h-1.12zM393.12,239.30h1.12v1.12h-1.12zM406.05,239.30h1.12v1.12h-1.12zM414.67,239.30h1.12v1.12h-1.12zM416.82,239.30h1.12v1.12h-1.12zM425.44,239.30h1.12v1.12h-1.12zM427.60,239.30h1.12v1.12h-1.12zM446.99,239.30h1.12v1.12h-1.12zM449.15,239.30h1.12v1.12h-1.12zM451.31,239.30h1.12v1.12h-1.12zM462.08,239.30h1.12v1.12h-1.12zM464.23,239.30h1.12v1.12h-1.12zM470.70,239.30h1.12v1.12h-1.12zM472.85,239.30h1.12v1.12h-1.12zM475.01,239.30h1.12v1.12h-1.12zM477.16,239.30h1.12v1.12h-1.12zM479.32,239.30h1.12v1.12h-1.12zM496.56,239.30h1.12v1.12h-1.12zM498.71,239.30h1.12v1.12h-1.12zM500.87,239.30h1.12v1.12h-1.12zM503.02,239.30h1.12v1.12h-1.12zM505.18,239.30h1.12v1.12h-1.12zM507.33,239.30h1.12v1.12h-1.12zM362.95,237.15h1.12v1.12h-1.12zM365.10,237.15h1.12v1.12h-1.12zM373.72,237.15h1.12v1.12h-1.12zM375.88,237.15h1.12v1.12h-1.12zM378.03,237.15h1.12v1.12h-1.12zM393.12,237.15h1.12v1.12h-1.12zM406.05,237.15h1.12v1.12h-1.12zM414.67,237.15h1.12v1.12h-1.12zM416.82,237.15h1.12v1.12h-1.12zM429.75,237.15h1.12v1.12h-1.12zM431.91,237.15h1.12v1.12h-1.12zM434.06,237.15h1.12v1.12h-1.12zM436.22,237.15h1.12v1.12h-1.12zM438.38,237.15h1.12v1.12h-1.12zM440.53,237.15h1.12v1.12h-1.12zM442.69,237.15h1.12v1.12h-1.12zM444.84,237.15h1.12v1.12h-1.12zM446.99,237.15h1.12v1.12h-1.12zM449.15,237.15h1.12v1.12h-1.12zM451.31,237.15h1.12v1.12h-1.12zM453.46,237.15h1.12v1.12h-1.12zM455.61,237.15h1.12v1.12h-1.12zM457.77,237.15h1.12v1.12h-1.12zM459.93,237.15h1.12v1.12h-1.12zM470.70,237.15h1.12v1.12h-1.12zM472.85,237.15h1.12v1.12h-1.12zM475.01,237.15h1.12v1.12h-1.12zM477.16,237.15h1.12v1.12h-1.12zM479.32,237.15h1.12v1.12h-1.12zM496.56,237.15h1.12v1.12h-1.12zM498.71,237.15h1.12v1.12h-1.12zM500.87,237.15h1.12v1.12h-1.12zM503.02,237.15h1.12v1.12h-1.12zM505.18,237.15h1.12v1.12h-1.12zM507.33,237.15h1.12v1.12h-1.12zM362.95,234.99h1.12v1.12h-1.12zM365.10,234.99h1.12v1.12h-1.12zM373.72,234.99h1.12v1.12h-1.12zM375.88,234.99h1.12v1.12h-1.12zM378.03,234.99h1.12v1.12h-1.12zM393.12,234.99h1.12v1.12h-1.12zM406.05,234.99h1.12v1.12h-1.12zM408.20,234.99h1.12v1.12h-1.12zM410.36,234.99h1.12v1.12h-1.12zM412.51,234.99h1.12v1.12h-1.12zM414.67,234.99h1.12v1.12h-1.12zM416.82,234.99h1.12v1.12h-1.12zM418.98,234.99h1.12v1.12h-1.12zM421.13,234.99h1.12v1.12h-1.12zM423.29,234.99h1.12v1.12h-1.12zM434.06,234.99h1.12v1.12h-1.12zM453.46,234.99h1.12v1.12h-1.12zM459.93,234.99h1.12v1.12h-1.12zM466.39,234.99h1.12v1.12h-1.12zM468.54,234.99h1.12v1.12h-1.12zM475.01,234.99h1.12v1.12h-1.12zM477.16,234.99h1.12v1.12h-1.12zM479.32,234.99h1.12v1.12h-1.12zM496.56,234.99h1.12v1.12h-1.12zM503.02,234.99h1.12v1.12h-1.12zM505.18,234.99h1.12v1.12h-1.12zM507.33,234.99h1.12v1.12h-1.12zM539.66,234.99h1.12v1.12h-1.12zM541.82,234.99h1.12v1.12h-1.12zM543.97,234.99h1.12v1.12h-1.12zM546.12,234.99h1.12v1.12h-1.12zM548.28,234.99h1.12v1.12h-1.12zM550.44,234.99h1.12v1.12h-1.12zM362.95,232.84h1.12v1.12h-1.12zM365.10,232.84h1.12v1.12h-1.12zM367.26,232.84h1.12v1.12h-1.12zM369.41,232.84h1.12v1.12h-1.12zM371.57,232.84h1.12v1.12h-1.12zM373.72,232.84h1.12v1.12h-1.12zM393.12,232.84h1.12v1.12h-1.12zM406.05,232.84h1.12v1.12h-1.12zM421.13,232.84h1.12v1.12h-1.12zM434.06,232.84h1.12v1.12h-1.12zM453.46,232.84h1.12v1.12h-1.12zM459.93,232.84h1.12v1.12h-1.12zM462.08,232.84h1.12v1.12h-1.12zM464.23,232.84h1.12v1.12h-1.12zM466.39,232.84h1.12v1.12h-1.12zM468.54,232.84h1.12v1.12h-1.12zM475.01,232.84h1.12v1.12h-1.12zM477.16,232.84h1.12v1.12h-1.12zM479.32,232.84h1.12v1.12h-1.12zM496.56,232.84h1.12v1.12h-1.12zM503.02,232.84h1.12v1.12h-1.12zM505.18,232.84h1.12v1.12h-1.12zM507.33,232.84h1.12v1.12h-1.12zM362.95,230.68h1.12v1.12h-1.12zM365.10,230.68h1.12v1.12h-1.12zM367.26,230.68h1.12v1.12h-1.12zM369.41,230.68h1.12v1.12h-1.12zM371.57,230.68h1.12v1.12h-1.12zM373.72,230.68h1.12v1.12h-1.12zM393.12,230.68h1.12v1.12h-1.12zM395.27,230.68h1.12v1.12h-1.12zM397.43,230.68h1.12v1.12h-1.12zM403.89,230.68h1.12v1.12h-1.12zM406.05,230.68h1.12v1.12h-1.12zM421.13,230.68h1.12v1.12h-1.12zM429.75,230.68h1.12v1.12h-1.12zM431.91,230.68h1.12v1.12h-1.12zM434.06,230.68h1.12v1.12h-1.12zM453.46,230.68h1.12v1.12h-1.12zM459.93,230.68h1.12v1.12h-1.12zM462.08,230.68h1.12v1.12h-1.12zM464.23,230.68h1.12v1.12h-1.12zM466.39,230.68h1.12v1.12h-1.12zM468.54,230.68h1.12v1.12h-1.12zM470.70,230.68h1.12v1.12h-1.12zM472.85,230.68h1.12v1.12h-1.12zM475.01,230.68h1.12v1.12h-1.12zM496.56,230.68h1.12v1.12h-1.12zM498.71,230.68h1.12v1.12h-1.12zM500.87,230.68h1.12v1.12h-1.12zM503.02,230.68h1.12v1.12h-1.12zM505.18,230.68h1.12v1.12h-1.12zM507.33,230.68h1.12v1.12h-1.12zM393.12,228.53h1.12v1.12h-1.12zM395.27,228.53h1.12v1.12h-1.12zM397.43,228.53h1.12v1.12h-1.12zM403.89,228.53h1.12v1.12h-1.12zM406.05,228.53h1.12v1.12h-1.12zM421.13,228.53h1.12v1.12h-1.12zM429.75,228.53h1.12v1.12h-1.12zM431.91,228.53h1.12v1.12h-1.12zM434.06,228.53h1.12v1.12h-1.12zM453.46,228.53h1.12v1.12h-1.12zM459.93,228.53h1.12v1.12h-1.12zM462.08,228.53h1.12v1.12h-1.12zM464.23,228.53h1.12v1.12h-1.12zM466.39,228.53h1.12v1.12h-1.12zM468.54,228.53h1.12v1.12h-1.12zM470.70,228.53h1.12v1.12h-1.12zM472.85,228.53h1.12v1.12h-1.12zM475.01,228.53h1.12v1.12h-1.12zM496.56,228.53h1.12v1.12h-1.12zM498.71,228.53h1.12v1.12h-1.12zM500.87,228.53h1.12v1.12h-1.12zM507.33,228.53h1.12v1.12h-1.12zM393.12,226.37h1.12v1.12h-1.12zM395.27,226.37h1.12v1.12h-1.12zM397.43,226.37h1.12v1.12h-1.12zM406.05,226.37h1.12v1.12h-1.12zM421.13,226.37h1.12v1.12h-1.12zM423.29,226.37h1.12v1.12h-1.12zM425.44,226.37h1.12v1.12h-1.12zM427.60,226.37h1.12v1.12h-1.12zM434.06,226.37h1.12v1.12h-1.12zM485.78,226.37h1.12v1.12h-1.12zM492.25,226.37h1.12v1.12h-1.12zM494.40,226.37h1.12v1.12h-1.12zM496.56,226.37h1.12v1.12h-1.12zM498.71,226.37h1.12v1.12h-1.12zM500.87,226.37h1.12v1.12h-1.12zM507.33,226.37h1.12v1.12h-1.12zM393.12,224.22h1.12v1.12h-1.12zM395.27,224.22h1.12v1.12h-1.12zM397.43,224.22h1.12v1.12h-1.12zM406.05,224.22h1.12v1.12h-1.12zM421.13,224.22h1.12v1.12h-1.12zM423.29,224.22h1.12v1.12h-1.12zM425.44,224.22h1.12v1.12h-1.12zM427.60,224.22h1.12v1.12h-1.12zM434.06,224.22h1.12v1.12h-1.12zM485.78,224.22h1.12v1.12h-1.12zM492.25,224.22h1.12v1.12h-1.12zM494.40,224.22h1.12v1.12h-1.12zM496.56,224.22h1.12v1.12h-1.12zM498.71,224.22h1.12v1.12h-1.12zM500.87,224.22h1.12v1.12h-1.12zM503.02,224.22h1.12v1.12h-1.12zM505.18,224.22h1.12v1.12h-1.12zM507.33,224.22h1.12v1.12h-1.12zM393.12,222.06h1.12v1.12h-1.12zM395.27,222.06h1.12v1.12h-1.12zM397.43,222.06h1.12v1.12h-1.12zM406.05,222.06h1.12v1.12h-1.12zM421.13,222.06h1.12v1.12h-1.12zM423.29,222.06h1.12v1.12h-1.12zM425.44,222.06h1.12v1.12h-1.12zM427.60,222.06h1.12v1.12h-1.12zM429.75,222.06h1.12v1.12h-1.12zM431.91,222.06h1.12v1.12h-1.12zM434.06,222.06h1.12v1.12h-1.12zM485.78,222.06h1.12v1.12h-1.12zM487.94,222.06h1.12v1.12h-1.12zM505.18,222.06h1.12v1.12h-1.12zM507.33,222.06h1.12v1.12h-1.12zM393.12,219.91h1.12v1.12h-1.12zM395.27,219.91h1.12v1.12h-1.12zM397.43,219.91h1.12v1.12h-1.12zM399.58,219.91h1.12v1.12h-1.12zM401.74,219.91h1.12v1.12h-1.12zM403.89,219.91h1.12v1.12h-1.12zM406.05,219.91h1.12v1.12h-1.12zM408.20,219.91h1.12v1.12h-1.12zM410.36,219.91h1.12v1.12h-1.12zM412.51,219.91h1.12v1.12h-1.12zM414.67,219.91h1.12v1.12h-1.12zM416.82,219.91h1.12v1.12h-1.12zM418.98,219.91h1.12v1.12h-1.12zM421.13,219.91h1.12v1.12h-1.12zM423.29,219.91h1.12v1.12h-1.12zM425.44,219.91h1.12v1.12h-1.12zM427.60,219.91h1.12v1.12h-1.12zM429.75,219.91h1.12v1.12h-1.12zM431.91,219.91h1.12v1.12h-1.12zM434.06,219.91h1.12v1.12h-1.12zM505.18,219.91h1.12v1.12h-1.12zM507.33,219.91h1.12v1.12h-1.12zM543.97,219.91h1.12v1.12h-1.12zM546.12,219.91h1.12v1.12h-1.12zM548.28,219.91h1.12v1.12h-1.12zM550.44,219.91h1.12v1.12h-1.12zM436.22,217.75h1.12v1.12h-1.12zM438.38,217.75h1.12v1.12h-1.12zM440.53,217.75h1.12v1.12h-1.12zM442.69,217.75h1.12v1.12h-1.12zM444.84,217.75h1.12v1.12h-1.12zM446.99,217.75h1.12v1.12h-1.12zM449.15,217.75h1.12v1.12h-1.12zM451.31,217.75h1.12v1.12h-1.12zM496.56,217.75h1.12v1.12h-1.12zM498.71,217.75h1.12v1.12h-1.12zM500.87,217.75h1.12v1.12h-1.12zM503.02,217.75h1.12v1.12h-1.12zM505.18,217.75h1.12v1.12h-1.12zM507.33,217.75h1.12v1.12h-1.12zM543.97,217.75h1.12v1.12h-1.12zM546.12,217.75h1.12v1.12h-1.12zM548.28,217.75h1.12v1.12h-1.12zM550.44,217.75h1.12v1.12h-1.12zM436.22,215.60h1.12v1.12h-1.12zM438.38,215.60h1.12v1.12h-1.12zM440.53,215.60h1.12v1.12h-1.12zM442.69,215.60h1.12v1.12h-1.12zM444.84,215.60h1.12v1.12h-1.12zM446.99,215.60h1.12v1.12h-1.12zM449.15,215.60h1.12v1.12h-1.12zM451.31,215.60h1.12v1.12h-1.12zM485.78,215.60h1.12v1.12h-1.12zM487.94,215.60h1.12v1.12h-1.12zM490.09,215.60h1.12v1.12h-1.12zM492.25,215.60h1.12v1.12h-1.12zM494.40,215.60h1.12v1.12h-1.12zM496.56,215.60h1.12v1.12h-1.12zM498.71,215.60h1.12v1.12h-1.12zM500.87,215.60h1.12v1.12h-1.12zM507.33,215.60h1.12v1.12h-1.12zM539.66,215.60h1.12v1.12h-1.12zM541.82,215.60h1.12v1.12h-1.12zM543.97,215.60h1.12v1.12h-1.12zM546.12,215.60h1.12v1.12h-1.12zM548.28,215.60h1.12v1.12h-1.12zM550.44,215.60h1.12v1.12h-1.12zM436.22,213.44h1.12v1.12h-1.12zM438.38,213.44h1.12v1.12h-1.12zM440.53,213.44h1.12v1.12h-1.12zM442.69,213.44h1.12v1.12h-1.12zM444.84,213.44h1.12v1.12h-1.12zM446.99,213.44h1.12v1.12h-1.12zM449.15,213.44h1.12v1.12h-1.12zM451.31,213.44h1.12v1.12h-1.12zM485.78,213.44h1.12v1.12h-1.12zM487.94,213.44h1.12v1.12h-1.12zM496.56,213.44h1.12v1.12h-1.12zM498.71,213.44h1.12v1.12h-1.12zM500.87,213.44h1.12v1.12h-1.12zM507.33,213.44h1.12v1.12h-1.12zM539.66,213.44h1.12v1.12h-1.12zM541.82,213.44h1.12v1.12h-1.12zM543.97,213.44h1.12v1.12h-1.12zM546.12,213.44h1.12v1.12h-1.12zM548.28,213.44h1.12v1.12h-1.12zM550.44,213.44h1.12v1.12h-1.12zM436.22,211.29h1.12v1.12h-1.12zM438.38,211.29h1.12v1.12h-1.12zM440.53,211.29h1.12v1.12h-1.12zM442.69,211.29h1.12v1.12h-1.12zM444.84,211.29h1.12v1.12h-1.12zM446.99,211.29h1.12v1.12h-1.12zM449.15,211.29h1.12v1.12h-1.12zM451.31,211.29h1.12v1.12h-1.12zM485.78,211.29h1.12v1.12h-1.12zM487.94,211.29h1.12v1.12h-1.12zM496.56,211.29h1.12v1.12h-1.12zM503.02,211.29h1.12v1.12h-1.12zM505.18,211.29h1.12v1.12h-1.12zM507.33,211.29h1.12v1.12h-1.12zM539.66,211.29h1.12v1.12h-1.12zM541.82,211.29h1.12v1.12h-1.12zM543.97,211.29h1.12v1.12h-1.12zM546.12,211.29h1.12v1.12h-1.12zM436.22,209.13h1.12v1.12h-1.12zM438.38,209.13h1.12v1.12h-1.12zM440.53,209.13h1.12v1.12h-1.12zM442.69,209.13h1.12v1.12h-1.12zM444.84,209.13h1.12v1.12h-1.12zM446.99,209.13h1.12v1.12h-1.12zM449.15,209.13h1.12v1.12h-1.12zM451.31,209.13h1.12v1.12h-1.12zM485.78,209.13h1.12v1.12h-1.12zM487.94,209.13h1.12v1.12h-1.12zM496.56,209.13h1.12v1.12h-1.12zM503.02,209.13h1.12v1.12h-1.12zM505.18,209.13h1.12v1.12h-1.12zM507.33,209.13h1.12v1.12h-1.12zM509.49,209.13h1.12v1.12h-1.12zM511.64,209.13h1.12v1.12h-1.12zM513.80,209.13h1.12v1.12h-1.12zM515.96,209.13h1.12v1.12h-1.12zM518.11,209.13h1.12v1.12h-1.12zM526.73,209.13h1.12v1.12h-1.12zM528.88,209.13h1.12v1.12h-1.12zM531.04,209.13h1.12v1.12h-1.12zM533.20,209.13h1.12v1.12h-1.12zM535.35,209.13h1.12v1.12h-1.12zM537.50,209.13h1.12v1.12h-1.12zM539.66,209.13h1.12v1.12h-1.12zM541.82,209.13h1.12v1.12h-1.12zM436.22,206.98h1.12v1.12h-1.12zM438.38,206.98h1.12v1.12h-1.12zM440.53,206.98h1.12v1.12h-1.12zM442.69,206.98h1.12v1.12h-1.12zM444.84,206.98h1.12v1.12h-1.12zM446.99,206.98h1.12v1.12h-1.12zM449.15,206.98h1.12v1.12h-1.12zM451.31,206.98h1.12v1.12h-1.12zM485.78,206.98h1.12v1.12h-1.12zM487.94,206.98h1.12v1.12h-1.12zM490.09,206.98h1.12v1.12h-1.12zM492.25,206.98h1.12v1.12h-1.12zM500.87,206.98h1.12v1.12h-1.12zM503.02,206.98h1.12v1.12h-1.12zM505.18,206.98h1.12v1.12h-1.12zM507.33,206.98h1.12v1.12h-1.12zM509.49,206.98h1.12v1.12h-1.12zM518.11,206.98h1.12v1.12h-1.12zM526.73,206.98h1.12v1.12h-1.12zM528.88,206.98h1.12v1.12h-1.12zM535.35,206.98h1.12v1.12h-1.12zM537.50,206.98h1.12v1.12h-1.12zM539.66,206.98h1.12v1.12h-1.12zM541.82,206.98h1.12v1.12h-1.12zM548.28,206.98h1.12v1.12h-1.12zM550.44,206.98h1.12v1.12h-1.12zM436.22,204.82h1.12v1.12h-1.12zM438.38,204.82h1.12v1.12h-1.12zM440.53,204.82h1.12v1.12h-1.12zM442.69,204.82h1.12v1.12h-1.12zM444.84,204.82h1.12v1.12h-1.12zM446.99,204.82h1.12v1.12h-1.12zM490.09,204.82h1.12v1.12h-1.12zM492.25,204.82h1.12v1.12h-1.12zM507.33,204.82h1.12v1.12h-1.12zM509.49,204.82h1.12v1.12h-1.12zM518.11,204.82h1.12v1.12h-1.12zM526.73,204.82h1.12v1.12h-1.12zM528.88,204.82h1.12v1.12h-1.12zM543.97,204.82h1.12v1.12h-1.12zM546.12,204.82h1.12v1.12h-1.12zM548.28,204.82h1.12v1.12h-1.12zM550.44,204.82h1.12v1.12h-1.12zM436.22,202.67h1.12v1.12h-1.12zM438.38,202.67h1.12v1.12h-1.12zM440.53,202.67h1.12v1.12h-1.12zM442.69,202.67h1.12v1.12h-1.12zM444.84,202.67h1.12v1.12h-1.12zM446.99,202.67h1.12v1.12h-1.12zM490.09,202.67h1.12v1.12h-1.12zM492.25,202.67h1.12v1.12h-1.12zM507.33,202.67h1.12v1.12h-1.12zM509.49,202.67h1.12v1.12h-1.12zM518.11,202.67h1.12v1.12h-1.12zM520.27,202.67h1.12v1.12h-1.12zM522.42,202.67h1.12v1.12h-1.12zM524.58,202.67h1.12v1.12h-1.12zM526.73,202.67h1.12v1.12h-1.12zM550.44,202.67h1.12v1.12h-1.12zM436.22,200.51h1.12v1.12h-1.12zM438.38,200.51h1.12v1.12h-1.12zM440.53,200.51h1.12v1.12h-1.12zM442.69,200.51h1.12v1.12h-1.12zM444.84,200.51h1.12v1.12h-1.12zM446.99,200.51h1.12v1.12h-1.12zM449.15,200.51h1.12v1.12h-1.12zM451.31,200.51h1.12v1.12h-1.12zM485.78,200.51h1.12v1.12h-1.12zM487.94,200.51h1.12v1.12h-1.12zM490.09,200.51h1.12v1.12h-1.12zM496.56,200.51h1.12v1.12h-1.12zM498.71,200.51h1.12v1.12h-1.12zM507.33,200.51h1.12v1.12h-1.12zM509.49,200.51h1.12v1.12h-1.12zM511.64,200.51h1.12v1.12h-1.12zM513.80,200.51h1.12v1.12h-1.12zM515.96,200.51h1.12v1.12h-1.12zM518.11,200.51h1.12v1.12h-1.12zM520.27,200.51h1.12v1.12h-1.12zM526.73,200.51h1.12v1.12h-1.12zM550.44,200.51h1.12v1.12h-1.12zM362.95,198.36h1.12v1.12h-1.12zM365.10,198.36h1.12v1.12h-1.12zM367.26,198.36h1.12v1.12h-1.12zM369.41,198.36h1.12v1.12h-1.12zM371.57,198.36h1.12v1.12h-1.12zM373.72,198.36h1.12v1.12h-1.12zM382.34,198.36h1.12v1.12h-1.12zM384.50,198.36h1.12v1.12h-1.12zM386.65,198.36h1.12v1.12h-1.12zM388.81,198.36h1.12v1.12h-1.12zM390.96,198.36h1.12v1.12h-1.12zM436.22,198.36h1.12v1.12h-1.12zM438.38,198.36h1.12v1.12h-1.12zM440.53,198.36h1.12v1.12h-1.12zM442.69,198.36h1.12v1.12h-1.12zM444.84,198.36h1.12v1.12h-1.12zM446.99,198.36h1.12v1.12h-1.12zM449.15,198.36h1.12v1.12h-1.12zM451.31,198.36h1.12v1.12h-1.12zM485.78,198.36h1.12v1.12h-1.12zM487.94,198.36h1.12v1.12h-1.12zM490.09,198.36h1.12v1.12h-1.12zM496.56,198.36h1.12v1.12h-1.12zM498.71,198.36h1.12v1.12h-1.12zM505.18,198.36h1.12v1.12h-1.12zM507.33,198.36h1.12v1.12h-1.12zM509.49,198.36h1.12v1.12h-1.12zM511.64,198.36h1.12v1.12h-1.12zM513.80,198.36h1.12v1.12h-1.12zM515.96,198.36h1.12v1.12h-1.12zM518.11,198.36h1.12v1.12h-1.12zM520.27,198.36h1.12v1.12h-1.12zM526.73,198.36h1.12v1.12h-1.12zM550.44,198.36h1.12v1.12h-1.12zM362.95,196.20h1.12v1.12h-1.12zM365.10,196.20h1.12v1.12h-1.12zM367.26,196.20h1.12v1.12h-1.12zM369.41,196.20h1.12v1.12h-1.12zM371.57,196.20h1.12v1.12h-1.12zM373.72,196.20h1.12v1.12h-1.12zM382.34,196.20h1.12v1.12h-1.12zM384.50,196.20h1.12v1.12h-1.12zM390.96,196.20h1.12v1.12h-1.12zM436.22,196.20h1.12v1.12h-1.12zM438.38,196.20h1.12v1.12h-1.12zM440.53,196.20h1.12v1.12h-1.12zM442.69,196.20h1.12v1.12h-1.12zM444.84,196.20h1.12v1.12h-1.12zM446.99,196.20h1.12v1.12h-1.12zM449.15,196.20h1.12v1.12h-1.12zM451.31,196.20h1.12v1.12h-1.12zM485.78,196.20h1.12v1.12h-1.12zM492.25,196.20h1.12v1.12h-1.12zM494.40,196.20h1.12v1.12h-1.12zM496.56,196.20h1.12v1.12h-1.12zM498.71,196.20h1.12v1.12h-1.12zM505.18,196.20h1.12v1.12h-1.12zM507.33,196.20h1.12v1.12h-1.12zM509.49,196.20h1.12v1.12h-1.12zM511.64,196.20h1.12v1.12h-1.12zM513.80,196.20h1.12v1.12h-1.12zM515.96,196.20h1.12v1.12h-1.12zM518.11,196.20h1.12v1.12h-1.12zM520.27,196.20h1.12v1.12h-1.12zM522.42,196.20h1.12v1.12h-1.12zM524.58,196.20h1.12v1.12h-1.12zM526.73,196.20h1.12v1.12h-1.12zM528.88,196.20h1.12v1.12h-1.12zM531.04,196.20h1.12v1.12h-1.12zM533.20,196.20h1.12v1.12h-1.12zM535.35,196.20h1.12v1.12h-1.12zM537.50,196.20h1.12v1.12h-1.12zM539.66,196.20h1.12v1.12h-1.12zM541.82,196.20h1.12v1.12h-1.12zM543.97,196.20h1.12v1.12h-1.12zM546.12,196.20h1.12v1.12h-1.12zM548.28,196.20h1.12v1.12h-1.12zM550.44,196.20h1.12v1.12h-1.12zM362.95,194.05h1.12v1.12h-1.12zM365.10,194.05h1.12v1.12h-1.12zM367.26,194.05h1.12v1.12h-1.12zM369.41,194.05h1.12v1.12h-1.12zM371.57,194.05h1.12v1.12h-1.12zM373.72,194.05h1.12v1.12h-1.12zM382.34,194.05h1.12v1.12h-1.12zM384.50,194.05h1.12v1.12h-1.12zM390.96,194.05h1.12v1.12h-1.12zM440.53,194.05h1.12v1.12h-1.12zM442.69,194.05h1.12v1.12h-1.12zM444.84,194.05h1.12v1.12h-1.12zM446.99,194.05h1.12v1.12h-1.12zM449.15,194.05h1.12v1.12h-1.12zM451.31,194.05h1.12v1.12h-1.12zM453.46,194.05h1.12v1.12h-1.12zM459.93,194.05h1.12v1.12h-1.12zM462.08,194.05h1.12v1.12h-1.12zM464.23,194.05h1.12v1.12h-1.12zM466.39,194.05h1.12v1.12h-1.12zM468.54,194.05h1.12v1.12h-1.12zM470.70,194.05h1.12v1.12h-1.12zM477.16,194.05h1.12v1.12h-1.12zM479.32,194.05h1.12v1.12h-1.12zM481.47,194.05h1.12v1.12h-1.12zM483.63,194.05h1.12v1.12h-1.12zM485.78,194.05h1.12v1.12h-1.12zM492.25,194.05h1.12v1.12h-1.12zM494.40,194.05h1.12v1.12h-1.12zM496.56,194.05h1.12v1.12h-1.12zM498.71,194.05h1.12v1.12h-1.12zM505.18,194.05h1.12v1.12h-1.12zM507.33,194.05h1.12v1.12h-1.12zM509.49,194.05h1.12v1.12h-1.12zM511.64,194.05h1.12v1.12h-1.12zM513.80,194.05h1.12v1.12h-1.12zM515.96,194.05h1.12v1.12h-1.12zM518.11,194.05h1.12v1.12h-1.12zM520.27,194.05h1.12v1.12h-1.12zM522.42,194.05h1.12v1.12h-1.12zM524.58,194.05h1.12v1.12h-1.12zM526.73,194.05h1.12v1.12h-1.12zM528.88,194.05h1.12v1.12h-1.12zM531.04,194.05h1.12v1.12h-1.12zM533.20,194.05h1.12v1.12h-1.12zM535.35,194.05h1.12v1.12h-1.12zM537.50,194.05h1.12v1.12h-1.12zM539.66,194.05h1.12v1.12h-1.12zM541.82,194.05h1.12v1.12h-1.12zM548.28,194.05h1.12v1.12h-1.12zM550.44,194.05h1.12v1.12h-1.12zM362.95,191.89h1.12v1.12h-1.12zM365.10,191.89h1.12v1.12h-1.12zM367.26,191.89h1.12v1.12h-1.12zM369.41,191.89h1.12v1.12h-1.12zM371.57,191.89h1.12v1.12h-1.12zM382.34,191.89h1.12v1.12h-1.12zM384.50,191.89h1.12v1.12h-1.12zM386.65,191.89h1.12v1.12h-1.12zM388.81,191.89h1.12v1.12h-1.12zM390.96,191.89h1.12v1.12h-1.12zM440.53,191.89h1.12v1.12h-1.12zM446.99,191.89h1.12v1.12h-1.12zM449.15,191.89h1.12v1.12h-1.12zM451.31,191.89h1.12v1.12h-1.12zM453.46,191.89h1.12v1.12h-1.12zM459.93,191.89h1.12v1.12h-1.12zM462.08,191.89h1.12v1.12h-1.12zM464.23,191.89h1.12v1.12h-1.12zM466.39,191.89h1.12v1.12h-1.12zM468.54,191.89h1.12v1.12h-1.12zM470.70,191.89h1.12v1.12h-1.12zM477.16,191.89h1.12v1.12h-1.12zM479.32,191.89h1.12v1.12h-1.12zM481.47,191.89h1.12v1.12h-1.12zM483.63,191.89h1.12v1.12h-1.12zM492.25,191.89h1.12v1.12h-1.12zM498.71,191.89h1.12v1.12h-1.12zM505.18,191.89h1.12v1.12h-1.12zM513.80,191.89h1.12v1.12h-1.12zM515.96,191.89h1.12v1.12h-1.12zM518.11,191.89h1.12v1.12h-1.12zM531.04,191.89h1.12v1.12h-1.12zM533.20,191.89h1.12v1.12h-1.12zM535.35,191.89h1.12v1.12h-1.12zM537.50,191.89h1.12v1.12h-1.12zM539.66,191.89h1.12v1.12h-1.12zM541.82,191.89h1.12v1.12h-1.12zM548.28,191.89h1.12v1.12h-1.12zM550.44,191.89h1.12v1.12h-1.12zM362.95,189.74h1.12v1.12h-1.12zM365.10,189.74h1.12v1.12h-1.12zM367.26,189.74h1.12v1.12h-1.12zM369.41,189.74h1.12v1.12h-1.12zM371.57,189.74h1.12v1.12h-1.12zM382.34,189.74h1.12v1.12h-1.12zM384.50,189.74h1.12v1.12h-1.12zM386.65,189.74h1.12v1.12h-1.12zM388.81,189.74h1.12v1.12h-1.12zM390.96,189.74h1.12v1.12h-1.12zM436.22,189.74h1.12v1.12h-1.12zM438.38,189.74h1.12v1.12h-1.12zM440.53,189.74h1.12v1.12h-1.12zM446.99,189.74h1.12v1.12h-1.12zM449.15,189.74h1.12v1.12h-1.12zM451.31,189.74h1.12v1.12h-1.12zM453.46,189.74h1.12v1.12h-1.12zM455.61,189.74h1.12v1.12h-1.12zM457.77,189.74h1.12v1.12h-1.12zM459.93,189.74h1.12v1.12h-1.12zM462.08,189.74h1.12v1.12h-1.12zM464.23,189.74h1.12v1.12h-1.12zM466.39,189.74h1.12v1.12h-1.12zM468.54,189.74h1.12v1.12h-1.12zM470.70,189.74h1.12v1.12h-1.12zM472.85,189.74h1.12v1.12h-1.12zM475.01,189.74h1.12v1.12h-1.12zM477.16,189.74h1.12v1.12h-1.12zM479.32,189.74h1.12v1.12h-1.12zM481.47,189.74h1.12v1.12h-1.12zM483.63,189.74h1.12v1.12h-1.12zM492.25,189.74h1.12v1.12h-1.12zM503.02,189.74h1.12v1.12h-1.12zM505.18,189.74h1.12v1.12h-1.12zM513.80,189.74h1.12v1.12h-1.12zM515.96,189.74h1.12v1.12h-1.12zM518.11,189.74h1.12v1.12h-1.12zM531.04,189.74h1.12v1.12h-1.12zM533.20,189.74h1.12v1.12h-1.12zM535.35,189.74h1.12v1.12h-1.12zM537.50,189.74h1.12v1.12h-1.12zM539.66,189.74h1.12v1.12h-1.12zM541.82,189.74h1.12v1.12h-1.12zM543.97,189.74h1.12v1.12h-1.12zM546.12,189.74h1.12v1.12h-1.12zM548.28,189.74h1.12v1.12h-1.12zM550.44,189.74h1.12v1.12h-1.12zM362.95,187.58h1.12v1.12h-1.12zM365.10,187.58h1.12v1.12h-1.12zM367.26,187.58h1.12v1.12h-1.12zM369.41,187.58h1.12v1.12h-1.12zM371.57,187.58h1.12v1.12h-1.12zM373.72,187.58h1.12v1.12h-1.12zM375.88,187.58h1.12v1.12h-1.12zM378.03,187.58h1.12v1.12h-1.12zM380.19,187.58h1.12v1.12h-1.12zM382.34,187.58h1.12v1.12h-1.12zM384.50,187.58h1.12v1.12h-1.12zM386.65,187.58h1.12v1.12h-1.12zM388.81,187.58h1.12v1.12h-1.12zM390.96,187.58h1.12v1.12h-1.12zM436.22,187.58h1.12v1.12h-1.12zM444.84,187.58h1.12v1.12h-1.12zM446.99,187.58h1.12v1.12h-1.12zM449.15,187.58h1.12v1.12h-1.12zM451.31,187.58h1.12v1.12h-1.12zM453.46,187.58h1.12v1.12h-1.12zM455.61,187.58h1.12v1.12h-1.12zM457.77,187.58h1.12v1.12h-1.12zM459.93,187.58h1.12v1.12h-1.12zM462.08,187.58h1.12v1.12h-1.12zM468.54,187.58h1.12v1.12h-1.12zM470.70,187.58h1.12v1.12h-1.12zM477.16,187.58h1.12v1.12h-1.12zM479.32,187.58h1.12v1.12h-1.12zM481.47,187.58h1.12v1.12h-1.12zM483.63,187.58h1.12v1.12h-1.12zM492.25,187.58h1.12v1.12h-1.12zM494.40,187.58h1.12v1.12h-1.12zM496.56,187.58h1.12v1.12h-1.12zM503.02,187.58h1.12v1.12h-1.12zM505.18,187.58h1.12v1.12h-1.12zM513.80,187.58h1.12v1.12h-1.12zM515.96,187.58h1.12v1.12h-1.12zM518.11,187.58h1.12v1.12h-1.12zM531.04,187.58h1.12v1.12h-1.12zM533.20,187.58h1.12v1.12h-1.12zM535.35,187.58h1.12v1.12h-1.12zM537.50,187.58h1.12v1.12h-1.12zM539.66,187.58h1.12v1.12h-1.12zM541.82,187.58h1.12v1.12h-1.12zM543.97,187.58h1.12v1.12h-1.12zM546.12,187.58h1.12v1.12h-1.12zM548.28,187.58h1.12v1.12h-1.12zM550.44,187.58h1.12v1.12h-1.12zM362.95,185.43h1.12v1.12h-1.12zM365.10,185.43h1.12v1.12h-1.12zM367.26,185.43h1.12v1.12h-1.12zM369.41,185.43h1.12v1.12h-1.12zM371.57,185.43h1.12v1.12h-1.12zM373.72,185.43h1.12v1.12h-1.12zM375.88,185.43h1.12v1.12h-1.12zM378.03,185.43h1.12v1.12h-1.12zM380.19,185.43h1.12v1.12h-1.12zM386.65,185.43h1.12v1.12h-1.12zM388.81,185.43h1.12v1.12h-1.12zM390.96,185.43h1.12v1.12h-1.12zM436.22,185.43h1.12v1.12h-1.12zM444.84,185.43h1.12v1.12h-1.12zM451.31,185.43h1.12v1.12h-1.12zM453.46,185.43h1.12v1.12h-1.12zM455.61,185.43h1.12v1.12h-1.12zM457.77,185.43h1.12v1.12h-1.12zM459.93,185.43h1.12v1.12h-1.12zM462.08,185.43h1.12v1.12h-1.12zM468.54,185.43h1.12v1.12h-1.12zM470.70,185.43h1.12v1.12h-1.12zM477.16,185.43h1.12v1.12h-1.12zM479.32,185.43h1.12v1.12h-1.12zM481.47,185.43h1.12v1.12h-1.12zM483.63,185.43h1.12v1.12h-1.12zM485.78,185.43h1.12v1.12h-1.12zM487.94,185.43h1.12v1.12h-1.12zM490.09,185.43h1.12v1.12h-1.12zM492.25,185.43h1.12v1.12h-1.12zM494.40,185.43h1.12v1.12h-1.12zM496.56,185.43h1.12v1.12h-1.12zM498.71,185.43h1.12v1.12h-1.12zM500.87,185.43h1.12v1.12h-1.12zM503.02,185.43h1.12v1.12h-1.12zM505.18,185.43h1.12v1.12h-1.12zM511.64,185.43h1.12v1.12h-1.12zM518.11,185.43h1.12v1.12h-1.12zM531.04,185.43h1.12v1.12h-1.12zM533.20,185.43h1.12v1.12h-1.12zM535.35,185.43h1.12v1.12h-1.12zM537.50,185.43h1.12v1.12h-1.12zM539.66,185.43h1.12v1.12h-1.12zM541.82,185.43h1.12v1.12h-1.12zM543.97,185.43h1.12v1.12h-1.12zM550.44,185.43h1.12v1.12h-1.12zM362.95,183.27h1.12v1.12h-1.12zM365.10,183.27h1.12v1.12h-1.12zM367.26,183.27h1.12v1.12h-1.12zM369.41,183.27h1.12v1.12h-1.12zM371.57,183.27h1.12v1.12h-1.12zM373.72,183.27h1.12v1.12h-1.12zM375.88,183.27h1.12v1.12h-1.12zM378.03,183.27h1.12v1.12h-1.12zM380.19,183.27h1.12v1.12h-1.12zM386.65,183.27h1.12v1.12h-1.12zM388.81,183.27h1.12v1.12h-1.12zM390.96,183.27h1.12v1.12h-1.12zM436.22,183.27h1.12v1.12h-1.12zM444.84,183.27h1.12v1.12h-1.12zM451.31,183.27h1.12v1.12h-1.12zM453.46,183.27h1.12v1.12h-1.12zM455.61,183.27h1.12v1.12h-1.12zM457.77,183.27h1.12v1.12h-1.12zM459.93,183.27h1.12v1.12h-1.12zM462.08,183.27h1.12v1.12h-1.12zM464.23,183.27h1.12v1.12h-1.12zM466.39,183.27h1.12v1.12h-1.12zM468.54,183.27h1.12v1.12h-1.12zM470.70,183.27h1.12v1.12h-1.12zM472.85,183.27h1.12v1.12h-1.12zM475.01,183.27h1.12v1.12h-1.12zM477.16,183.27h1.12v1.12h-1.12zM479.32,183.27h1.12v1.12h-1.12zM481.47,183.27h1.12v1.12h-1.12zM483.63,183.27h1.12v1.12h-1.12zM485.78,183.27h1.12v1.12h-1.12zM487.94,183.27h1.12v1.12h-1.12zM490.09,183.27h1.12v1.12h-1.12zM492.25,183.27h1.12v1.12h-1.12zM494.40,183.27h1.12v1.12h-1.12zM496.56,183.27h1.12v1.12h-1.12zM498.71,183.27h1.12v1.12h-1.12zM500.87,183.27h1.12v1.12h-1.12zM503.02,183.27h1.12v1.12h-1.12zM505.18,183.27h1.12v1.12h-1.12zM511.64,183.27h1.12v1.12h-1.12zM518.11,183.27h1.12v1.12h-1.12zM531.04,183.27h1.12v1.12h-1.12zM533.20,183.27h1.12v1.12h-1.12zM535.35,183.27h1.12v1.12h-1.12zM537.50,183.27h1.12v1.12h-1.12zM539.66,183.27h1.12v1.12h-1.12zM541.82,183.27h1.12v1.12h-1.12zM543.97,183.27h1.12v1.12h-1.12zM550.44,183.27h1.12v1.12h-1.12z" fill="#7a9e12"/>
<path d="M392.94,176.63h42.55v42.55h-42.55zM362.77,200.34h29.62v29.62h-29.62zM453.28,196.03h31.77v31.77h-31.77zM509.31,211.11h29.62v29.62h-29.62zM384.32,245.59h21.00v21.00h-21.00zM375.70,267.14h21.00v21.00h-21.00zM429.58,239.13h16.69v16.69h-16.69zM436.04,219.73h16.69v16.69h-16.69zM448.97,290.85h16.69v16.69h-16.69zM520.09,327.48h16.69v16.69h-16.69zM505.00,331.79h14.53v14.53h-14.53zM539.49,221.89h12.38v12.38h-12.38zM539.49,236.97h12.38v12.38h-12.38zM481.30,228.35h14.53v14.53h-14.53zM408.03,221.89h12.38v12.38h-12.38zM362.77,277.92h12.38v12.38h-12.38zM509.31,280.07h12.38v12.38h-12.38zM522.25,280.07h12.38v12.38h-12.38zM470.52,249.90h12.38v12.38h-12.38zM380.01,230.51h12.38v12.38h-12.38zM395.10,232.66h10.22v10.22h-10.22zM410.18,282.23h10.22v10.22h-10.22zM520.09,183.10h10.22v10.22h-10.22zM461.90,336.10h10.22v10.22h-10.22zM375.70,310.24h8.07v8.07h-8.07zM369.24,318.86h8.07v8.07h-8.07zM414.50,273.61h8.07v8.07h-8.07zM423.11,321.01h8.07v8.07h-8.07zM429.58,258.52h8.07v8.07h-8.07zM535.17,198.18h8.07v8.07h-8.07zM509.31,299.47h8.07v8.07h-8.07zM530.86,262.83h8.07v8.07h-8.07z" fill="#557a00"/>
<path d="M449.05,176.71h5.76v5.76h-5.76zM470.60,232.74h3.61v3.61h-3.61zM377.94,290.92h3.61v3.61h-3.61zM518.01,301.70h3.61v3.61h-3.61zM537.40,273.68h3.61v3.61h-3.61zM528.78,243.51h3.61v3.61h-3.61zM395.18,310.32h5.76v5.76h-5.76zM490.00,209.03h5.76v5.76h-5.76zM446.89,318.94h5.76v5.76h-5.76zM494.31,299.54h3.61v3.61h-3.61zM539.56,318.94h3.61v3.61h-3.61zM505.08,243.51h3.61v3.61h-3.61zM459.83,282.30h3.61v3.61h-3.61zM511.55,202.57h5.76v5.76h-5.76zM537.40,282.30h3.61v3.61h-3.61zM425.35,288.77h3.61v3.61h-3.61zM498.62,243.51h5.76v5.76h-5.76zM369.31,267.22h3.61v3.61h-3.61zM433.97,288.77h5.76v5.76h-5.76zM461.98,321.09h3.61v3.61h-3.61zM416.73,247.82h5.76v5.76h-5.76zM494.31,342.64h3.61v3.61h-3.61zM543.87,310.32h3.61v3.61h-3.61zM384.40,299.54h3.61v3.61h-3.61zM541.72,314.63h3.61v3.61h-3.61zM399.49,221.96h5.76v5.76h-5.76zM421.04,262.91h3.61v3.61h-3.61zM377.94,245.67h3.61v3.61h-3.61zM543.87,198.26h5.76v5.76h-5.76zM500.77,308.16h3.61v3.61h-3.61zM410.26,303.85h3.61v3.61h-3.61zM533.10,308.16h5.76v5.76h-5.76zM377.94,252.13h5.76v5.76h-5.76zM507.24,187.48h5.76v5.76h-5.76zM429.66,290.92h3.61v3.61h-3.61zM485.69,187.48h5.76v5.76h-5.76zM530.94,204.72h3.61v3.61h-3.61zM485.69,202.57h3.61v3.61h-3.61zM494.31,202.57h5.76v5.76h-5.76zM505.08,271.53h3.61v3.61h-3.61zM477.06,310.32h3.61v3.61h-3.61zM483.53,256.44h3.61v3.61h-3.61zM546.02,277.99h3.61v3.61h-3.61zM395.18,301.70h3.61v3.61h-3.61zM401.64,273.68h3.61v3.61h-3.61zM490.00,282.30h3.61v3.61h-3.61zM546.02,282.30h3.61v3.61h-3.61zM455.51,228.43h3.61v3.61h-3.61zM459.83,256.44h3.61v3.61h-3.61zM367.16,234.89h5.76v5.76h-5.76zM505.08,262.91h3.61v3.61h-3.61zM390.87,321.09h3.61v3.61h-3.61zM436.12,308.16h3.61v3.61h-3.61zM548.18,271.53h3.61v3.61h-3.61zM520.17,204.72h5.76v5.76h-5.76zM436.12,338.33h3.61v3.61h-3.61zM433.97,321.09h3.61v3.61h-3.61zM455.51,191.79h3.61v3.61h-3.61zM405.95,271.53h3.61v3.61h-3.61zM535.25,258.60h3.61v3.61h-3.61zM500.77,293.08h5.76v5.76h-5.76zM457.67,338.33h3.61v3.61h-3.61zM371.47,340.49h3.61v3.61h-3.61zM500.77,191.79h3.61v3.61h-3.61zM502.93,213.34h3.61v3.61h-3.61zM485.69,314.63h3.61v3.61h-3.61zM543.87,206.88h3.61v3.61h-3.61zM416.73,306.01h3.61v3.61h-3.61zM365.00,323.25h3.61v3.61h-3.61zM481.38,299.54h3.61v3.61h-3.61zM546.02,262.91h5.76v5.76h-5.76zM487.84,293.08h3.61v3.61h-3.61zM513.70,254.29h3.61v3.61h-3.61zM371.47,258.60h3.61v3.61h-3.61zM453.36,239.20h3.61v3.61h-3.61zM492.15,267.22h3.61v3.61h-3.61zM541.72,286.61h5.76v5.76h-5.76zM500.77,342.64h3.61v3.61h-3.61zM472.75,331.87h3.61v3.61h-3.61zM367.16,260.75h3.61v3.61h-3.61zM522.32,198.26h3.61v3.61h-3.61zM498.62,301.70h3.61v3.61h-3.61zM533.10,303.85h3.61v3.61h-3.61zM502.93,226.27h3.61v3.61h-3.61zM369.31,331.87h3.61v3.61h-3.61zM375.78,336.18h5.76v5.76h-5.76zM500.77,196.10h3.61v3.61h-3.61zM492.15,273.68h3.61v3.61h-3.61zM433.97,277.99h3.61v3.61h-3.61zM466.29,321.09h5.76v5.76h-5.76zM440.43,329.71h5.76v5.76h-5.76zM526.63,303.85h3.61v3.61h-3.61zM494.31,327.56h3.61v3.61h-3.61zM436.12,314.63h5.76v5.76h-5.76zM548.18,209.03h3.61v3.61h-3.61zM500.77,219.81h3.61v3.61h-3.61zM468.44,286.61h3.61v3.61h-3.61zM382.25,183.17h3.61v3.61h-3.61zM461.98,308.16h3.61v3.61h-3.61zM498.62,209.03h3.61v3.61h-3.61zM369.31,299.54h3.61v3.61h-3.61zM496.46,219.81h3.61v3.61h-3.61zM444.74,303.85h3.61v3.61h-3.61zM457.67,239.20h3.61v3.61h-3.61zM451.21,249.98h3.61v3.61h-3.61zM395.18,288.77h3.61v3.61h-3.61zM442.59,273.68h3.61v3.61h-3.61zM524.48,323.25h3.61v3.61h-3.61zM479.22,267.22h3.61v3.61h-3.61zM429.66,269.37h3.61v3.61h-3.61zM502.93,256.44h3.61v3.61h-3.61zM375.78,230.58h3.61v3.61h-3.61zM397.33,295.23h5.76v5.76h-5.76zM472.75,277.99h3.61v3.61h-3.61zM494.31,189.64h3.61v3.61h-3.61zM485.69,252.13h3.61v3.61h-3.61zM479.22,303.85h5.76v5.76h-5.76zM410.26,249.98h3.61v3.61h-3.61zM464.13,271.53h3.61v3.61h-3.61zM418.88,237.05h5.76v5.76h-5.76zM455.51,327.56h3.61v3.61h-3.61zM438.28,183.17h5.76v5.76h-5.76zM446.89,338.33h3.61v3.61h-3.61zM490.00,217.65h5.76v5.76h-5.76zM539.56,217.65h3.61v3.61h-3.61zM397.33,280.15h3.61v3.61h-3.61zM507.24,183.17h3.61v3.61h-3.61zM468.44,271.53h3.61v3.61h-3.61zM509.39,260.75h3.61v3.61h-3.61zM492.15,198.26h3.61v3.61h-3.61zM513.70,275.84h3.61v3.61h-3.61zM367.16,290.92h3.61v3.61h-3.61zM464.13,280.15h3.61v3.61h-3.61zM371.47,247.82h5.76v5.76h-5.76zM461.98,234.89h3.61v3.61h-3.61zM362.85,262.91h3.61v3.61h-3.61zM416.73,256.44h5.76v5.76h-5.76zM477.06,325.40h5.76v5.76h-5.76zM414.57,293.08h3.61v3.61h-3.61zM490.00,331.87h5.76v5.76h-5.76zM390.87,342.64h3.61v3.61h-3.61zM438.28,321.09h3.61v3.61h-3.61zM429.66,232.74h3.61v3.61h-3.61zM380.09,325.40h5.76v5.76h-5.76zM414.57,325.40h3.61v3.61h-3.61zM449.05,267.22h3.61v3.61h-3.61zM425.35,314.63h3.61v3.61h-3.61zM487.84,243.51h3.61v3.61h-3.61zM470.60,299.54h3.61v3.61h-3.61zM533.10,321.09h3.61v3.61h-3.61zM399.49,228.43h3.61v3.61h-3.61zM442.59,267.22h3.61v3.61h-3.61zM427.50,301.70h3.61v3.61h-3.61zM464.13,329.71h5.76v5.76h-5.76zM425.35,310.32h3.61v3.61h-3.61zM371.47,241.36h3.61v3.61h-3.61zM412.42,258.60h3.61v3.61h-3.61zM474.91,316.78h3.61v3.61h-3.61zM543.87,191.79h3.61v3.61h-3.61zM541.72,299.54h3.61v3.61h-3.61zM546.02,258.60h3.61v3.61h-3.61zM375.78,258.60h3.61v3.61h-3.61zM367.16,243.51h3.61v3.61h-3.61zM472.75,185.33h3.61v3.61h-3.61zM487.84,299.54h3.61v3.61h-3.61zM365.00,329.71h3.61v3.61h-3.61zM520.17,241.36h3.61v3.61h-3.61zM440.43,299.54h3.61v3.61h-3.61zM408.11,323.25h5.76v5.76h-5.76zM444.74,308.16h3.61v3.61h-3.61zM494.31,256.44h3.61v3.61h-3.61zM533.10,299.54h3.61v3.61h-3.61zM468.44,245.67h3.61v3.61h-3.61zM373.62,189.64h3.61v3.61h-3.61zM546.02,254.29h3.61v3.61h-3.61zM446.89,183.17h3.61v3.61h-3.61zM500.77,200.41h5.76v5.76h-5.76zM449.05,202.57h3.61v3.61h-3.61zM541.72,306.01h3.61v3.61h-3.61zM457.67,273.68h3.61v3.61h-3.61zM494.31,284.46h5.76v5.76h-5.76zM449.05,241.36h3.61v3.61h-3.61zM405.95,267.22h3.61v3.61h-3.61zM466.29,297.39h3.61v3.61h-3.61zM453.36,321.09h3.61v3.61h-3.61zM375.78,342.64h3.61v3.61h-3.61zM423.19,228.43h5.76v5.76h-5.76zM399.49,340.49h3.61v3.61h-3.61zM380.09,303.85h3.61v3.61h-3.61zM472.75,271.53h3.61v3.61h-3.61zM377.94,189.64h3.61v3.61h-3.61zM528.78,198.26h5.76v5.76h-5.76zM429.66,295.23h5.76v5.76h-5.76zM373.62,327.56h3.61v3.61h-3.61zM474.91,288.77h3.61v3.61h-3.61zM530.94,295.23h3.61v3.61h-3.61zM453.36,271.53h3.61v3.61h-3.61zM436.12,191.79h3.61v3.61h-3.61zM405.95,254.29h3.61v3.61h-3.61zM362.85,334.02h5.76v5.76h-5.76zM369.31,312.47h3.61v3.61h-3.61zM373.62,306.01h3.61v3.61h-3.61zM524.48,243.51h3.61v3.61h-3.61zM509.39,325.40h3.61v3.61h-3.61zM418.88,312.47h3.61v3.61h-3.61zM494.31,316.78h3.61v3.61h-3.61zM464.13,254.29h3.61v3.61h-3.61zM375.78,193.95h5.76v5.76h-5.76zM496.46,293.08h3.61v3.61h-3.61zM440.43,284.46h3.61v3.61h-3.61zM515.86,312.47h5.76v5.76h-5.76zM459.83,316.78h3.61v3.61h-3.61zM408.11,237.05h5.76v5.76h-5.76zM487.84,308.16h3.61v3.61h-3.61zM522.32,254.29h3.61v3.61h-3.61zM483.53,271.53h5.76v5.76h-5.76zM490.00,277.99h3.61v3.61h-3.61zM414.57,267.22h5.76v5.76h-5.76zM444.74,260.75h3.61v3.61h-3.61zM537.40,314.63h3.61v3.61h-3.61zM481.38,282.30h3.61v3.61h-3.61zM429.66,224.12h3.61v3.61h-3.61zM546.02,183.17h3.61v3.61h-3.61zM548.18,293.08h3.61v3.61h-3.61zM487.84,224.12h3.61v3.61h-3.61zM541.72,254.29h3.61v3.61h-3.61zM371.47,273.68h3.61v3.61h-3.61zM421.04,297.39h5.76v5.76h-5.76zM505.08,247.82h3.61v3.61h-3.61zM477.06,228.43h3.61v3.61h-3.61zM522.32,271.53h3.61v3.61h-3.61zM397.33,325.40h3.61v3.61h-3.61zM490.00,262.91h3.61v3.61h-3.61zM377.94,321.09h3.61v3.61h-3.61zM418.88,323.25h3.61v3.61h-3.61zM431.81,316.78h3.61v3.61h-3.61zM485.69,247.82h3.61v3.61h-3.61zM408.11,316.78h5.76v5.76h-5.76zM477.06,280.15h3.61v3.61h-3.61zM548.18,323.25h3.61v3.61h-3.61zM455.51,316.78h3.61v3.61h-3.61zM498.62,232.74h3.61v3.61h-3.61zM500.77,269.37h3.61v3.61h-3.61zM449.05,260.75h3.61v3.61h-3.61zM524.48,318.94h3.61v3.61h-3.61zM472.75,191.79h3.61v3.61h-3.61zM388.71,293.08h3.61v3.61h-3.61zM515.86,271.53h3.61v3.61h-3.61zM498.62,187.48h3.61v3.61h-3.61zM403.80,340.49h3.61v3.61h-3.61zM362.85,340.49h3.61v3.61h-3.61zM442.59,189.64h3.61v3.61h-3.61zM533.10,252.13h3.61v3.61h-3.61zM466.29,237.05h3.61v3.61h-3.61zM440.43,340.49h5.76v5.76h-5.76zM433.97,269.37h3.61v3.61h-3.61zM446.89,327.56h3.61v3.61h-3.61zM490.00,286.61h3.61v3.61h-3.61zM487.84,193.95h3.61v3.61h-3.61zM509.39,245.67h3.61v3.61h-3.61zM425.35,234.89h3.61v3.61h-3.61zM421.04,290.92h3.61v3.61h-3.61zM412.42,262.91h3.61v3.61h-3.61zM429.66,331.87h3.61v3.61h-3.61zM464.13,312.47h5.76v5.76h-5.76zM515.86,241.36h3.61v3.61h-3.61zM459.83,327.56h3.61v3.61h-3.61zM388.71,303.85h3.61v3.61h-3.61zM414.57,331.87h5.76v5.76h-5.76zM494.31,312.47h3.61v3.61h-3.61zM377.94,262.91h3.61v3.61h-3.61zM537.40,338.33h3.61v3.61h-3.61zM474.91,284.46h3.61v3.61h-3.61zM520.17,293.08h3.61v3.61h-3.61zM453.36,265.06h3.61v3.61h-3.61zM494.31,306.01h3.61v3.61h-3.61zM464.13,185.33h3.61v3.61h-3.61zM446.89,273.68h3.61v3.61h-3.61zM472.75,306.01h3.61v3.61h-3.61zM455.51,232.74h3.61v3.61h-3.61zM479.22,340.49h3.61v3.61h-3.61zM423.19,306.01h3.61v3.61h-3.61zM481.38,277.99h3.61v3.61h-3.61zM386.56,193.95h3.61v3.61h-3.61zM513.70,258.60h5.76v5.76h-5.76zM405.95,277.99h3.61v3.61h-3.61zM528.78,247.82h3.61v3.61h-3.61zM548.18,301.70h3.61v3.61h-3.61zM455.51,245.67h3.61v3.61h-3.61zM548.18,288.77h3.61v3.61h-3.61zM513.70,183.17h3.61v3.61h-3.61zM485.69,217.65h3.61v3.61h-3.61zM459.83,262.91h3.61v3.61h-3.61zM483.53,260.75h3.61v3.61h-3.61z" fill="#62900a"/>
<path d="M451.21,334.02h3.61v3.61h-3.61zM382.25,331.87h3.61v3.61h-3.61zM399.49,334.02h3.61v3.61h-3.61zM537.40,334.02h3.61v3.61h-3.61zM455.51,331.87h3.61v3.61h-3.61zM403.80,334.02h3.61v3.61h-3.61z" fill="#b0881c"/>
<path d="M500.77,334.02h3.61v3.61h-3.61zM477.06,334.02h3.61v3.61h-3.61zM546.02,334.02h3.61v3.61h-3.61zM425.35,331.87h3.61v3.61h-3.61zM433.97,334.02h3.61v3.61h-3.61z" fill="#8a9a18"/>
<path d="M377.94,331.87h3.61v3.61h-3.61zM421.04,334.02h3.61v3.61h-3.61z" fill="#98901e"/>
<path d="M395.18,331.87h3.61v3.61h-3.61zM408.11,334.02h3.61v3.61h-3.61z" fill="#b8842a"/>
<path d="M401.64,327.56h3.61v3.61h-3.61zM485.69,329.71h3.61v3.61h-3.61zM500.77,327.56h3.61v3.61h-3.61zM393.02,327.56h3.61v3.61h-3.61z" fill="#d19a24"/>
<path d="M505.08,327.56h3.61v3.61h-3.61z" fill="#b9862a"/>
<path d="M388.71,329.71h3.61v3.61h-3.61z" fill="#c98e1a"/>
<rect x="560.4" y="385.4" width="27" height="13.2" rx="1.6" fill="none" stroke="#1f98a8" stroke-width="0.8"/>
<text x="573.60" y="394.80" font-size="6.74" fill="#2cc4d4" stroke="#2cc4d4" stroke-width="0.108" text-anchor="middle" font-weight="normal" font-style="normal"  textLength="19.60" lengthAdjust="spacingAndGlyphs">Details</text>
<text x="96.80" y="420.90" font-size="13.70" fill="#fff" stroke="#fff" stroke-width="0.150" text-anchor="start" font-weight="normal" font-style="normal"  textLength="116.30" lengthAdjust="spacingAndGlyphs">2,991 transactions</text>
<rect x="439.9" y="406.1" width="147.3" height="16.5" fill="#181d2d"/>
<rect x="475.1" y="406.1" width="15.8" height="16.5" fill="#6d3dbd"/>
<text x="449.70" y="417.00" font-size="7.06" fill="#6b7080" stroke="#6b7080" stroke-width="0.113" text-anchor="middle" font-weight="normal" font-style="normal"  textLength="7.34" lengthAdjust="spacingAndGlyphs">««</text>
<text x="467.40" y="417.00" font-size="7.06" fill="#6b7080" stroke="#6b7080" stroke-width="0.113" text-anchor="middle" font-weight="normal" font-style="normal" >«</text>
<text x="483.00" y="417.60" font-size="8.56" fill="#fff" stroke="#fff" stroke-width="0.137" text-anchor="middle" font-weight="bold" font-style="normal" >1</text>
<text x="498.50" y="417.60" font-size="8.56" fill="#1bd8f4" stroke="#1bd8f4" stroke-width="0.137" text-anchor="middle" font-weight="normal" font-style="normal" >2</text>
<text x="513.80" y="417.60" font-size="8.56" fill="#1bd8f4" stroke="#1bd8f4" stroke-width="0.137" text-anchor="middle" font-weight="normal" font-style="normal" >3</text>
<text x="529.00" y="417.60" font-size="8.56" fill="#1bd8f4" stroke="#1bd8f4" stroke-width="0.137" text-anchor="middle" font-weight="normal" font-style="normal" >4</text>
<text x="544.20" y="417.60" font-size="8.56" fill="#1bd8f4" stroke="#1bd8f4" stroke-width="0.137" text-anchor="middle" font-weight="normal" font-style="normal" >5</text>
<text x="559.80" y="417.00" font-size="7.06" fill="#1bd8f4" stroke="#1bd8f4" stroke-width="0.113" text-anchor="middle" font-weight="normal" font-style="normal" >»</text>
<text x="577.30" y="417.00" font-size="7.06" fill="#1bd8f4" stroke="#1bd8f4" stroke-width="0.113" text-anchor="middle" font-weight="normal" font-style="normal"  textLength="7.34" lengthAdjust="spacingAndGlyphs">»»</text>
<rect x="96.3" y="426.3" width="491.0" height="20.0" fill="#181d2d"/>
<text x="101.60" y="439.60" font-size="7.28" fill="#1bd8f4" stroke="#1bd8f4" stroke-width="0.117" text-anchor="start" font-weight="normal" font-style="normal"  textLength="219.20" lengthAdjust="spacingAndGlyphs">22983eecd523947149ffebef474114d5efafc25989df8fa348f13105aad236ba</text>
<text x="523.60" y="439.40" font-size="7.06" fill="#fff" stroke="#fff" stroke-width="0.113" text-anchor="start" font-weight="normal" font-style="normal"  textLength="59.20" lengthAdjust="spacingAndGlyphs">2026-03-01 11:41:15</text>
<rect x="96" y="451.0" width="491.3" height="40" fill="#181d2d"/>
<circle cx="113.3" cy="466.7" r="3.8" fill="#a4a5aa"/>
<path d="M111.20,466.70 h3.7 M113.30,465.00 l1.75,1.7 l-1.75,1.7" stroke="#181d2d" stroke-width="1.2" fill="none" stroke-linecap="round" stroke-linejoin="round"/>
<text x="121.20" y="469.60" font-size="6.96" fill="#fff" stroke="#fff" stroke-width="0.111" text-anchor="start" font-weight="normal" font-style="normal"  textLength="99.90" lengthAdjust="spacingAndGlyphs">Coinbase (Newly Generated Coins)</text>
<rect x="120.9" y="473.8" width="100.8" height="6.0" rx="1.0" fill="#262b40"/>
<text x="122.80" y="478.80" font-size="5.03" fill="#fff"  text-anchor="start" font-weight="bold" font-style="normal"  textLength="97.40" lengthAdjust="spacingAndGlyphs">S&lt; OCEAN.XYZ &gt;Barefoot MiningxJ--jDZ</text>
<text x="350.70" y="470.10" font-size="6.96" fill="#fff" stroke="#fff" stroke-width="0.111" text-anchor="start" font-weight="normal" font-style="normal"  textLength="36.00" lengthAdjust="spacingAndGlyphs">OP_RETURN</text>
<rect x="390.3" y="464.6" width="24.1" height="6.2" rx="1.6" fill="#1c2133" stroke="#3a4058" stroke-width="0.6"/>
<text x="392.10" y="469.50" font-size="4.82" fill="#fff"  text-anchor="start" font-weight="bold" font-style="normal"  textLength="20.60" lengthAdjust="spacingAndGlyphs">OCB1P,.~</text>
<text x="350.70" y="482.40" font-size="6.96" fill="#1bd8f4" stroke="#1bd8f4" stroke-width="0.111" text-anchor="start" font-weight="normal" font-style="normal"  textLength="94.40" lengthAdjust="spacingAndGlyphs">bc1qztuue9qkmj48zhwxww6rzq...</text>
<text x="451.70" y="482.40" font-size="6.96" fill="#1bd8f4" stroke="#1bd8f4" stroke-width="0.111" text-anchor="start" font-weight="normal" font-style="normal"  textLength="28.60" lengthAdjust="spacingAndGlyphs">g7kudnv2</text>
<text x="514.80" y="469.30" font-size="7.17" fill="#fff" stroke="#fff" stroke-width="0.115" text-anchor="start" font-weight="normal" font-style="normal"  textLength="35.80" lengthAdjust="spacingAndGlyphs">0.00000000</text>
<text x="552.20" y="469.30" font-size="5.14" fill="#a4a8b4" stroke="#a4a8b4" stroke-width="0.082" text-anchor="start" font-weight="normal" font-style="normal"  textLength="9.60" lengthAdjust="spacingAndGlyphs">BTC</text>
<text x="516.90" y="482.30" font-size="7.17" fill="#fff" stroke="#fff" stroke-width="0.115" text-anchor="start" font-weight="normal" font-style="normal"  textLength="33.70" lengthAdjust="spacingAndGlyphs">0.77796915</text>
<text x="552.20" y="482.30" font-size="5.14" fill="#a4a8b4" stroke="#a4a8b4" stroke-width="0.082" text-anchor="start" font-weight="normal" font-style="normal"  textLength="9.60" lengthAdjust="spacingAndGlyphs">BTC</text>
<circle cx="572.2" cy="466.8" r="3.8" fill="#a4a5aa"/>
<path d="M570.10,466.80 h3.7 M572.20,465.10 l1.75,1.7 l-1.75,1.7" stroke="#181d2d" stroke-width="1.2" fill="none" stroke-linecap="round" stroke-linejoin="round"/>
<circle cx="572.2" cy="480.2" r="3.8" fill="#9be21c"/>
<path d="M570.10,480.20 h3.7 M572.20,478.50 l1.75,1.7 l-1.75,1.7" stroke="#181d2d" stroke-width="1.2" fill="none" stroke-linecap="round" stroke-linejoin="round"/>
</svg></body></html>
